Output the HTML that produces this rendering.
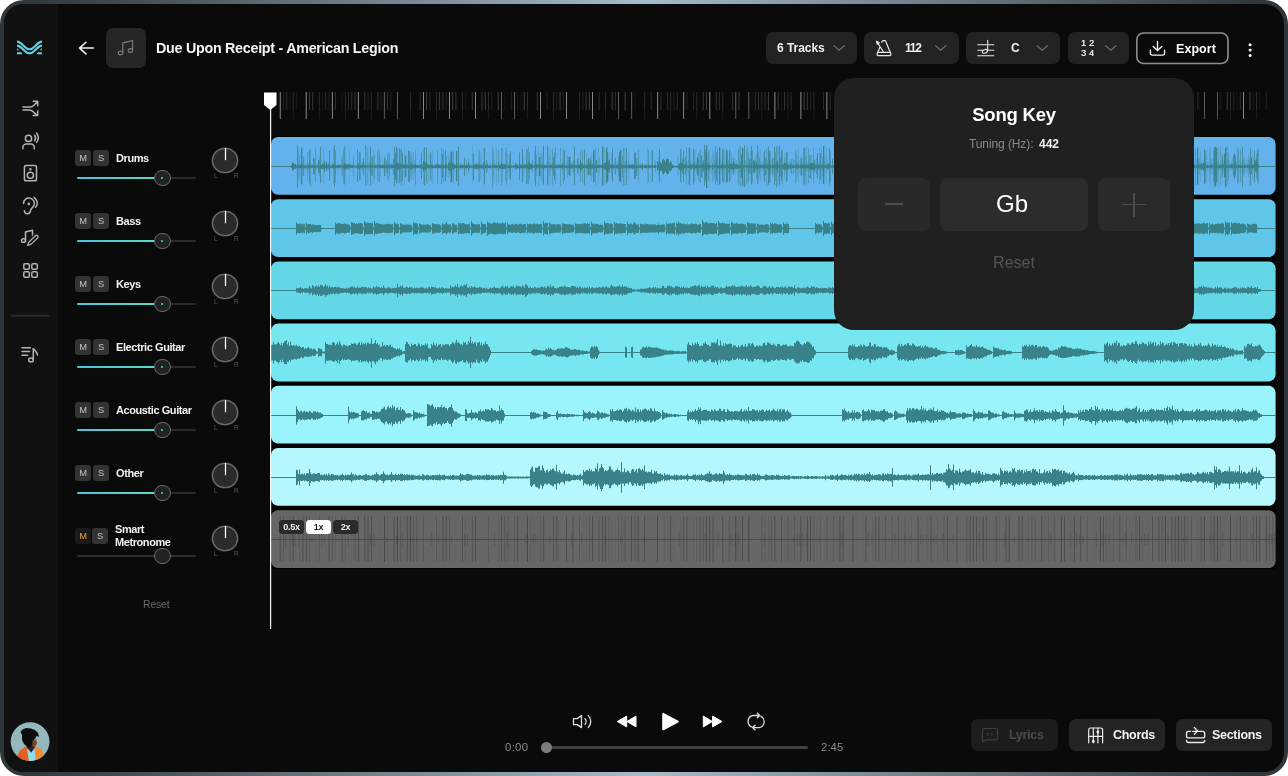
<!DOCTYPE html>
<html lang="en">
<head>
<meta charset="utf-8">
<title>Due Upon Receipt - American Legion</title>
<style>
*{box-sizing:border-box;margin:0;padding:0}
html,body{width:1288px;height:776px;overflow:hidden;background:#fff}
body{font-family:"Liberation Sans",sans-serif;color:#fff;position:relative}
#frame{position:absolute;left:0;top:0;width:1288px;height:776px;border-radius:24px;background:linear-gradient(90deg,#2f363b 0%,#30383d 2.5%,#a4bdcc 50%,#30383d 97.5%,#2f363b 100%);overflow:hidden}
#app{position:absolute;left:4px;top:4px;width:1280px;height:768px;border-radius:20px;background:#0a0a0a;overflow:hidden}
#side{position:absolute;left:0;top:0;width:53.5px;height:768px;background:#111111}
.abs{position:absolute}
.t,.lbl,.ms,.lr{will-change:transform}
svg{position:absolute;overflow:visible}
.ico{stroke:#b4b4b4;fill:none;stroke-width:1.5;stroke-linecap:round;stroke-linejoin:round}
.t{position:absolute;white-space:nowrap;line-height:1}
.pill{position:absolute;background:#232323;border-radius:7px;height:32px;top:28px}
.ms{position:absolute;width:16px;height:16px;border-radius:3px;background:#333;color:#c2c2c2;font-size:9.3px;font-weight:400;text-align:center;line-height:16.5px}
.lbl{position:absolute;font-size:11px;font-weight:700;color:#f2f2f2;white-space:nowrap;letter-spacing:-0.42px;line-height:12.7px}
.sl{position:absolute;left:73px;width:119px;height:2px;background:#2a2a2a;border-radius:1px}
.slf{position:absolute;left:73px;width:85px;height:2px;border-radius:1px;background:linear-gradient(90deg,#4ec3e0,#58dcc0)}
.th{position:absolute;left:150.3px;width:16.5px;height:16.5px;border-radius:50%;background:#222;border:1px solid #6a6a6a}
.th i{position:absolute;left:6.2px;top:6.2px;width:2px;height:2px;border-radius:50%;background:#4fd8d0}
.kn{position:absolute;left:208.2px;width:25.6px;height:25.6px;border-radius:50%;background:#2b2b2b;border:1px solid #7c7c7c;box-shadow:0 0 0 0.5px #4a4a4a}
.kn i{position:absolute;left:11.8px;top:-0.5px;width:1px;height:12px;background:#fff;box-shadow:0 0 0 0.2px #bbb}
.lr{position:absolute;font-size:6.5px;color:#5a5a5a;line-height:1}
</style>
</head>
<body>
<div id="frame">
<div id="app">
<div id="side"></div>

<!-- all vector art in one page-sized svg (coords = page coords) -->
<svg style="left:-4px;top:-4px" width="1288" height="776" viewBox="0 0 1288 776">
<rect x="279.8" y="92" width="0.8" height="27" fill="#e0e0e0" opacity="0.72"/><rect x="279.7" y="92" width="1" height="18" fill="#bbb" opacity="0.10"/><rect x="283.0" y="92" width="0.9" height="18" fill="#d0d0d0" opacity="0.14"/><rect x="286.3" y="92" width="0.9" height="18" fill="#d0d0d0" opacity="0.20"/><rect x="289.5" y="92" width="0.9" height="18" fill="#d0d0d0" opacity="0.08"/><rect x="292.8" y="92" width="0.8" height="27" fill="#e0e0e0" opacity="0.11"/><rect x="292.7" y="92" width="1" height="18" fill="#bbb" opacity="0.10"/><rect x="296.0" y="92" width="0.9" height="18" fill="#d0d0d0" opacity="0.08"/><rect x="305.8" y="92" width="0.8" height="27" fill="#e0e0e0" opacity="0.72"/><rect x="305.7" y="92" width="1" height="18" fill="#bbb" opacity="0.10"/><rect x="309.0" y="92" width="0.9" height="18" fill="#d0d0d0" opacity="0.30"/><rect x="312.3" y="92" width="0.9" height="18" fill="#d0d0d0" opacity="0.25"/><rect x="318.9" y="92" width="0.8" height="27" fill="#e0e0e0" opacity="0.11"/><rect x="318.8" y="92" width="1" height="18" fill="#bbb" opacity="0.10"/><rect x="322.1" y="92" width="0.9" height="18" fill="#d0d0d0" opacity="0.08"/><rect x="325.3" y="92" width="0.9" height="18" fill="#d0d0d0" opacity="0.20"/><rect x="328.6" y="92" width="0.9" height="18" fill="#d0d0d0" opacity="0.14"/><rect x="331.9" y="92" width="0.8" height="27" fill="#e0e0e0" opacity="0.72"/><rect x="331.8" y="92" width="1" height="18" fill="#bbb" opacity="0.10"/><rect x="335.1" y="92" width="0.9" height="18" fill="#d0d0d0" opacity="0.20"/><rect x="341.6" y="92" width="0.9" height="18" fill="#d0d0d0" opacity="0.08"/><rect x="344.9" y="92" width="0.8" height="27" fill="#e0e0e0" opacity="0.11"/><rect x="344.8" y="92" width="1" height="18" fill="#bbb" opacity="0.10"/><rect x="348.1" y="92" width="0.9" height="18" fill="#d0d0d0" opacity="0.20"/><rect x="351.3" y="92" width="0.9" height="18" fill="#d0d0d0" opacity="0.20"/><rect x="354.6" y="92" width="0.9" height="18" fill="#d0d0d0" opacity="0.25"/><rect x="357.9" y="92" width="0.8" height="27" fill="#e0e0e0" opacity="0.72"/><rect x="357.8" y="92" width="1" height="18" fill="#bbb" opacity="0.10"/><rect x="364.4" y="92" width="0.9" height="18" fill="#d0d0d0" opacity="0.25"/><rect x="367.6" y="92" width="0.9" height="18" fill="#d0d0d0" opacity="0.14"/><rect x="370.9" y="92" width="0.8" height="27" fill="#e0e0e0" opacity="0.11"/><rect x="370.8" y="92" width="1" height="18" fill="#bbb" opacity="0.10"/><rect x="377.4" y="92" width="0.9" height="18" fill="#d0d0d0" opacity="0.25"/><rect x="380.6" y="92" width="0.9" height="18" fill="#d0d0d0" opacity="0.14"/><rect x="383.9" y="92" width="0.8" height="27" fill="#e0e0e0" opacity="0.45"/><rect x="383.8" y="92" width="1" height="18" fill="#bbb" opacity="0.10"/><rect x="387.1" y="92" width="0.9" height="18" fill="#d0d0d0" opacity="0.25"/><rect x="390.4" y="92" width="0.9" height="18" fill="#d0d0d0" opacity="0.14"/><rect x="397.0" y="92" width="0.8" height="27" fill="#e0e0e0" opacity="0.45"/><rect x="396.9" y="92" width="1" height="18" fill="#bbb" opacity="0.10"/><rect x="410.0" y="92" width="0.8" height="27" fill="#e0e0e0" opacity="0.11"/><rect x="409.9" y="92" width="1" height="18" fill="#bbb" opacity="0.10"/><rect x="419.7" y="92" width="0.9" height="18" fill="#d0d0d0" opacity="0.20"/><rect x="423.0" y="92" width="0.8" height="27" fill="#e0e0e0" opacity="0.72"/><rect x="422.9" y="92" width="1" height="18" fill="#bbb" opacity="0.10"/><rect x="426.2" y="92" width="0.9" height="18" fill="#d0d0d0" opacity="0.30"/><rect x="429.4" y="92" width="0.9" height="18" fill="#d0d0d0" opacity="0.20"/><rect x="436.0" y="92" width="0.8" height="27" fill="#e0e0e0" opacity="0.11"/><rect x="435.9" y="92" width="1" height="18" fill="#bbb" opacity="0.10"/><rect x="439.2" y="92" width="0.9" height="18" fill="#d0d0d0" opacity="0.30"/><rect x="442.5" y="92" width="0.9" height="18" fill="#d0d0d0" opacity="0.25"/><rect x="445.7" y="92" width="0.9" height="18" fill="#d0d0d0" opacity="0.14"/><rect x="449.0" y="92" width="0.8" height="27" fill="#e0e0e0" opacity="0.72"/><rect x="448.9" y="92" width="1" height="18" fill="#bbb" opacity="0.10"/><rect x="452.2" y="92" width="0.9" height="18" fill="#d0d0d0" opacity="0.30"/><rect x="455.5" y="92" width="0.9" height="18" fill="#d0d0d0" opacity="0.25"/><rect x="462.0" y="92" width="0.8" height="27" fill="#e0e0e0" opacity="0.11"/><rect x="461.9" y="92" width="1" height="18" fill="#bbb" opacity="0.10"/><rect x="465.2" y="92" width="0.9" height="18" fill="#d0d0d0" opacity="0.08"/><rect x="471.8" y="92" width="0.9" height="18" fill="#d0d0d0" opacity="0.25"/><rect x="475.1" y="92" width="0.8" height="27" fill="#e0e0e0" opacity="0.72"/><rect x="475.0" y="92" width="1" height="18" fill="#bbb" opacity="0.10"/><rect x="481.5" y="92" width="0.9" height="18" fill="#d0d0d0" opacity="0.25"/><rect x="484.8" y="92" width="0.9" height="18" fill="#d0d0d0" opacity="0.30"/><rect x="488.1" y="92" width="0.8" height="27" fill="#e0e0e0" opacity="0.11"/><rect x="488.0" y="92" width="1" height="18" fill="#bbb" opacity="0.10"/><rect x="491.3" y="92" width="0.9" height="18" fill="#d0d0d0" opacity="0.14"/><rect x="497.8" y="92" width="0.9" height="18" fill="#d0d0d0" opacity="0.30"/><rect x="501.1" y="92" width="0.8" height="27" fill="#e0e0e0" opacity="0.45"/><rect x="501.0" y="92" width="1" height="18" fill="#bbb" opacity="0.10"/><rect x="504.3" y="92" width="0.9" height="18" fill="#d0d0d0" opacity="0.08"/><rect x="510.8" y="92" width="0.9" height="18" fill="#d0d0d0" opacity="0.14"/><rect x="514.1" y="92" width="0.8" height="27" fill="#e0e0e0" opacity="0.45"/><rect x="514.0" y="92" width="1" height="18" fill="#bbb" opacity="0.10"/><rect x="517.3" y="92" width="0.9" height="18" fill="#d0d0d0" opacity="0.08"/><rect x="520.6" y="92" width="0.9" height="18" fill="#d0d0d0" opacity="0.08"/><rect x="523.8" y="92" width="0.9" height="18" fill="#d0d0d0" opacity="0.30"/><rect x="527.1" y="92" width="0.8" height="27" fill="#e0e0e0" opacity="0.11"/><rect x="527.0" y="92" width="1" height="18" fill="#bbb" opacity="0.10"/><rect x="536.8" y="92" width="0.9" height="18" fill="#d0d0d0" opacity="0.25"/><rect x="540.1" y="92" width="0.8" height="27" fill="#e0e0e0" opacity="0.72"/><rect x="540.0" y="92" width="1" height="18" fill="#bbb" opacity="0.10"/><rect x="546.6" y="92" width="0.9" height="18" fill="#d0d0d0" opacity="0.14"/><rect x="553.2" y="92" width="0.8" height="27" fill="#e0e0e0" opacity="0.11"/><rect x="553.1" y="92" width="1" height="18" fill="#bbb" opacity="0.10"/><rect x="556.4" y="92" width="0.9" height="18" fill="#d0d0d0" opacity="0.14"/><rect x="559.6" y="92" width="0.9" height="18" fill="#d0d0d0" opacity="0.30"/><rect x="562.9" y="92" width="0.9" height="18" fill="#d0d0d0" opacity="0.14"/><rect x="566.2" y="92" width="0.8" height="27" fill="#e0e0e0" opacity="0.72"/><rect x="566.1" y="92" width="1" height="18" fill="#bbb" opacity="0.10"/><rect x="579.2" y="92" width="0.8" height="27" fill="#e0e0e0" opacity="0.11"/><rect x="579.1" y="92" width="1" height="18" fill="#bbb" opacity="0.10"/><rect x="582.4" y="92" width="0.9" height="18" fill="#d0d0d0" opacity="0.14"/><rect x="585.7" y="92" width="0.9" height="18" fill="#d0d0d0" opacity="0.25"/><rect x="588.9" y="92" width="0.9" height="18" fill="#d0d0d0" opacity="0.30"/><rect x="592.2" y="92" width="0.8" height="27" fill="#e0e0e0" opacity="0.72"/><rect x="592.1" y="92" width="1" height="18" fill="#bbb" opacity="0.10"/><rect x="598.7" y="92" width="0.9" height="18" fill="#d0d0d0" opacity="0.20"/><rect x="605.2" y="92" width="0.8" height="27" fill="#e0e0e0" opacity="0.11"/><rect x="605.1" y="92" width="1" height="18" fill="#bbb" opacity="0.10"/><rect x="611.7" y="92" width="0.9" height="18" fill="#d0d0d0" opacity="0.30"/><rect x="614.9" y="92" width="0.9" height="18" fill="#d0d0d0" opacity="0.20"/><rect x="618.2" y="92" width="0.8" height="27" fill="#e0e0e0" opacity="0.45"/><rect x="618.1" y="92" width="1" height="18" fill="#bbb" opacity="0.10"/><rect x="624.7" y="92" width="0.9" height="18" fill="#d0d0d0" opacity="0.30"/><rect x="631.3" y="92" width="0.8" height="27" fill="#e0e0e0" opacity="0.45"/><rect x="631.2" y="92" width="1" height="18" fill="#bbb" opacity="0.10"/><rect x="634.5" y="92" width="0.9" height="18" fill="#d0d0d0" opacity="0.08"/><rect x="644.3" y="92" width="0.8" height="27" fill="#e0e0e0" opacity="0.11"/><rect x="644.2" y="92" width="1" height="18" fill="#bbb" opacity="0.10"/><rect x="650.7" y="92" width="0.9" height="18" fill="#d0d0d0" opacity="0.20"/><rect x="657.3" y="92" width="0.8" height="27" fill="#e0e0e0" opacity="0.72"/><rect x="657.2" y="92" width="1" height="18" fill="#bbb" opacity="0.10"/><rect x="660.5" y="92" width="0.9" height="18" fill="#d0d0d0" opacity="0.20"/><rect x="667.0" y="92" width="0.9" height="18" fill="#d0d0d0" opacity="0.20"/><rect x="670.3" y="92" width="0.8" height="27" fill="#e0e0e0" opacity="0.11"/><rect x="670.2" y="92" width="1" height="18" fill="#bbb" opacity="0.10"/><rect x="673.5" y="92" width="0.9" height="18" fill="#d0d0d0" opacity="0.14"/><rect x="676.8" y="92" width="0.9" height="18" fill="#d0d0d0" opacity="0.20"/><rect x="683.3" y="92" width="0.8" height="27" fill="#e0e0e0" opacity="0.72"/><rect x="683.2" y="92" width="1" height="18" fill="#bbb" opacity="0.10"/><rect x="686.5" y="92" width="0.9" height="18" fill="#d0d0d0" opacity="0.14"/><rect x="693.0" y="92" width="0.9" height="18" fill="#d0d0d0" opacity="0.14"/><rect x="696.4" y="92" width="0.8" height="27" fill="#e0e0e0" opacity="0.11"/><rect x="696.3" y="92" width="1" height="18" fill="#bbb" opacity="0.10"/><rect x="702.8" y="92" width="0.9" height="18" fill="#d0d0d0" opacity="0.25"/><rect x="706.1" y="92" width="0.9" height="18" fill="#d0d0d0" opacity="0.30"/><rect x="709.4" y="92" width="0.8" height="27" fill="#e0e0e0" opacity="0.72"/><rect x="709.3" y="92" width="1" height="18" fill="#bbb" opacity="0.10"/><rect x="715.8" y="92" width="0.9" height="18" fill="#d0d0d0" opacity="0.25"/><rect x="719.1" y="92" width="0.9" height="18" fill="#d0d0d0" opacity="0.20"/><rect x="722.4" y="92" width="0.8" height="27" fill="#e0e0e0" opacity="0.11"/><rect x="722.3" y="92" width="1" height="18" fill="#bbb" opacity="0.10"/><rect x="732.1" y="92" width="0.9" height="18" fill="#d0d0d0" opacity="0.20"/><rect x="735.4" y="92" width="0.8" height="27" fill="#e0e0e0" opacity="0.45"/><rect x="735.3" y="92" width="1" height="18" fill="#bbb" opacity="0.10"/><rect x="738.6" y="92" width="0.9" height="18" fill="#d0d0d0" opacity="0.25"/><rect x="748.4" y="92" width="0.8" height="27" fill="#e0e0e0" opacity="0.45"/><rect x="748.3" y="92" width="1" height="18" fill="#bbb" opacity="0.10"/><rect x="751.6" y="92" width="0.9" height="18" fill="#d0d0d0" opacity="0.08"/><rect x="754.9" y="92" width="0.9" height="18" fill="#d0d0d0" opacity="0.20"/><rect x="758.1" y="92" width="0.9" height="18" fill="#d0d0d0" opacity="0.25"/><rect x="761.4" y="92" width="0.8" height="27" fill="#e0e0e0" opacity="0.11"/><rect x="761.3" y="92" width="1" height="18" fill="#bbb" opacity="0.10"/><rect x="764.6" y="92" width="0.9" height="18" fill="#d0d0d0" opacity="0.20"/><rect x="767.9" y="92" width="0.9" height="18" fill="#d0d0d0" opacity="0.30"/><rect x="774.5" y="92" width="0.8" height="27" fill="#e0e0e0" opacity="0.72"/><rect x="774.4" y="92" width="1" height="18" fill="#bbb" opacity="0.10"/><rect x="777.7" y="92" width="0.9" height="18" fill="#d0d0d0" opacity="0.25"/><rect x="780.9" y="92" width="0.9" height="18" fill="#d0d0d0" opacity="0.08"/><rect x="784.2" y="92" width="0.9" height="18" fill="#d0d0d0" opacity="0.25"/><rect x="787.5" y="92" width="0.8" height="27" fill="#e0e0e0" opacity="0.11"/><rect x="787.4" y="92" width="1" height="18" fill="#bbb" opacity="0.10"/><rect x="790.7" y="92" width="0.9" height="18" fill="#d0d0d0" opacity="0.20"/><rect x="800.5" y="92" width="0.8" height="27" fill="#e0e0e0" opacity="0.72"/><rect x="800.4" y="92" width="1" height="18" fill="#bbb" opacity="0.10"/><rect x="803.7" y="92" width="0.9" height="18" fill="#d0d0d0" opacity="0.30"/><rect x="806.9" y="92" width="0.9" height="18" fill="#d0d0d0" opacity="0.25"/><rect x="810.2" y="92" width="0.9" height="18" fill="#d0d0d0" opacity="0.14"/><rect x="813.5" y="92" width="0.8" height="27" fill="#e0e0e0" opacity="0.11"/><rect x="813.4" y="92" width="1" height="18" fill="#bbb" opacity="0.10"/><rect x="823.2" y="92" width="0.9" height="18" fill="#d0d0d0" opacity="0.20"/><rect x="826.5" y="92" width="0.8" height="27" fill="#e0e0e0" opacity="0.72"/><rect x="826.4" y="92" width="1" height="18" fill="#bbb" opacity="0.10"/><rect x="829.7" y="92" width="0.9" height="18" fill="#d0d0d0" opacity="0.20"/><rect x="836.2" y="92" width="0.9" height="18" fill="#d0d0d0" opacity="0.25"/><rect x="839.5" y="92" width="0.8" height="27" fill="#e0e0e0" opacity="0.11"/><rect x="839.4" y="92" width="1" height="18" fill="#bbb" opacity="0.10"/><rect x="842.7" y="92" width="0.9" height="18" fill="#d0d0d0" opacity="0.08"/><rect x="846.0" y="92" width="0.9" height="18" fill="#d0d0d0" opacity="0.30"/><rect x="849.3" y="92" width="0.9" height="18" fill="#d0d0d0" opacity="0.25"/><rect x="852.6" y="92" width="0.8" height="27" fill="#e0e0e0" opacity="0.45"/><rect x="852.5" y="92" width="1" height="18" fill="#bbb" opacity="0.10"/><rect x="855.8" y="92" width="0.9" height="18" fill="#d0d0d0" opacity="0.20"/><rect x="859.0" y="92" width="0.9" height="18" fill="#d0d0d0" opacity="0.20"/><rect x="862.3" y="92" width="0.9" height="18" fill="#d0d0d0" opacity="0.20"/><rect x="865.6" y="92" width="0.8" height="27" fill="#e0e0e0" opacity="0.45"/><rect x="865.5" y="92" width="1" height="18" fill="#bbb" opacity="0.10"/><rect x="868.8" y="92" width="0.9" height="18" fill="#d0d0d0" opacity="0.30"/><rect x="872.0" y="92" width="0.9" height="18" fill="#d0d0d0" opacity="0.25"/><rect x="878.6" y="92" width="0.8" height="27" fill="#e0e0e0" opacity="0.11"/><rect x="878.5" y="92" width="1" height="18" fill="#bbb" opacity="0.10"/><rect x="881.8" y="92" width="0.9" height="18" fill="#d0d0d0" opacity="0.30"/><rect x="885.0" y="92" width="0.9" height="18" fill="#d0d0d0" opacity="0.08"/><rect x="891.6" y="92" width="0.8" height="27" fill="#e0e0e0" opacity="0.72"/><rect x="891.5" y="92" width="1" height="18" fill="#bbb" opacity="0.10"/><rect x="894.8" y="92" width="0.9" height="18" fill="#d0d0d0" opacity="0.30"/><rect x="898.1" y="92" width="0.9" height="18" fill="#d0d0d0" opacity="0.20"/><rect x="901.3" y="92" width="0.9" height="18" fill="#d0d0d0" opacity="0.08"/><rect x="904.6" y="92" width="0.8" height="27" fill="#e0e0e0" opacity="0.11"/><rect x="904.5" y="92" width="1" height="18" fill="#bbb" opacity="0.10"/><rect x="907.8" y="92" width="0.9" height="18" fill="#d0d0d0" opacity="0.14"/><rect x="914.3" y="92" width="0.9" height="18" fill="#d0d0d0" opacity="0.14"/><rect x="917.6" y="92" width="0.8" height="27" fill="#e0e0e0" opacity="0.72"/><rect x="917.5" y="92" width="1" height="18" fill="#bbb" opacity="0.10"/><rect x="924.1" y="92" width="0.9" height="18" fill="#d0d0d0" opacity="0.20"/><rect x="927.4" y="92" width="0.9" height="18" fill="#d0d0d0" opacity="0.25"/><rect x="930.7" y="92" width="0.8" height="27" fill="#e0e0e0" opacity="0.11"/><rect x="930.6" y="92" width="1" height="18" fill="#bbb" opacity="0.10"/><rect x="937.1" y="92" width="0.9" height="18" fill="#d0d0d0" opacity="0.14"/><rect x="940.4" y="92" width="0.9" height="18" fill="#d0d0d0" opacity="0.30"/><rect x="943.7" y="92" width="0.8" height="27" fill="#e0e0e0" opacity="0.72"/><rect x="943.6" y="92" width="1" height="18" fill="#bbb" opacity="0.10"/><rect x="946.9" y="92" width="0.9" height="18" fill="#d0d0d0" opacity="0.20"/><rect x="950.1" y="92" width="0.9" height="18" fill="#d0d0d0" opacity="0.08"/><rect x="956.7" y="92" width="0.8" height="27" fill="#e0e0e0" opacity="0.11"/><rect x="956.6" y="92" width="1" height="18" fill="#bbb" opacity="0.10"/><rect x="959.9" y="92" width="0.9" height="18" fill="#d0d0d0" opacity="0.14"/><rect x="969.7" y="92" width="0.8" height="27" fill="#e0e0e0" opacity="0.45"/><rect x="969.6" y="92" width="1" height="18" fill="#bbb" opacity="0.10"/><rect x="976.2" y="92" width="0.9" height="18" fill="#d0d0d0" opacity="0.14"/><rect x="979.4" y="92" width="0.9" height="18" fill="#d0d0d0" opacity="0.08"/><rect x="982.7" y="92" width="0.8" height="27" fill="#e0e0e0" opacity="0.45"/><rect x="982.6" y="92" width="1" height="18" fill="#bbb" opacity="0.10"/><rect x="985.9" y="92" width="0.9" height="18" fill="#d0d0d0" opacity="0.08"/><rect x="989.2" y="92" width="0.9" height="18" fill="#d0d0d0" opacity="0.30"/><rect x="995.7" y="92" width="0.8" height="27" fill="#e0e0e0" opacity="0.11"/><rect x="995.6" y="92" width="1" height="18" fill="#bbb" opacity="0.10"/><rect x="999.0" y="92" width="0.9" height="18" fill="#d0d0d0" opacity="0.08"/><rect x="1002.2" y="92" width="0.9" height="18" fill="#d0d0d0" opacity="0.25"/><rect x="1005.5" y="92" width="0.9" height="18" fill="#d0d0d0" opacity="0.08"/><rect x="1008.8" y="92" width="0.8" height="27" fill="#e0e0e0" opacity="0.72"/><rect x="1008.7" y="92" width="1" height="18" fill="#bbb" opacity="0.10"/><rect x="1015.2" y="92" width="0.9" height="18" fill="#d0d0d0" opacity="0.20"/><rect x="1018.5" y="92" width="0.9" height="18" fill="#d0d0d0" opacity="0.30"/><rect x="1021.8" y="92" width="0.8" height="27" fill="#e0e0e0" opacity="0.11"/><rect x="1021.7" y="92" width="1" height="18" fill="#bbb" opacity="0.10"/><rect x="1031.5" y="92" width="0.9" height="18" fill="#d0d0d0" opacity="0.14"/><rect x="1034.8" y="92" width="0.8" height="27" fill="#e0e0e0" opacity="0.72"/><rect x="1034.7" y="92" width="1" height="18" fill="#bbb" opacity="0.10"/><rect x="1038.0" y="92" width="0.9" height="18" fill="#d0d0d0" opacity="0.30"/><rect x="1041.3" y="92" width="0.9" height="18" fill="#d0d0d0" opacity="0.20"/><rect x="1044.5" y="92" width="0.9" height="18" fill="#d0d0d0" opacity="0.30"/><rect x="1047.8" y="92" width="0.8" height="27" fill="#e0e0e0" opacity="0.11"/><rect x="1047.7" y="92" width="1" height="18" fill="#bbb" opacity="0.10"/><rect x="1051.0" y="92" width="0.9" height="18" fill="#d0d0d0" opacity="0.14"/><rect x="1054.3" y="92" width="0.9" height="18" fill="#d0d0d0" opacity="0.14"/><rect x="1057.5" y="92" width="0.9" height="18" fill="#d0d0d0" opacity="0.08"/><rect x="1060.8" y="92" width="0.8" height="27" fill="#e0e0e0" opacity="0.72"/><rect x="1060.7" y="92" width="1" height="18" fill="#bbb" opacity="0.10"/><rect x="1064.0" y="92" width="0.9" height="18" fill="#d0d0d0" opacity="0.25"/><rect x="1067.3" y="92" width="0.9" height="18" fill="#d0d0d0" opacity="0.30"/><rect x="1073.8" y="92" width="0.8" height="27" fill="#e0e0e0" opacity="0.11"/><rect x="1073.7" y="92" width="1" height="18" fill="#bbb" opacity="0.10"/><rect x="1077.1" y="92" width="0.9" height="18" fill="#d0d0d0" opacity="0.20"/><rect x="1080.3" y="92" width="0.9" height="18" fill="#d0d0d0" opacity="0.25"/><rect x="1086.9" y="92" width="0.8" height="27" fill="#e0e0e0" opacity="0.45"/><rect x="1086.8" y="92" width="1" height="18" fill="#bbb" opacity="0.10"/><rect x="1090.1" y="92" width="0.9" height="18" fill="#d0d0d0" opacity="0.14"/><rect x="1093.3" y="92" width="0.9" height="18" fill="#d0d0d0" opacity="0.25"/><rect x="1099.9" y="92" width="0.8" height="27" fill="#e0e0e0" opacity="0.45"/><rect x="1099.8" y="92" width="1" height="18" fill="#bbb" opacity="0.10"/><rect x="1106.3" y="92" width="0.9" height="18" fill="#d0d0d0" opacity="0.30"/><rect x="1109.6" y="92" width="0.9" height="18" fill="#d0d0d0" opacity="0.14"/><rect x="1112.9" y="92" width="0.8" height="27" fill="#e0e0e0" opacity="0.11"/><rect x="1112.8" y="92" width="1" height="18" fill="#bbb" opacity="0.10"/><rect x="1116.1" y="92" width="0.9" height="18" fill="#d0d0d0" opacity="0.20"/><rect x="1119.4" y="92" width="0.9" height="18" fill="#d0d0d0" opacity="0.08"/><rect x="1122.6" y="92" width="0.9" height="18" fill="#d0d0d0" opacity="0.30"/><rect x="1125.9" y="92" width="0.8" height="27" fill="#e0e0e0" opacity="0.72"/><rect x="1125.8" y="92" width="1" height="18" fill="#bbb" opacity="0.10"/><rect x="1129.1" y="92" width="0.9" height="18" fill="#d0d0d0" opacity="0.20"/><rect x="1132.4" y="92" width="0.9" height="18" fill="#d0d0d0" opacity="0.08"/><rect x="1138.9" y="92" width="0.8" height="27" fill="#e0e0e0" opacity="0.11"/><rect x="1138.8" y="92" width="1" height="18" fill="#bbb" opacity="0.10"/><rect x="1142.1" y="92" width="0.9" height="18" fill="#d0d0d0" opacity="0.25"/><rect x="1145.4" y="92" width="0.9" height="18" fill="#d0d0d0" opacity="0.08"/><rect x="1152.0" y="92" width="0.8" height="27" fill="#e0e0e0" opacity="0.72"/><rect x="1151.9" y="92" width="1" height="18" fill="#bbb" opacity="0.10"/><rect x="1155.2" y="92" width="0.9" height="18" fill="#d0d0d0" opacity="0.25"/><rect x="1158.4" y="92" width="0.9" height="18" fill="#d0d0d0" opacity="0.30"/><rect x="1161.7" y="92" width="0.9" height="18" fill="#d0d0d0" opacity="0.08"/><rect x="1165.0" y="92" width="0.8" height="27" fill="#e0e0e0" opacity="0.11"/><rect x="1164.9" y="92" width="1" height="18" fill="#bbb" opacity="0.10"/><rect x="1174.7" y="92" width="0.9" height="18" fill="#d0d0d0" opacity="0.30"/><rect x="1178.0" y="92" width="0.8" height="27" fill="#e0e0e0" opacity="0.72"/><rect x="1177.9" y="92" width="1" height="18" fill="#bbb" opacity="0.10"/><rect x="1184.4" y="92" width="0.9" height="18" fill="#d0d0d0" opacity="0.08"/><rect x="1191.0" y="92" width="0.8" height="27" fill="#e0e0e0" opacity="0.11"/><rect x="1190.9" y="92" width="1" height="18" fill="#bbb" opacity="0.10"/><rect x="1197.5" y="92" width="0.9" height="18" fill="#d0d0d0" opacity="0.20"/><rect x="1204.0" y="92" width="0.8" height="27" fill="#e0e0e0" opacity="0.45"/><rect x="1203.9" y="92" width="1" height="18" fill="#bbb" opacity="0.10"/><rect x="1217.0" y="92" width="0.8" height="27" fill="#e0e0e0" opacity="0.45"/><rect x="1216.9" y="92" width="1" height="18" fill="#bbb" opacity="0.10"/><rect x="1220.2" y="92" width="0.9" height="18" fill="#d0d0d0" opacity="0.14"/><rect x="1226.8" y="92" width="0.9" height="18" fill="#d0d0d0" opacity="0.30"/><rect x="1230.1" y="92" width="0.8" height="27" fill="#e0e0e0" opacity="0.11"/><rect x="1230.0" y="92" width="1" height="18" fill="#bbb" opacity="0.10"/><rect x="1233.3" y="92" width="0.9" height="18" fill="#d0d0d0" opacity="0.14"/><rect x="1236.5" y="92" width="0.9" height="18" fill="#d0d0d0" opacity="0.08"/><rect x="1239.8" y="92" width="0.9" height="18" fill="#d0d0d0" opacity="0.20"/><rect x="1243.1" y="92" width="0.8" height="27" fill="#e0e0e0" opacity="0.72"/><rect x="1243.0" y="92" width="1" height="18" fill="#bbb" opacity="0.10"/><rect x="1249.5" y="92" width="0.9" height="18" fill="#d0d0d0" opacity="0.30"/><rect x="1252.8" y="92" width="0.9" height="18" fill="#d0d0d0" opacity="0.08"/><rect x="1256.1" y="92" width="0.8" height="27" fill="#e0e0e0" opacity="0.11"/><rect x="1256.0" y="92" width="1" height="18" fill="#bbb" opacity="0.10"/><rect x="1259.3" y="92" width="0.9" height="18" fill="#d0d0d0" opacity="0.08"/><rect x="1265.8" y="92" width="0.9" height="18" fill="#d0d0d0" opacity="0.14"/>
<rect x="270" y="136" width="1006" height="433" fill="#030303"/>
<rect x="271" y="137.0" width="1004.6" height="57.8" rx="7" fill="#63b2ec"/>
<rect x="271" y="199.2" width="1004.6" height="57.8" rx="7" fill="#5fc6e9"/>
<rect x="271" y="261.4" width="1004.6" height="57.8" rx="7" fill="#63d7e6"/>
<rect x="271" y="323.6" width="1004.6" height="57.8" rx="7" fill="#76e6f1"/>
<rect x="271" y="385.8" width="1004.6" height="57.8" rx="7" fill="#9bf3fb"/>
<rect x="271" y="448.0" width="1004.6" height="57.8" rx="7" fill="#b5f7fd"/>
<rect x="271" y="510.2" width="1004.6" height="57.8" rx="7" fill="#676767"/>
<rect x="271" y="166" width="1004.6" height="1" fill="#3a8289"/>
<rect x="271" y="228" width="1004.6" height="1" fill="#3a8289"/>
<rect x="271" y="290" width="1004.6" height="1" fill="#3a8289"/>
<rect x="271" y="352" width="1004.6" height="1" fill="#3a8289"/>
<rect x="271" y="415" width="1004.6" height="1" fill="#3a8289"/>
<rect x="271" y="477" width="1004.6" height="1" fill="#3a8289"/>
<path d="M677 166.5V155.8h1V156.8h1V162.3h1V161.5h1V160h1V161.4h1V160.7h1V159.2h1V160.7h1V163.6h1V160.6h1V160.3h1V160.9h1V160.6h1V162.3h1V163.6h1V162.5h1V161h1V161.3h1V162.8h1V159.6h1V159.6h1V160.3h1V159.9h1V160.7h1V162.7h1V159.8h1V162.1h1V161.4h1V163.4h1V157h1V159.5h1V160.6h1V160.6h1V158.1h1V163.3h1V163.6h1V159.8h1V160.8h1V160h1V160.1h1V158.4h1V159.5h1V161.2h1V159.8h1V159.4h1V163.4h1V162.8h1V157.8h1V161.2h1V161h1V162.7h1V160.1h1V163h1V158.6h1V157.9h1V162.5h1V158.1h1V159h1V160.2h1V159.4h1V162.5h1V160.1h1V160.4h1V159.5h1V161.4h1V162.6h1V161.8h1V159.7h1V161.2h1V161.7h1V158.7h1V160.1h1V159.4h1V161h1V160.8h1V162.7h1V158.1h1V159.1h1V163.5h1V162.4h1V161.1h1V159.9h1V161.1h1V162.1h1V161.2h1V162.3h1V163.5h1V157.9h1V163h1V159.8h1V162.3h1V160.9h1V161.3h1V162.6h1V157.8h1V158.3h1V161.6h1V161.6h1V160.8h1V161.8h1V162.6h1V160.2h1V163.8h1V162.9h1V160h1V162.6h1V157.2h1V158h1V163.5h1V163.2h1V162.3h1V161.4h1V159.6h1V160.5h1V158.5h1V159.4h1V159.6h1V160.9h1V160.6h1V162.8h1V161.7h1V160.4h1V159h1V161.2h1V158.2h1V157.1h1V161h1V162.1h1V163.4h1V162.1h1V162.3h1V163.7h1V162.6h1V163.1h1V160h1V163.2h1V163.4h1V159.5h1V159.3h1V161.1h1V163.1h1V160.5h1V162.6h1V162.7h1V163.5h1V160.2h1V162h1V159.5h1V162.8h1V158.8h1V163.1h1V162.5h1V161.2h1V164.1h1V161.8h1V164.4h1V158.8h1V161.3h1V159.2h1V161.9h1V162.5h1V158.9h1V163.1h1V160.1h1V162.1h1V160.1h1V163.5h1V159.4h1V159.3h1V159h1V158.5h1V162.1h1V162.4h1V163.2h1V161.3h1V157.9h1V157.5h1V159.4h1V161.4h1V158.2h1V162h1V160.8h1V162h1V162.5h1V164.4h1V163.6h1V161.2h1V161.9h1V163h1V160.8h1V161.2h1V163h1V160.8h1V163.7h1V159.1h1V159.1h1V157.5h1V157.7h1V163.6h1V159.7h1V158.5h1V163.3h1V163.4h1V159.5h1V161.1h1V161.1h1V159.6h1V161.2h1V159.6h1V164.2h1V162.4h1V162.2h1V162.4h1V164.4h1V163.4h1V160.9h1V162.3h1V163.9h1V162.1h1V163.7h1V161.2h1V162.1h1V164.5h1V161.7h1V161.9h1V163h1V160.7h1V159.8h1V163.6h1V159.4h1V163.2h1V162.2h1V160.6h1V164h1V160h1V160.4h1V161h1V159.9h1V164.2h1V160h1V163.1h1V162.2h1V162.6h1V159.9h1V159.4h1V162.7h1V162.6h1V161.7h1V162.7h1V162.8h1V159.8h1V159.6h1V161.2h1V160.9h1V162.5h1V160.7h1V162.5h1V163.9h1V161h1V164.2h1V161.6h1V161.1h1V163.3h1V161.3h1V159.8h1V162h1V161h1V161h1V162.3h1V164.5h1V160.2h1V162.3h1V163h1V161h1V160.5h1V163.5h1V163.2h1V158h1V162.1h1V158.1h1V163.1h1V163.3h1V161.5h1V162.2h1V161.4h1V163.3h1V156.9h1V157.3h1V160h1V163h1V158.1h1V163.3h1V163h1V160.3h1V162.5h1V163.2h1V158.7h1V159.6h1V159.3h1V160.3h1V161h1V162.3h1V159.6h1V162.7h1V162.1h1V159.4h1V160.7h1V163.1h1V161.6h1V162.6h1V159.8h1V159.6h1V163.1h1V161.4h1V163.6h1V162.4h1V158.4h1V163h1V158.9h1V160.8h1V162.7h1V161.1h1V159.5h1V162.3h1V162.7h1V158.3h1V163.3h1V163.7h1V160.7h1V161.3h1V162.8h1V161h1V164.4h1V161.9h1V163.2h1V162h1V164.3h1V161.4h1V162.3h1V162.4h1V163.1h1V162.1h1V164h1V163.2h1V159.3h1V163.6h1V160.4h1V161.5h1V160.5h1V160.5h1V162.9h1V159.1h1V162.1h1V158.6h1V158.9h1V158.8h1V161.8h1V159.1h1V158.8h1V159.1h1V156.6h1V156.5h1V158.7h1V161.6h1V163.3h1V159.5h1V162.7h1V159.1h1V163.2h1V161.1h1V161.7h1V163.4h1V163.1h1V160.9h1V162.6h1V163.3h1V163.4h1V163.4h1V160.9h1V162.4h1V162.9h1V161.7h1V160h1V164.3h1V160.9h1V162.9h1V162.9h1V161.2h1V162.8h1V162.7h1V159.8h1V161.3h1V160.4h1V159.8h1V157.5h1V162.7h1V158.1h1V162.6h1V160.7h1V162.6h1V160.9h1V162.8h1V162.3h1V162.5h1V163.5h1V158.1h1V163.7h1V158h1V158.5h1V158.5h1V158.1h1V160.1h1V160.6h1V163.6h1V161.5h1V159.1h1V159.2h1V159.6h1V161.4h1V161.9h1V163.9h1V164h1V163.3h1V163.9h1V161.5h1V161.2h1V163.1h1V161.1h1V163.5h1V158.3h1V159.2h1V158.7h1V157.9h1V157.6h1V160.9h1V163.2h1V163.9h1V160h1V159.6h1V163.2h1V163.5h1V164.2h1V162.6h1V161.5h1V162.7h1V158.7h1V158h1V160.1h1V162.6h1V163.1h1V160.6h1V162.9h1V162.5h1V161.8h1V162.5h1V162.4h1V161.5h1V161h1V160.1h1V158.9h1V159.9h1V158.9h1V163.5h1V158.4h1V163.8h1V161.4h1V163.3h1V160.1h1V160.1h1V160.3h1V158.1h1V160.2h1V163.3h1V160.6h1V163.1h1V160.6h1V161.8h1V161h1V161.3h1V160.8h1V162.4h1V160.4h1V163h1V159.5h1V163.6h1V159.2h1V160.4h1V159.1h1V159.9h1V162.8h1V163.6h1V162.2h1V159.2h1V159.6h1V158.5h1V160.3h1V163.8h1V161.1h1V164.7h1V163.9h1V162.7h1V161.3h1V164.4h1V161.4h1V161.9h1V161.8h1V159.1h1V161.7h1V160.2h1V160.1h1V161.9h1V158.6h1V157.5h1V157.2h1V159h1V158.1h1V164.2h1V160.7h1V159.1h1V158.6h1V158.8h1V157.5h1V163.9h1V163.6h1V162.7h1V158.8h1V158h1V162h1V157.1h1V162.6h1V161.8h1V163h1V159.5h1V159h1V159.1h1V158.4h1V158.9h1V163.2h1V162.2h1V160.9h1V160.5h1V162.3h1V163.2h1V159.8h1V162.1h1V158.5h1V158.8h1V161.3h1V159.1h1V159.6h1V159.6h1V162.6h1V161.2h1V161.9h1V158.2h1V159.9h1V156.8h1V159.4h1V161.6h1V161.3h1V162.3h1V159.6h1V160h1V161.3h1V160.2h1V158.7h1V163.4h1V161.1h1V158.7h1V159.6h1V163.8h1V160.9h1V162h1V158.9h1V162.9h1V158.5h1V159.9h1V161.1h1V160.3h1V163h1V162.6h1V166.5V171h-1V169.8h-1V172.6h-1V171.8h-1V173.7h-1V174.1h-1V170.8h-1V174h-1V171.8h-1V171.6h-1V170.3h-1V173.1h-1V174h-1V172.1h-1V170.9h-1V174.4h-1V172.6h-1V172.5h-1V172.7h-1V173.5h-1V170.7h-1V171.4h-1V170.9h-1V173.4h-1V175h-1V173h-1V174.7h-1V171h-1V171.3h-1V170.4h-1V172.7h-1V172.4h-1V173.2h-1V171.9h-1V174.2h-1V174.1h-1V171.4h-1V173.3h-1V170.5h-1V170.4h-1V172.6h-1V172.5h-1V170.9h-1V170.6h-1V173.9h-1V174.7h-1V173.6h-1V174.4h-1V173.1h-1V170.6h-1V171.2h-1V170.4h-1V175.4h-1V171.4h-1V174.8h-1V174h-1V171.1h-1V169.5h-1V169.5h-1V175.4h-1V174.3h-1V173.1h-1V173.8h-1V172h-1V169.1h-1V174.6h-1V173.6h-1V175h-1V174.2h-1V173.9h-1V171.9h-1V172.2h-1V172.6h-1V171.9h-1V172.9h-1V171.4h-1V170.9h-1V171.2h-1V169.2h-1V171.4h-1V170.4h-1V169.1h-1V169.3h-1V171.3h-1V169.3h-1V172.1h-1V173.3h-1V172.9h-1V173.4h-1V170.5h-1V169.4h-1V170.5h-1V172.9h-1V173.3h-1V172.1h-1V173h-1V170.5h-1V172.6h-1V170.8h-1V172.3h-1V170.6h-1V172.2h-1V171.1h-1V172.4h-1V171.5h-1V172h-1V170.3h-1V172.2h-1V170.1h-1V172.8h-1V174.6h-1V172.1h-1V172.4h-1V172h-1V169.9h-1V171.7h-1V170.4h-1V174.2h-1V170.4h-1V173.8h-1V173h-1V173.2h-1V172.7h-1V172.4h-1V171.6h-1V171.4h-1V170.1h-1V171.8h-1V171.3h-1V170.7h-1V171.7h-1V170.3h-1V171h-1V172.3h-1V174.3h-1V173.4h-1V171.2h-1V171.5h-1V170.8h-1V169.2h-1V169.9h-1V170.2h-1V172.7h-1V173.2h-1V170.2h-1V170.5h-1V171.4h-1V175.6h-1V174.7h-1V174.8h-1V174.1h-1V173.9h-1V170.1h-1V171.6h-1V169.8h-1V171.9h-1V171.8h-1V169.3h-1V169.7h-1V169.3h-1V169.1h-1V170.9h-1V171.3h-1V172.8h-1V174.5h-1V173.8h-1V172.3h-1V169.5h-1V172.7h-1V172.3h-1V174.3h-1V174.3h-1V174.1h-1V174.6h-1V170.6h-1V173.6h-1V169.8h-1V170.4h-1V170.5h-1V170.3h-1V172.9h-1V170.9h-1V172.3h-1V171.4h-1V175h-1V171.4h-1V175.1h-1V172.8h-1V172.3h-1V172.4h-1V173.4h-1V170.6h-1V170.2h-1V172.1h-1V170.6h-1V170.4h-1V171.4h-1V168.8h-1V172.9h-1V171.3h-1V171.3h-1V170.7h-1V172.8h-1V170.4h-1V169.7h-1V170h-1V170.8h-1V171.5h-1V170.2h-1V170.7h-1V172.5h-1V171.8h-1V171.3h-1V173.9h-1V171.6h-1V173.4h-1V169.6h-1V171.6h-1V173.8h-1V175.3h-1V175.2h-1V173.8h-1V173.5h-1V173.1h-1V170.8h-1V173.7h-1V174h-1V173.1h-1V170.8h-1V173.8h-1V170.3h-1V172.2h-1V171.9h-1V171.6h-1V171.8h-1V170.1h-1V173.8h-1V170.2h-1V169.7h-1V170.6h-1V169.6h-1V170.8h-1V170.2h-1V171.8h-1V169.3h-1V171.5h-1V170.7h-1V171.6h-1V168.6h-1V171.6h-1V170.5h-1V171.9h-1V172h-1V169.8h-1V170h-1V174.9h-1V171.7h-1V171.1h-1V173.5h-1V172h-1V170.9h-1V171.8h-1V172.8h-1V170.3h-1V173.8h-1V171.2h-1V170.8h-1V171.6h-1V170.9h-1V173.3h-1V173.4h-1V170.4h-1V171.7h-1V170.5h-1V172.2h-1V173.4h-1V170.4h-1V170.6h-1V173h-1V171.4h-1V171.7h-1V173.1h-1V173.8h-1V172.4h-1V174.2h-1V170.5h-1V170.9h-1V173.1h-1V170.6h-1V170.7h-1V174h-1V170.3h-1V172.6h-1V175.8h-1V175h-1V171.1h-1V172.2h-1V170.9h-1V172.2h-1V170.9h-1V170.4h-1V174.9h-1V171.1h-1V175.1h-1V170.9h-1V170.1h-1V172.5h-1V171.7h-1V170.3h-1V171.4h-1V172.1h-1V169.3h-1V170.9h-1V172h-1V171.7h-1V170.9h-1V172.9h-1V171.3h-1V170.7h-1V172.1h-1V171.1h-1V169.7h-1V172.2h-1V169h-1V170.2h-1V172h-1V170.1h-1V171.9h-1V172.2h-1V173h-1V172.7h-1V170h-1V170.2h-1V170.7h-1V170.2h-1V171.1h-1V173.2h-1V172.7h-1V170h-1V170.7h-1V170.2h-1V173h-1V169.2h-1V172.6h-1V171.4h-1V172h-1V172.6h-1V170.1h-1V171.6h-1V171.4h-1V169.6h-1V173.8h-1V169.4h-1V172.8h-1V172h-1V170.7h-1V171.3h-1V171.4h-1V169.4h-1V170.3h-1V171.2h-1V169.1h-1V170.3h-1V169h-1V170.2h-1V171.3h-1V170.2h-1V168.9h-1V170.4h-1V170.4h-1V171.1h-1V169.1h-1V173.1h-1V171.7h-1V172.3h-1V172.6h-1V172h-1V173.2h-1V170.1h-1V170.7h-1V174.1h-1V172.4h-1V170.1h-1V174.7h-1V175.2h-1V173.2h-1V173.4h-1V169.7h-1V172.2h-1V170.3h-1V171.5h-1V172.3h-1V169.8h-1V171.3h-1V172h-1V169.4h-1V169.5h-1V170h-1V170.7h-1V171.7h-1V171.2h-1V174.3h-1V171.5h-1V173.5h-1V175.3h-1V175.1h-1V171.2h-1V169.8h-1V170.8h-1V170.8h-1V173.5h-1V173.3h-1V173.8h-1V173.5h-1V170h-1V172.3h-1V170.5h-1V172.2h-1V169.7h-1V173.5h-1V170.5h-1V171.1h-1V173.7h-1V171.6h-1V174.1h-1V169.5h-1V170.9h-1V169.5h-1V171.7h-1V170.9h-1V169.8h-1V173.5h-1V171h-1V172.9h-1V170.6h-1V172.9h-1V170.4h-1V170.8h-1V170.6h-1V172.9h-1V170.4h-1V171.5h-1V174.1h-1V174.2h-1V170.3h-1V170.9h-1V172.6h-1V170h-1V170.2h-1V169.3h-1V170.8h-1V171.9h-1V170.6h-1V171.6h-1V171.7h-1V175.5h-1V175.2h-1V172.1h-1V173.6h-1V172.2h-1V171.3h-1V170h-1V171.6h-1V171.8h-1V173.3h-1V174.1h-1V174.2h-1V172.3h-1V174h-1V171.3h-1V170.4h-1V170.5h-1V170.5h-1V174h-1V175.6h-1V171h-1V173.5h-1V170.5h-1V169.4h-1V172.9h-1V171.1h-1V171.5h-1V172.3h-1V171.6h-1V170.9h-1V173.9h-1V173.8h-1V171h-1V172.4h-1V171.4h-1V170.5h-1V173.2h-1V170.8h-1V174.8h-1V169.7h-1V171h-1V172.3h-1V171.8h-1V171.5h-1V173.6h-1V172h-1V171.1h-1V169.4h-1V173.6h-1V174.9h-1V170.6h-1V172.5h-1V171.5h-1V173.5h-1V173.3h-1V173.3h-1V171.3h-1V171.3h-1V172.7h-1V171.6h-1V170.9h-1V172h-1V173.6h-1V173h-1V172.8h-1V171.3h-1V173.8h-1V172.5h-1V174.3h-1V175h-1V171.3h-1V174h-1V174.1h-1V170.9h-1V172.7h-1V170.1h-1V171.7h-1V171.7h-1V174.4h-1V171.2h-1V170h-1V173h-1V172.9h-1V171.6h-1V173h-1V173.2h-1V173.2h-1V172.8h-1V172.7h-1V173.5h-1V170.7h-1V170.3h-1V174.9h-1V172.7h-1V171.7h-1V174.1h-1V174.7h-1V171.3h-1V171.9h-1V170.5h-1V173.1h-1V170.3h-1V172.5h-1V173.2h-1V171.8h-1V173.6h-1V173.7h-1V170.9h-1V171.2h-1V171.4h-1V170h-1V169.5h-1V170.1h-1V171.4h-1V171.8h-1V172.6h-1V172.4h-1V170.4h-1V172.3h-1V173.8h-1V172.9h-1V171.9h-1V172.3h-1V172.9h-1V171.5h-1V176.5h-1V177.3h-1Z" fill="#3a8289" opacity="0.22"/>
<path d="M291 166.5V165.1h1V162h1V162.7h1V163.1h1V162.9h1V163.9h1V163.8h1V162.9h1V164.5h1V163.2h1V161.2h1V161.7h1V160.8h1V163.7h1V164.6h1V164h1V161.1h1V162.7h1V162.6h1V163h1V164.1h1V164.3h1V163.3h1V163.9h1V162h1V165.1h1V163.6h1V162.2h1V165.4h1V162.9h1V165.2h1V164.7h1V161.3h1V161.3h1V162.2h1V160.4h1V163.2h1V162.3h1V161.9h1V161.9h1V164.2h1V163.6h1V162.4h1V164.6h1V159.7h1V162.3h1V160.1h1V163.2h1V164.8h1V164.5h1V161.7h1V163.6h1V163h1V162.1h1V160.7h1V161.8h1V163.7h1V162.8h1V163.4h1V161.7h1V164.2h1V162.6h1V164.1h1V164.5h1V163.6h1V165.1h1V164h1V163.2h1V165.4h1V163.6h1V165.1h1V163.1h1V163.5h1V163.9h1V163.1h1V163.1h1V164.8h1V163.4h1V163.3h1V163.5h1V162.1h1V164.5h1V164.8h1V165.2h1V163.7h1V162.7h1V163.3h1V164h1V163.3h1V163.9h1V164.5h1V165h1V161.2h1V161.6h1V163h1V160.7h1V162h1V164.3h1V160.5h1V163.4h1V162.5h1V162.4h1V165.2h1V160.4h1V165.1h1V162h1V162.1h1V163.4h1V161h1V162.9h1V161.7h1V164.2h1V165.1h1V163.3h1V165.3h1V162.8h1V164.6h1V165.6h1V164h1V163.4h1V164.1h1V165.1h1V163.6h1V163.1h1V161.8h1V163.8h1V163.4h1V164.7h1V164.4h1V163h1V164.6h1V165.1h1V162.2h1V162.9h1V163.6h1V164.2h1V164h1V165.1h1V163.2h1V163.2h1V163.4h1V162.8h1V164.4h1V164.4h1V164.5h1V162.5h1V163.6h1V162.2h1V165.3h1V161.5h1V163.2h1V163.1h1V165.3h1V164.8h1V164.1h1V163.9h1V165.2h1V164.6h1V163h1V160.1h1V160h1V162h1V164.9h1V163.5h1V164.8h1V163.4h1V162.8h1V161.3h1V162h1V163h1V162.4h1V164.7h1V161.9h1V161.4h1V162.5h1V161.5h1V163.5h1V164h1V163.9h1V162.9h1V162.8h1V164h1V162.9h1V163.4h1V164.5h1V162.3h1V162.7h1V164.6h1V162.1h1V165.2h1V162.9h1V164.6h1V164.3h1V161.1h1V161.1h1V164.7h1V164.1h1V164.3h1V163.4h1V164.4h1V162.3h1V162.8h1V160.8h1V163.3h1V163.3h1V162.1h1V161.9h1V161.3h1V161.1h1V161.1h1V161.5h1V164.9h1V161.7h1V164.2h1V164.1h1V159.3h1V159.9h1V162.1h1V159.5h1V165h1V164.4h1V161h1V160.8h1V163.4h1V164.1h1V161h1V164h1V165.2h1V165.1h1V162.2h1V162.9h1V164h1V163.2h1V165.1h1V163.1h1V165.1h1V165.1h1V160.2h1V160.9h1V164.2h1V160.4h1V160.8h1V162.2h1V164.2h1V164.7h1V163.3h1V165.4h1V163.9h1V162.4h1V163.9h1V161.8h1V164.4h1V162.4h1V162.6h1V163.5h1V161.6h1V165.3h1V161.5h1V162.6h1V164.8h1V160.9h1V162h1V162.8h1V165.5h1V164.6h1V164.2h1V163.7h1V163.1h1V163h1V165.5h1V164.1h1V164.8h1V164.1h1V161.8h1V162.4h1V162.1h1V164.1h1V165h1V165.2h1V165.4h1V161.5h1V161.3h1V160.6h1V162.2h1V160.9h1V163.3h1V164.6h1V164.8h1V162.3h1V163.5h1V161.8h1V163.3h1V163.6h1V164.5h1V164.6h1V164.2h1V163.3h1V164.7h1V161.4h1V161.5h1V161.4h1V164.8h1V161.1h1V162.2h1V164.3h1V161.4h1V165.3h1V165.1h1V164.1h1V163.2h1V165.3h1V162.3h1V162.8h1V165.2h1V165h1V161.8h1V163.2h1V163.1h1V164.4h1V161.1h1V165.2h1V164.6h1V163.5h1V161h1V165.1h1V161.7h1V161.7h1V161.5h1V164.6h1V160.6h1V164.6h1V161.8h1V165.3h1V161.6h1V165.2h1V164.6h1V161.1h1V165.3h1V162h1V162.5h1V163.6h1V163.5h1V164h1V163.7h1V163.7h1V163.9h1V163h1V163.8h1V161.8h1V161.2h1V163.1h1V163.8h1V165.1h1V164.3h1V164.2h1V164.8h1V164.2h1V164.3h1V164.2h1V163.4h1V164.1h1V165.7h1V165.6h1V165.6h1V165.5h1V165.7h1V165.2h1V161.5h1V162.3h1V166.5V170.3h-1V170.6h-1V168.2h-1V167.7h-1V167.5h-1V167.8h-1V167.7h-1V167.2h-1V168.6h-1V169.3h-1V168.4h-1V169h-1V168.6h-1V168.3h-1V168.8h-1V168.6h-1V167.8h-1V169.1h-1V169.9h-1V171.4h-1V170.8h-1V169.6h-1V170h-1V168.8h-1V169.7h-1V169h-1V168.7h-1V169.3h-1V169.3h-1V170h-1V170.3h-1V167.9h-1V171.5h-1V169.2h-1V168.8h-1V170.5h-1V167.8h-1V170.9h-1V168.5h-1V171.7h-1V169.6h-1V171.7h-1V171.4h-1V171.3h-1V168.2h-1V171.7h-1V169.6h-1V168.6h-1V168.9h-1V171.5h-1V169.3h-1V170.4h-1V169.5h-1V170.7h-1V168.7h-1V168.5h-1V170h-1V170.6h-1V168.4h-1V169.4h-1V168.9h-1V168.1h-1V168.4h-1V171.6h-1V168.5h-1V170.6h-1V171.4h-1V168.5h-1V171.6h-1V171.1h-1V171h-1V169h-1V169.4h-1V169.5h-1V168.4h-1V169.4h-1V169.5h-1V169.7h-1V170.8h-1V170.3h-1V170.1h-1V168.3h-1V168.6h-1V169.8h-1V171.1h-1V170.8h-1V172.3h-1V171.7h-1V171.5h-1V167.8h-1V168.5h-1V168.6h-1V168.9h-1V170.6h-1V169.9h-1V170.5h-1V168.6h-1V168.3h-1V169.6h-1V168.1h-1V169.9h-1V169.9h-1V169h-1V168.6h-1V168.4h-1V168h-1V169.6h-1V170.9h-1V171.2h-1V169h-1V170.3h-1V171.6h-1V167.9h-1V171.5h-1V169.7h-1V170.4h-1V170.1h-1V169.5h-1V171h-1V168.9h-1V170.6h-1V169.2h-1V168.2h-1V169.8h-1V168.7h-1V169.5h-1V170.9h-1V172h-1V171.7h-1V169.3h-1V172.2h-1V172.4h-1V168.8h-1V169.1h-1V169.4h-1V168.2h-1V169.6h-1V169.4h-1V169.6h-1V171.3h-1V168.3h-1V167.9h-1V168.8h-1V171.7h-1V169.9h-1V170.1h-1V171.6h-1V172.1h-1V168.5h-1V168.9h-1V173.2h-1V171.6h-1V173.3h-1V172.4h-1V169.2h-1V168.8h-1V171h-1V168.7h-1V171.1h-1V170.9h-1V171.5h-1V171.8h-1V170.3h-1V170.5h-1V170.2h-1V170.1h-1V171.9h-1V169.8h-1V170.1h-1V168.5h-1V169.1h-1V168.4h-1V168.9h-1V168h-1V171.2h-1V171.9h-1V168.9h-1V168.4h-1V169.5h-1V168.4h-1V170.3h-1V168.4h-1V169.9h-1V170h-1V169h-1V169.3h-1V169.8h-1V169h-1V169.5h-1V169.5h-1V169.1h-1V169.2h-1V169.8h-1V170.6h-1V170.4h-1V171.2h-1V170.4h-1V168.7h-1V170.6h-1V169.6h-1V170.8h-1V171.8h-1V170.3h-1V169.3h-1V169h-1V169.4h-1V168.2h-1V171.1h-1V172.5h-1V171.6h-1V170.6h-1V169.4h-1V168.4h-1V169.2h-1V169.4h-1V168.9h-1V168.3h-1V169.2h-1V170h-1V171.2h-1V167.9h-1V170.7h-1V169.8h-1V170.1h-1V169.1h-1V168.7h-1V168.6h-1V169.5h-1V169.7h-1V169.9h-1V169.4h-1V168h-1V168.9h-1V168.9h-1V169.7h-1V170.1h-1V170.3h-1V168.2h-1V168.3h-1V169.6h-1V168.7h-1V168.2h-1V169.5h-1V169.4h-1V171.2h-1V169.6h-1V169.2h-1V168.4h-1V168.7h-1V169.3h-1V169h-1V168.2h-1V168.8h-1V169.7h-1V168.3h-1V169.1h-1V168h-1V168.5h-1V170.4h-1V170.2h-1V171.2h-1V170h-1V170.4h-1V171h-1V168.6h-1V172.4h-1V169h-1V170.9h-1V169.9h-1V169.7h-1V172.5h-1V169.6h-1V171.4h-1V171.4h-1V170.3h-1V170.6h-1V171.1h-1V168.2h-1V168.8h-1V169.1h-1V169.5h-1V169.4h-1V170.1h-1V169.7h-1V169.5h-1V167.7h-1V168.2h-1V168.6h-1V170.1h-1V169h-1V169.8h-1V169.5h-1V169.1h-1V170.3h-1V169.6h-1V169h-1V169h-1V169.6h-1V168.5h-1V169.6h-1V168.1h-1V169.4h-1V168.8h-1V168.2h-1V168.9h-1V168.5h-1V168.8h-1V170.2h-1V169.4h-1V171.4h-1V170.1h-1V170.4h-1V169.4h-1V171.1h-1V172.1h-1V171h-1V170.1h-1V169.8h-1V171h-1V169.2h-1V169.1h-1V169.5h-1V172h-1V170.2h-1V173.3h-1V169.3h-1V170.3h-1V170h-1V169h-1V170.8h-1V171h-1V171h-1V170.3h-1V172.2h-1V171.4h-1V171.3h-1V171.2h-1V169.3h-1V168.3h-1V170.2h-1V168.3h-1V170.7h-1V169.1h-1V168.5h-1V170.6h-1V169.1h-1V169.5h-1V169.2h-1V169.1h-1V169.8h-1V169.7h-1V170.5h-1V171h-1V169.2h-1V169.3h-1V169.4h-1V172.4h-1V171.2h-1V171.8h-1V170.3h-1V169h-1V171h-1V169.3h-1V169.9h-1V169.5h-1V169.5h-1V170.5h-1V171.3h-1V168.1h-1Z" fill="#3a8289" opacity="0.15"/>
<path d="M297 145.8v41.9h0.8v-41.9zM301 147.4v37.2h1.3v-37.2zM309 150.6v32.7h0.8v-32.7zM313 157.7v16.5h0.8v-16.5zM318 160.2v12.6h1.3v-12.6zM320 146.7v36.6h0.8v-36.6zM324 160.6v12.0h0.8v-12.0zM329 150.8v29.8h0.8v-29.8zM334 144.7v42.3h0.8v-42.3zM357 149.2v32.9h0.8v-32.9zM359 151.8v28.7h0.8v-28.7zM363 158.2v17.0h0.8v-17.0zM370 146.9v38.7h0.8v-38.7zM384 157.2v18.7h0.8v-18.7zM393 158.9v15.5h0.8v-15.5zM394 147.3v39.2h0.8v-39.2zM395 152.8v27.3h0.8v-27.3zM396 146.6v37.0h0.8v-37.0zM399 148.2v35.4h0.8v-35.4zM402 152.5v28.5h0.8v-28.5zM405 155.5v21.2h1.3v-21.2zM408 150.6v31.3h0.8v-31.3zM421 152.7v26.4h0.8v-26.4zM424 146.9v38.0h0.8v-38.0zM426 147.5v35.9h0.8v-35.9zM430 152.3v27.0h0.8v-27.0zM442 154.2v23.6h0.8v-23.6zM445 150.8v30.0h0.8v-30.0zM451 151.8v30.2h1.3v-30.2zM456 150.9v30.2h1.3v-30.2zM458 146.5v39.2h0.8v-39.2zM464 157.8v18.4h0.8v-18.4zM473 153.8v26.3h0.8v-26.3zM484 148.0v36.6h0.8v-36.6zM510 151.2v28.8h0.8v-28.8zM519 152.5v27.7h0.8v-27.7zM522 149.1v33.2h0.8v-33.2zM535 146.1v40.1h0.8v-40.1zM539 156.9v19.0h1.3v-19.0zM543 145.5v39.2h0.8v-39.2zM547 145.2v39.0h0.8v-39.0zM553 157.3v18.3h0.8v-18.3zM554 152.4v27.6h0.8v-27.6zM564 150.6v29.8h0.8v-29.8zM569 156.8v18.9h1.3v-18.9zM574 147.2v37.8h0.8v-37.8zM577 158.9v14.5h0.8v-14.5zM584 149.1v35.6h0.8v-35.6zM588 158.4v16.5h1.3v-16.5zM590 157.5v18.0h0.8v-18.0zM593 150.3v31.8h1.3v-31.8zM596 159.9v12.5h1.3v-12.5zM602 146.3v39.6h1.3v-39.6zM606 147.3v35.9h1.3v-35.9zM607 151.9v29.1h1.3v-29.1zM608 159.9v12.6h0.8v-12.6zM609 159.6v13.2h0.8v-13.2zM612 148.6v32.9h0.8v-32.9zM615 157.8v16.9h0.8v-16.9zM619 151.9v29.0h1.3v-29.0zM620 150.1v32.1h1.3v-32.1zM626 148.3v36.6h0.8v-36.6zM634 153.0v25.9h0.8v-25.9zM635 152.3v27.0h0.8v-27.0zM652 150.5v30.8h0.8v-30.8zM659 148.8v33.3h0.8v-33.3zM680 149.4v32.6h0.8v-32.6zM683 150.7v30.7h0.8v-30.7zM689 147.1v38.1h0.8v-38.1zM693 148.8v35.9h0.8v-35.9zM697 157.4v18.3h1.3v-18.3zM701 155.7v21.7h0.8v-21.7zM703 160.5v11.6h0.8v-11.6zM704 145.1v40.2h0.8v-40.2zM705 150.2v30.6h0.8v-30.6zM706 145.2v42.9h1.3v-42.9zM716 151.9v29.1h0.8v-29.1zM719 147.2v37.4h1.3v-37.4zM722 149.2v32.6h0.8v-32.6zM726 149.4v33.0h1.3v-33.0zM727 151.4v29.9h0.8v-29.9zM729 149.7v32.0h0.8v-32.0zM741 155.3v22.6h1.3v-22.6zM742 147.9v37.8h1.3v-37.8zM744 145.2v41.7h0.8v-41.7zM751 146.3v38.2h0.8v-38.2zM753 160.0v13.1h0.8v-13.1zM764 150.7v31.0h0.8v-31.0zM768 146.7v37.7h0.8v-37.7zM769 151.3v31.2h1.3v-31.2zM774 147.1v37.8h0.8v-37.8zM777 160.3v12.7h0.8v-12.7zM779 145.0v40.7h0.8v-40.7zM781 150.7v30.5h0.8v-30.5zM786 152.3v29.4h0.8v-29.4zM801 158.3v17.0h0.8v-17.0zM814 160.0v12.1h0.8v-12.1zM817 153.1v25.5h0.8v-25.5zM820 153.0v27.1h0.8v-27.1zM823 145.9v37.9h1.3v-37.9zM829 147.9v36.8h0.8v-36.8zM832 158.8v14.7h0.8v-14.7zM835 150.9v32.0h0.8v-32.0zM841 149.9v33.1h0.8v-33.1zM848 146.8v37.7h0.8v-37.7zM855 147.9v35.0h0.8v-35.0zM867 158.7v15.3h0.8v-15.3zM868 160.8v11.7h0.8v-11.7zM869 153.1v27.5h0.8v-27.5zM872 144.8v42.3h0.8v-42.3zM881 148.1v36.3h0.8v-36.3zM888 147.4v39.4h1.3v-39.4zM889 150.0v32.8h1.3v-32.8zM912 154.3v24.1h0.8v-24.1zM928 151.2v32.0h0.8v-32.0zM939 155.6v22.0h0.8v-22.0zM944 147.2v40.7h0.8v-40.7zM945 150.1v33.5h0.8v-33.5zM950 150.3v32.3h1.3v-32.3zM957 150.2v31.8h0.8v-31.8zM963 150.9v29.2h0.8v-29.2zM964 159.3v14.5h0.8v-14.5zM965 148.8v34.8h0.8v-34.8zM976 150.2v32.7h0.8v-32.7zM990 151.1v29.3h0.8v-29.3zM994 147.6v36.2h0.8v-36.2zM995 147.3v38.0h0.8v-38.0zM999 146.5v38.9h0.8v-38.9zM1001 150.9v30.2h1.3v-30.2zM1003 146.8v38.8h0.8v-38.8zM1005 152.6v26.9h0.8v-26.9zM1007 157.9v16.2h0.8v-16.2zM1021 147.7v37.2h1.3v-37.2zM1026 154.6v22.8h0.8v-22.8zM1030 160.0v12.6h0.8v-12.6zM1031 146.8v40.1h0.8v-40.1zM1032 150.7v30.1h0.8v-30.1zM1033 151.0v31.0h0.8v-31.0zM1040 146.7v36.8h0.8v-36.8zM1045 152.6v27.0h0.8v-27.0zM1050 148.7v35.6h1.3v-35.6zM1054 146.5v38.9h0.8v-38.9zM1056 160.4v12.6h1.3v-12.6zM1060 159.3v13.9h0.8v-13.9zM1062 151.5v30.0h0.8v-30.0zM1067 152.8v27.4h0.8v-27.4zM1075 160.0v12.8h0.8v-12.8zM1087 155.3v21.3h0.8v-21.3zM1090 159.9v12.9h0.8v-12.9zM1100 156.9v18.8h0.8v-18.8zM1102 159.1v14.7h0.8v-14.7zM1107 155.9v20.3h0.8v-20.3zM1110 152.2v30.3h0.8v-30.3zM1115 155.2v22.2h0.8v-22.2zM1119 148.5v37.5h0.8v-37.5zM1120 147.0v39.2h0.8v-39.2zM1123 151.0v30.2h0.8v-30.2zM1139 146.8v39.4h0.8v-39.4zM1144 152.7v27.0h0.8v-27.0zM1145 157.9v15.9h0.8v-15.9zM1148 148.5v37.1h0.8v-37.1zM1150 155.9v21.0h0.8v-21.0zM1157 149.1v33.5h0.8v-33.5zM1165 150.6v31.7h0.8v-31.7zM1166 155.3v21.7h0.8v-21.7zM1170 150.9v31.8h0.8v-31.8zM1174 150.5v32.4h1.3v-32.4zM1177 147.8v37.2h1.3v-37.2zM1189 147.8v36.9h0.8v-36.9zM1190 154.5v24.3h0.8v-24.3zM1193 151.1v30.2h0.8v-30.2zM1197 147.5v37.2h1.3v-37.2zM1204 148.7v35.2h0.8v-35.2zM1214 147.3v39.5h0.8v-39.5zM1215 146.8v39.4h1.3v-39.4zM1216 148.1v34.2h1.3v-34.2zM1222 154.9v22.7h0.8v-22.7zM1224 153.4v24.2h1.3v-24.2zM1225 147.7v38.7h1.3v-38.7zM1234 153.0v26.8h0.8v-26.8zM1235 155.9v20.5h0.8v-20.5zM1242 147.3v39.9h0.8v-39.9zM1250 148.2v36.7h0.8v-36.7zM1251 157.2v17.6h0.8v-17.6zM1254 150.7v31.8h0.8v-31.8zM1257 150.0v30.9h0.8v-30.9z" fill="#3a8289" opacity="0.95"/>
<path d="M299 154.9v24.0h0.8v-24.0zM303 156.1v19.7h1.3v-19.7zM307 152.0v27.9h0.8v-27.9zM310 148.8v37.5h0.8v-37.5zM314 159.0v15.2h1.3v-15.2zM315 148.3v33.8h0.8v-33.8zM319 156.5v19.6h0.8v-19.6zM335 150.0v33.0h0.8v-33.0zM342 155.2v21.0h0.8v-21.0zM343 148.7v34.9h0.8v-34.9zM344 146.8v37.6h1.3v-37.6zM353 155.7v20.8h0.8v-20.8zM360 152.2v27.8h0.8v-27.8zM362 160.9v10.8h0.8v-10.8zM365 145.3v40.7h1.3v-40.7zM369 161.1v10.9h0.8v-10.9zM371 157.1v18.6h0.8v-18.6zM372 156.8v18.9h1.3v-18.9zM374 154.7v24.2h0.8v-24.2zM377 150.4v30.1h0.8v-30.1zM379 150.6v31.8h0.8v-31.8zM386 160.0v12.7h0.8v-12.7zM387 153.8v25.6h0.8v-25.6zM389 153.9v23.4h0.8v-23.4zM397 148.2v34.6h0.8v-34.6zM400 150.2v31.6h0.8v-31.6zM401 148.3v37.3h0.8v-37.3zM409 150.9v30.6h1.3v-30.6zM415 150.3v34.4h0.8v-34.4zM437 148.9v34.9h0.8v-34.9zM441 147.7v36.3h0.8v-36.3zM443 149.4v32.6h0.8v-32.6zM446 155.6v21.2h0.8v-21.2zM449 158.0v16.3h0.8v-16.3zM450 151.4v31.4h0.8v-31.4zM453 150.4v30.5h0.8v-30.5zM479 150.6v31.5h0.8v-31.5zM486 160.0v12.7h1.3v-12.7zM492 147.2v40.5h0.8v-40.5zM498 150.4v32.7h0.8v-32.7zM501 147.9v37.1h0.8v-37.1zM505 151.5v29.7h0.8v-29.7zM506 147.7v37.4h0.8v-37.4zM509 153.8v24.1h0.8v-24.1zM526 149.6v34.4h1.3v-34.4zM528 146.8v37.1h0.8v-37.1zM529 152.3v27.1h0.8v-27.1zM536 155.0v21.6h0.8v-21.6zM552 148.5v36.3h0.8v-36.3zM555 147.1v36.8h0.8v-36.8zM560 147.4v38.5h0.8v-38.5zM563 149.3v34.3h0.8v-34.3zM567 155.7v21.6h0.8v-21.6zM568 156.7v18.3h0.8v-18.3zM573 160.3v12.8h0.8v-12.8zM580 151.0v31.2h0.8v-31.2zM582 148.8v34.3h0.8v-34.3zM595 148.1v36.8h0.8v-36.8zM618 156.3v20.0h0.8v-20.0zM622 155.5v22.1h0.8v-22.1zM623 147.9v37.3h0.8v-37.3zM636 158.0v18.0h1.3v-18.0zM638 149.6v31.8h0.8v-31.8zM648 150.4v32.2h0.8v-32.2zM655 160.5v11.6h0.8v-11.6zM682 158.8v15.3h1.3v-15.3zM685 156.6v18.3h0.8v-18.3zM686 147.0v37.8h0.8v-37.8zM698 153.1v27.7h0.8v-27.7zM700 149.3v33.5h0.8v-33.5zM708 151.5v29.4h0.8v-29.4zM715 146.0v38.8h0.8v-38.8zM717 149.1v35.6h0.8v-35.6zM723 148.2v34.6h0.8v-34.6zM728 160.3v12.5h0.8v-12.5zM733 157.6v17.5h0.8v-17.5zM738 149.3v35.7h0.8v-35.7zM748 152.7v28.9h0.8v-28.9zM749 158.7v15.4h1.3v-15.4zM752 150.1v33.2h0.8v-33.2zM755 160.2v12.0h0.8v-12.0zM756 154.4v24.1h0.8v-24.1zM757 145.4v39.2h1.3v-39.2zM759 157.1v19.3h0.8v-19.3zM765 157.3v17.8h1.3v-17.8zM772 157.7v17.5h1.3v-17.5zM775 151.8v29.5h0.8v-29.5zM776 145.9v41.2h1.3v-41.2zM780 157.1v19.6h1.3v-19.6zM782 149.1v34.8h0.8v-34.8zM787 151.9v28.0h0.8v-28.0zM791 159.2v14.4h0.8v-14.4zM795 149.2v33.5h0.8v-33.5zM803 148.1v37.5h0.8v-37.5zM804 147.8v36.4h1.3v-36.4zM805 157.1v18.1h0.8v-18.1zM808 148.2v34.7h0.8v-34.7zM809 155.3v22.7h0.8v-22.7zM810 155.2v23.2h0.8v-23.2zM813 147.0v36.6h0.8v-36.6zM830 151.6v30.0h0.8v-30.0zM834 152.3v26.9h0.8v-26.9zM836 152.2v28.7h0.8v-28.7zM839 156.4v19.4h0.8v-19.4zM840 157.3v18.0h0.8v-18.0zM849 151.0v29.2h0.8v-29.2zM852 150.1v33.8h0.8v-33.8zM856 148.7v34.5h0.8v-34.5zM857 151.6v28.4h0.8v-28.4zM862 149.2v34.4h0.8v-34.4zM865 148.3v34.5h0.8v-34.5zM892 157.9v17.8h0.8v-17.8zM893 156.5v20.4h0.8v-20.4zM895 155.8v21.5h0.8v-21.5zM897 158.7v15.4h0.8v-15.4zM900 145.7v39.1h0.8v-39.1zM904 157.0v18.8h0.8v-18.8zM906 149.0v32.0h0.8v-32.0zM907 147.5v36.7h0.8v-36.7zM908 156.9v18.8h0.8v-18.8zM909 145.5v39.1h0.8v-39.1zM913 146.8v41.4h1.3v-41.4zM915 150.2v34.1h0.8v-34.1zM931 150.9v30.9h0.8v-30.9zM942 159.8v12.9h0.8v-12.9zM943 150.1v31.8h0.8v-31.8zM946 154.2v24.4h1.3v-24.4zM947 150.0v31.2h0.8v-31.2zM953 150.2v32.5h1.3v-32.5zM968 150.3v33.3h0.8v-33.3zM973 155.8v22.1h0.8v-22.1zM977 155.4v20.7h0.8v-20.7zM985 150.4v31.8h1.3v-31.8zM987 152.5v29.0h0.8v-29.0zM991 147.8v34.4h0.8v-34.4zM993 149.6v33.9h0.8v-33.9zM997 147.8v35.7h0.8v-35.7zM1000 146.0v41.8h0.8v-41.8zM1004 148.8v32.9h0.8v-32.9zM1010 159.4v13.5h0.8v-13.5zM1012 153.9v24.2h0.8v-24.2zM1016 150.5v30.7h0.8v-30.7zM1019 155.4v22.5h0.8v-22.5zM1020 150.7v30.7h0.8v-30.7zM1028 146.5v37.4h0.8v-37.4zM1034 151.0v29.0h1.3v-29.0zM1038 158.0v15.8h1.3v-15.8zM1042 145.9v39.6h0.8v-39.6zM1052 158.3v16.7h1.3v-16.7zM1058 155.1v23.0h0.8v-23.0zM1066 148.7v35.8h0.8v-35.8zM1069 149.2v34.4h0.8v-34.4zM1072 151.6v30.1h0.8v-30.1zM1076 152.5v27.4h0.8v-27.4zM1080 147.2v36.1h0.8v-36.1zM1085 153.2v25.6h0.8v-25.6zM1097 149.1v32.6h0.8v-32.6zM1098 154.4v24.2h0.8v-24.2zM1129 149.3v32.2h1.3v-32.2zM1130 147.3v36.5h0.8v-36.5zM1132 146.9v38.5h0.8v-38.5zM1135 153.5v25.9h1.3v-25.9zM1138 154.4v23.9h0.8v-23.9zM1142 150.1v30.4h1.3v-30.4zM1147 149.6v33.7h0.8v-33.7zM1159 149.5v34.2h0.8v-34.2zM1161 159.7v13.7h1.3v-13.7zM1163 149.9v31.7h0.8v-31.7zM1171 149.5v33.4h1.3v-33.4zM1172 147.0v35.9h0.8v-35.9zM1186 152.0v28.2h0.8v-28.2zM1195 148.3v37.1h0.8v-37.1zM1205 150.7v32.1h1.3v-32.1zM1213 150.1v32.2h1.3v-32.2zM1228 152.2v28.9h0.8v-28.9zM1233 155.2v21.6h1.3v-21.6zM1237 147.4v36.7h0.8v-36.7zM1238 149.3v33.0h0.8v-33.0zM1240 149.5v33.1h0.8v-33.1zM1248 155.7v21.5h0.8v-21.5zM1249 159.2v14.6h0.8v-14.6zM1255 159.8v12.7h1.3v-12.7zM1256 154.0v24.2h0.8v-24.2zM1258 148.4v35.7h0.8v-35.7z" fill="#3a8289" opacity="0.62"/>
<path d="M298 148.7v33.3h0.8v-33.3zM323 147.7v36.0h0.8v-36.0zM333 147.7v36.4h0.8v-36.4zM341 158.5v16.2h0.8v-16.2zM349 150.7v31.8h0.8v-31.8zM367 148.3v37.2h1.3v-37.2zM373 150.1v33.5h0.8v-33.5zM378 147.9v34.8h0.8v-34.8zM380 156.5v19.8h0.8v-19.8zM385 157.7v18.0h0.8v-18.0zM388 151.2v30.8h0.8v-30.8zM404 148.3v37.7h0.8v-37.7zM410 156.4v20.0h0.8v-20.0zM411 152.7v26.4h1.3v-26.4zM412 160.9v11.5h0.8v-11.5zM413 152.4v27.4h0.8v-27.4zM414 159.8v13.1h0.8v-13.1zM419 159.7v12.9h0.8v-12.9zM423 149.8v34.1h0.8v-34.1zM428 152.6v29.3h0.8v-29.3zM431 152.9v28.9h0.8v-28.9zM432 149.8v33.1h0.8v-33.1zM448 154.7v23.2h0.8v-23.2zM466 157.9v16.9h0.8v-16.9zM468 159.0v14.6h1.3v-14.6zM472 147.0v36.8h0.8v-36.8zM478 148.8v33.5h0.8v-33.5zM480 153.3v25.8h0.8v-25.8zM483 147.9v35.8h0.8v-35.8zM493 150.5v32.6h1.3v-32.6zM496 147.7v37.6h0.8v-37.6zM502 148.0v34.8h0.8v-34.8zM507 153.1v27.6h0.8v-27.6zM523 156.1v20.8h0.8v-20.8zM527 148.7v35.6h0.8v-35.6zM532 160.2v12.9h0.8v-12.9zM534 150.8v30.6h0.8v-30.6zM538 146.1v40.3h0.8v-40.3zM540 153.9v23.5h0.8v-23.5zM541 153.0v26.9h0.8v-26.9zM542 148.9v34.3h0.8v-34.3zM548 147.7v38.2h0.8v-38.2zM549 155.5v21.3h0.8v-21.3zM550 149.1v35.7h0.8v-35.7zM562 158.3v16.7h0.8v-16.7zM570 160.5v11.4h0.8v-11.4zM578 157.3v17.9h0.8v-17.9zM586 154.1v23.7h0.8v-23.7zM587 158.5v15.8h1.3v-15.8zM591 152.6v28.8h0.8v-28.8zM594 150.3v31.0h0.8v-31.0zM598 147.7v35.7h0.8v-35.7zM599 157.5v18.3h0.8v-18.3zM604 148.1v36.7h0.8v-36.7zM611 153.5v25.6h1.3v-25.6zM624 147.9v37.3h0.8v-37.3zM625 160.5v12.3h0.8v-12.3zM628 151.7v29.3h0.8v-29.3zM647 147.2v37.9h0.8v-37.9zM651 148.7v34.0h0.8v-34.0zM658 156.5v19.3h0.8v-19.3zM681 148.6v35.1h0.8v-35.1zM688 147.8v36.2h0.8v-36.2zM690 149.0v32.5h0.8v-32.5zM694 149.8v32.5h1.3v-32.5zM696 159.4v13.8h0.8v-13.8zM699 151.4v31.1h0.8v-31.1zM702 154.6v23.4h0.8v-23.4zM709 149.7v33.5h0.8v-33.5zM712 149.1v33.1h0.8v-33.1zM713 152.3v28.0h1.3v-28.0zM714 154.4v23.2h0.8v-23.2zM724 150.8v31.2h0.8v-31.2zM730 151.1v30.6h0.8v-30.6zM731 152.6v26.0h0.8v-26.0zM739 147.0v37.6h1.3v-37.6zM740 146.3v41.0h1.3v-41.0zM746 147.4v37.6h1.3v-37.6zM747 147.9v34.8h1.3v-34.8zM750 151.0v29.3h0.8v-29.3zM758 152.0v28.7h0.8v-28.7zM760 149.8v32.2h0.8v-32.2zM763 152.3v27.7h0.8v-27.7zM766 148.8v37.3h1.3v-37.3zM770 159.3v14.2h0.8v-14.2zM778 147.8v35.8h0.8v-35.8zM784 152.8v27.0h0.8v-27.0zM793 159.4v13.4h0.8v-13.4zM796 151.5v29.1h0.8v-29.1zM797 155.1v22.9h0.8v-22.9zM798 149.4v33.4h0.8v-33.4zM800 156.1v20.5h0.8v-20.5zM806 146.1v39.8h0.8v-39.8zM811 153.9v26.0h0.8v-26.0zM816 158.2v16.4h1.3v-16.4zM819 147.3v37.0h0.8v-37.0zM821 148.3v34.8h0.8v-34.8zM822 155.8v21.0h1.3v-21.0zM824 155.1v21.7h0.8v-21.7zM826 149.1v33.3h0.8v-33.3zM837 147.9v38.5h1.3v-38.5zM842 152.5v27.8h0.8v-27.8zM845 146.1v40.4h0.8v-40.4zM847 151.5v29.9h0.8v-29.9zM850 146.5v40.3h0.8v-40.3zM860 148.6v34.0h0.8v-34.0zM861 148.8v34.7h0.8v-34.7zM871 155.8v21.5h0.8v-21.5zM877 146.3v38.1h0.8v-38.1zM885 149.9v32.2h0.8v-32.2zM894 150.5v32.9h0.8v-32.9zM901 151.2v29.1h0.8v-29.1zM902 145.2v41.4h0.8v-41.4zM911 155.0v23.8h0.8v-23.8zM917 147.1v38.1h1.3v-38.1zM918 152.0v28.5h0.8v-28.5zM919 149.4v32.9h0.8v-32.9zM923 148.0v36.1h1.3v-36.1zM932 147.4v37.9h0.8v-37.9zM933 150.8v29.7h0.8v-29.7zM936 153.3v25.6h0.8v-25.6zM941 151.3v30.5h0.8v-30.5zM952 157.0v19.5h0.8v-19.5zM954 149.0v34.1h0.8v-34.1zM955 148.1v37.1h0.8v-37.1zM974 147.0v39.4h1.3v-39.4zM975 149.9v34.2h1.3v-34.2zM978 157.6v17.7h0.8v-17.7zM983 146.4v38.7h0.8v-38.7zM986 147.5v38.6h1.3v-38.6zM1008 149.3v32.8h0.8v-32.8zM1009 157.9v16.4h0.8v-16.4zM1011 150.9v29.5h0.8v-29.5zM1013 147.1v38.9h1.3v-38.9zM1022 158.2v17.1h0.8v-17.1zM1024 148.0v37.1h0.8v-37.1zM1029 147.4v39.2h0.8v-39.2zM1036 149.3v33.7h0.8v-33.7zM1037 148.4v35.8h0.8v-35.8zM1039 159.9v13.3h0.8v-13.3zM1049 153.5v24.7h0.8v-24.7zM1053 154.2v24.8h1.3v-24.8zM1055 149.6v33.3h0.8v-33.3zM1059 148.2v35.4h0.8v-35.4zM1061 147.8v34.7h0.8v-34.7zM1064 147.6v38.7h0.8v-38.7zM1071 148.6v37.8h1.3v-37.8zM1074 153.0v25.7h0.8v-25.7zM1081 146.6v40.2h0.8v-40.2zM1088 145.9v38.7h0.8v-38.7zM1089 151.9v26.9h0.8v-26.9zM1095 152.8v28.1h0.8v-28.1zM1096 157.3v18.3h1.3v-18.3zM1099 149.2v34.4h0.8v-34.4zM1104 159.4v14.2h0.8v-14.2zM1106 146.5v37.0h1.3v-37.0zM1109 159.3v13.8h0.8v-13.8zM1112 149.8v31.0h1.3v-31.0zM1122 151.6v28.7h0.8v-28.7zM1125 147.8v36.9h1.3v-36.9zM1134 149.4v32.9h0.8v-32.9zM1143 146.7v40.4h0.8v-40.4zM1146 149.9v31.3h0.8v-31.3zM1149 152.1v28.0h0.8v-28.0zM1153 153.2v27.5h0.8v-27.5zM1154 150.4v33.5h1.3v-33.5zM1156 155.3v21.6h0.8v-21.6zM1158 152.8v25.9h1.3v-25.9zM1167 148.3v37.8h1.3v-37.8zM1168 150.8v29.2h0.8v-29.2zM1176 153.1v26.5h0.8v-26.5zM1182 153.6v27.4h0.8v-27.4zM1188 152.6v26.6h1.3v-26.6zM1192 147.1v36.5h0.8v-36.5zM1199 159.2v14.5h0.8v-14.5zM1200 150.9v30.3h0.8v-30.3zM1209 151.8v29.4h0.8v-29.4zM1210 146.4v39.5h0.8v-39.5zM1218 147.0v40.9h0.8v-40.9zM1220 146.4v39.1h1.3v-39.1zM1226 146.2v41.5h0.8v-41.5zM1227 145.9v38.6h0.8v-38.6zM1243 159.1v15.1h1.3v-15.1zM1244 156.3v20.2h0.8v-20.2zM1252 153.1v26.6h0.8v-26.6z" fill="#3a8289" opacity="0.36"/>
<path d="M291 166.5V165.1h1V162.4h1V162.9h1V164.1h1V164.2h1V165.4h1V165.7h1V164.6h1V165.1h1V165h1V165h1V164.4h1V165.6h1V164.9h1V165.4h1V164.7h1V165.5h1V164.4h1V165.4h1V165.5h1V165.1h1V165.1h1V165.2h1V164.9h1V165.4h1V165.3h1V165.5h1V165h1V164.9h1V164.6h1V164.6h1V163.7h1V163.8h1V164.5h1V164.7h1V162.4h1V164.8h1V164.4h1V164.4h1V165.5h1V165.3h1V164.6h1V164.6h1V164.7h1V164.8h1V165.2h1V165h1V164.8h1V164.4h1V165.2h1V165.4h1V165.3h1V164.8h1V163.5h1V163.6h1V164.7h1V164.3h1V164.2h1V165.1h1V164.8h1V164.8h1V164.9h1V165.4h1V165.5h1V165.7h1V165.6h1V164.9h1V163.6h1V165.2h1V164.9h1V165.1h1V164.6h1V165.3h1V165h1V165h1V165.3h1V165.3h1V165.2h1V165.3h1V164.3h1V165.1h1V164.9h1V165.5h1V165.7h1V164.8h1V165.3h1V165.3h1V165.1h1V164.6h1V165.1h1V165.1h1V164.4h1V165h1V164.9h1V165h1V165h1V164.6h1V164.6h1V164.6h1V165.5h1V164.2h1V164.9h1V165.3h1V165.1h1V164.8h1V162.6h1V162.4h1V163.6h1V164.8h1V164.1h1V165.5h1V164.6h1V164.6h1V164.9h1V165.3h1V165.3h1V164.3h1V165h1V165.4h1V164.4h1V162.7h1V164.6h1V164.8h1V164.4h1V164.6h1V164.9h1V165.1h1V165.1h1V165.3h1V164.9h1V164h1V164.6h1V161.1h1V164.3h1V162.5h1V163.5h1V164.6h1V164.3h1V165h1V164.6h1V164.7h1V164.9h1V165.5h1V165.6h1V164.4h1V164.8h1V164.6h1V164.6h1V164.7h1V165.1h1V164.7h1V165h1V164.7h1V165.3h1V164.9h1V164h1V165.4h1V162.8h1V164h1V162.2h1V162.7h1V163.5h1V164.1h1V164.8h1V164.8h1V164.9h1V165.1h1V164.9h1V165.4h1V164.7h1V164.5h1V165h1V165.1h1V164.8h1V165.1h1V165.1h1V165h1V162.2h1V165.1h1V165.6h1V165.3h1V165.6h1V165.1h1V164.7h1V163.7h1V163.9h1V164.7h1V163.8h1V165.1h1V165.2h1V164.6h1V165.2h1V162.8h1V165.5h1V164.9h1V165.5h1V164.1h1V165.4h1V165.4h1V164.5h1V165.7h1V165h1V165.1h1V164.8h1V165h1V165h1V165.3h1V162.2h1V165h1V164.5h1V163.2h1V164.3h1V163.9h1V164.3h1V164.6h1V165.8h1V165.6h1V164.9h1V164.4h1V165.2h1V165.2h1V165.8h1V165.2h1V165.5h1V163.6h1V164.5h1V164.7h1V165.2h1V163h1V164.7h1V164.7h1V165.4h1V165.3h1V164.4h1V164.6h1V163.8h1V164.7h1V162.7h1V163.7h1V163.7h1V163.8h1V165.1h1V165.5h1V164.9h1V162.9h1V164.2h1V164.3h1V164.9h1V164.8h1V164.6h1V164.9h1V164.4h1V164.6h1V164.9h1V165.3h1V164.9h1V165.4h1V165.6h1V164.9h1V164.2h1V165.1h1V164.6h1V165h1V165.5h1V165.2h1V164.8h1V164.7h1V165.3h1V164.8h1V164.9h1V165h1V163.5h1V165.6h1V165.3h1V165.6h1V164.9h1V165.6h1V165h1V165.1h1V164.8h1V164.3h1V164.4h1V165.5h1V165.2h1V165.1h1V165.1h1V164.8h1V164.4h1V164.8h1V159.3h1V163.4h1V164.1h1V165.3h1V164.7h1V165.4h1V164.4h1V164.5h1V164.7h1V164.1h1V163.9h1V164.6h1V164.2h1V164.1h1V165h1V165.3h1V164.5h1V165h1V164.8h1V164.7h1V165.6h1V165.1h1V164.6h1V164.4h1V163.3h1V162.6h1V162.2h1V163.1h1V163.5h1V162.7h1V165.1h1V164.4h1V165h1V164.4h1V165.4h1V165.4h1V164.9h1V164.4h1V164.3h1V164.5h1V164.3h1V164.3h1V164.8h1V165.2h1V165.4h1V164.6h1V165h1V165.3h1V164.8h1V164.6h1V165h1V164.8h1V164.4h1V164.6h1V165.1h1V165.5h1V165.1h1V165.2h1V164.6h1V165.3h1V164.8h1V164.9h1V163.5h1V165.7h1V165h1V164.8h1V164.5h1V165.7h1V164.5h1V164.9h1V165.5h1V165.3h1V165h1V165.5h1V164.6h1V165.1h1V166.5V168h-1V168.1h-1V167.7h-1V167.9h-1V167.7h-1V167.6h-1V168.1h-1V168.4h-1V167.6h-1V168.4h-1V167.9h-1V167.9h-1V167.6h-1V169.8h-1V168.1h-1V168.1h-1V167.7h-1V168.4h-1V167.9h-1V167.8h-1V167.7h-1V168h-1V168.3h-1V168.7h-1V168.2h-1V168.1h-1V168.4h-1V168.2h-1V167.7h-1V168h-1V168.2h-1V167.5h-1V167.8h-1V168.2h-1V168.7h-1V168.6h-1V168.5h-1V168.4h-1V168.4h-1V168.2h-1V167.7h-1V167.8h-1V168.5h-1V168.1h-1V168.5h-1V167.9h-1V170.1h-1V169.2h-1V169.6h-1V170.6h-1V170.1h-1V169.5h-1V168.5h-1V168.5h-1V168.1h-1V167.4h-1V168.1h-1V168.1h-1V167.9h-1V168.5h-1V168h-1V168.1h-1V168.9h-1V168.6h-1V168.5h-1V169h-1V168.8h-1V168.1h-1V168.3h-1V168.5h-1V167.6h-1V168.1h-1V167.9h-1V168.9h-1V169.7h-1V172.8h-1V168.4h-1V168.7h-1V168.2h-1V168h-1V167.8h-1V167.8h-1V167.5h-1V168.5h-1V168.6h-1V168h-1V167.8h-1V168h-1V167.5h-1V168.2h-1V167.7h-1V167.9h-1V167.7h-1V169.2h-1V167.9h-1V168.1h-1V168h-1V167.8h-1V168.3h-1V168.2h-1V167.8h-1V167.8h-1V168h-1V168.4h-1V167.8h-1V168.8h-1V168.1h-1V167.4h-1V167.7h-1V168h-1V167.8h-1V168.1h-1V168.3h-1V168.4h-1V168h-1V168.3h-1V168h-1V168.1h-1V168.5h-1V168.5h-1V169.6h-1V167.9h-1V167.6h-1V168h-1V169.2h-1V169.1h-1V169.5h-1V170h-1V168.3h-1V169.6h-1V168.3h-1V168.4h-1V167.9h-1V167.6h-1V168.4h-1V168.1h-1V170h-1V167.9h-1V168.4h-1V168.4h-1V169.3h-1V167.6h-1V167.7h-1V167.2h-1V167.9h-1V167.8h-1V168.5h-1V168.1h-1V167.5h-1V167.3h-1V168.5h-1V168.7h-1V168.9h-1V169h-1V169.4h-1V168.5h-1V168h-1V170.3h-1V167.8h-1V167.9h-1V167.9h-1V168.1h-1V167.8h-1V167.9h-1V167.3h-1V168.5h-1V167.9h-1V167.9h-1V168.6h-1V167.6h-1V168.2h-1V167.6h-1V169.5h-1V167.9h-1V168.5h-1V168h-1V168.1h-1V169.4h-1V168.5h-1V169.3h-1V169.1h-1V168.6h-1V167.8h-1V167.4h-1V167.8h-1V167.5h-1V167.8h-1V170.3h-1V167.9h-1V168.1h-1V168.2h-1V168.1h-1V168.1h-1V168.2h-1V168.4h-1V168.3h-1V167.8h-1V168.3h-1V168.1h-1V168.3h-1V168h-1V168.5h-1V168.8h-1V169.7h-1V169.9h-1V170.5h-1V169.7h-1V169.9h-1V167.8h-1V168.8h-1V168.1h-1V167.9h-1V168.2h-1V167.9h-1V168.3h-1V168.1h-1V168.1h-1V168.5h-1V168.1h-1V168.1h-1V168.3h-1V167.6h-1V167.7h-1V168.2h-1V168.2h-1V168.4h-1V168.2h-1V168.7h-1V168h-1V169.6h-1V170.2h-1V169.4h-1V171.7h-1V168.9h-1V169.2h-1V168h-1V167.8h-1V167.9h-1V168h-1V168h-1V168.4h-1V168.4h-1V168.1h-1V168.4h-1V169.9h-1V169.2h-1V167.9h-1V167.8h-1V168.6h-1V167.7h-1V167.8h-1V168h-1V168.4h-1V168.4h-1V167.5h-1V168.9h-1V168.4h-1V169.2h-1V170.8h-1V170.3h-1V168.2h-1V168.1h-1V167.9h-1V168h-1V168.4h-1V167.7h-1V168.3h-1V168.3h-1V168.4h-1V168h-1V168h-1V168.2h-1V167.9h-1V168.6h-1V168.1h-1V168.1h-1V168.2h-1V167.8h-1V167.7h-1V167.8h-1V168h-1V167.4h-1V167.6h-1V168h-1V167.8h-1V168.4h-1V167.8h-1V167.6h-1V167.6h-1V167.6h-1V167.8h-1V167.8h-1V167.6h-1V168.4h-1V167.8h-1V168h-1V167.8h-1V169.1h-1V168h-1V167.5h-1V167.5h-1V167.4h-1V167.6h-1V168h-1V168.1h-1V168.1h-1V167.8h-1V168.6h-1V168.8h-1V168.5h-1V169.4h-1V169.8h-1V168.5h-1V167.7h-1V167.6h-1V167.8h-1V168.3h-1V168h-1V168.1h-1V167.8h-1V168.4h-1V168.4h-1V168.3h-1V168.2h-1V167.8h-1V167.7h-1V169h-1V168.4h-1V168.3h-1V170.4h-1V168.3h-1V168.5h-1V169.1h-1V169.1h-1V168.5h-1V168.3h-1V167.9h-1V168h-1V167.5h-1V167.6h-1V167.7h-1V168.1h-1V167.8h-1V167.8h-1V167.8h-1V167.7h-1V167.7h-1V168.5h-1V167.8h-1V168.4h-1V167.6h-1V168.2h-1V167.4h-1V168.5h-1V168h-1V168h-1V168.1h-1V168.3h-1V167.4h-1V167.8h-1V168.8h-1V168.7h-1V169.8h-1V170.5h-1V168.1h-1ZM657 166.5V161.2h1V163.2h1V158.8h1V161.9h1V163.4h1V160.2h1V158.7h1V159.9h1V162h1V159.2h1V158.4h1V159.2h1V162.9h1V161.2h1V162.3h1V164.8h1V165.3h1V166h1V165.6h1V165.9h1V165.4h1V164.4h1V163.5h1V163.3h1V162.8h1V164.1h1V164.3h1V164.5h1V165.5h1V162.6h1V165.5h1V165.1h1V165h1V164.1h1V164h1V164.8h1V165.3h1V163.3h1V164.9h1V164.8h1V164h1V165.1h1V164.6h1V165.3h1V165.5h1V164.1h1V164.1h1V165.3h1V162.7h1V164.2h1V164.7h1V163h1V164.8h1V165.5h1V165.6h1V164.3h1V165.5h1V165.1h1V165.7h1V164.9h1V165.4h1V164.9h1V164.7h1V165.1h1V164.4h1V164.3h1V165h1V165.6h1V164.8h1V164.8h1V165.6h1V165.1h1V165.2h1V163.6h1V164.1h1V164h1V161.6h1V163.2h1V164.3h1V164.1h1V164.3h1V165.3h1V164.9h1V164.3h1V165.2h1V164.7h1V164.8h1V165.2h1V165.6h1V165.5h1V165.7h1V165h1V165.7h1V164.8h1V164.7h1V165.2h1V165.3h1V161.4h1V165.2h1V162.9h1V164.7h1V164.4h1V164.7h1V164.8h1V164.7h1V165.3h1V164.2h1V164.6h1V165.3h1V165.3h1V164.6h1V164.6h1V164.6h1V164.6h1V165.4h1V164.8h1V164.6h1V164.7h1V164.7h1V163h1V164.2h1V165.1h1V165.1h1V165.7h1V165.7h1V164.5h1V164.2h1V163h1V162.7h1V164.4h1V164.2h1V164.9h1V165.3h1V163.5h1V164.7h1V165.2h1V165h1V165.6h1V164.9h1V164.3h1V164.3h1V164.8h1V165.4h1V164.3h1V165.2h1V164.6h1V164.4h1V164.6h1V165.1h1V164.2h1V164.5h1V164.9h1V163.8h1V163.2h1V162.9h1V163h1V163.1h1V163.6h1V164.4h1V165.3h1V163.6h1V164.3h1V165.1h1V165.6h1V164.5h1V164.7h1V164.6h1V165.5h1V164.8h1V164.7h1V163.4h1V163.5h1V164.6h1V165.4h1V165.4h1V165.3h1V165.6h1V164.6h1V164.8h1V163.3h1V163.8h1V160.2h1V161.6h1V165.4h1V164.2h1V165.7h1V164.7h1V165h1V164.5h1V164.9h1V164.9h1V164.4h1V165.3h1V165.6h1V165.6h1V165.2h1V164.4h1V164.4h1V164.7h1V165h1V164.2h1V165.3h1V164.5h1V164.4h1V164.5h1V164.4h1V164.2h1V165.2h1V165.1h1V164.6h1V164.6h1V165.2h1V165h1V164.5h1V165.5h1V165.4h1V164.3h1V164.6h1V164.5h1V163.8h1V163.9h1V165.6h1V165.6h1V164.9h1V165.4h1V165h1V165.7h1V165h1V164.8h1V165.2h1V163.8h1V162.9h1V163h1V163.3h1V164.7h1V164.8h1V164.3h1V164h1V164.7h1V164.7h1V164.1h1V163.8h1V164.3h1V164.4h1V165h1V165.1h1V164.9h1V165.6h1V165.6h1V165.2h1V164.3h1V164.2h1V164.9h1V163.9h1V165h1V164.3h1V164.2h1V162.7h1V161.8h1V162.6h1V163.7h1V164.5h1V165.4h1V164.5h1V165.2h1V165h1V165.1h1V165.2h1V165.5h1V165h1V165.7h1V162.8h1V165h1V165.4h1V162.6h1V165.4h1V165.6h1V164.4h1V164.5h1V165.1h1V164.4h1V165h1V164.7h1V164.2h1V163.4h1V159.8h1V163.7h1V163.9h1V163.5h1V165.4h1V164.5h1V165.4h1V164.9h1V164.8h1V164.2h1V164.6h1V163.8h1V164.1h1V164.2h1V164.9h1V164h1V165h1V164.8h1V164.9h1V165h1V163.8h1V163.9h1V164.6h1V165.1h1V163.4h1V165.1h1V164.3h1V165h1V164.3h1V164.2h1V164.2h1V164.6h1V164.6h1V165.3h1V165.2h1V165.4h1V164.6h1V165.1h1V163.4h1V164.3h1V164.5h1V165.3h1V165.2h1V164.9h1V165.2h1V165.2h1V165.5h1V164.6h1V164.5h1V164.1h1V164.3h1V161.8h1V163.4h1V164.8h1V163.1h1V164.7h1V164.3h1V164.4h1V164.3h1V165.4h1V164.3h1V165.2h1V165.2h1V165.5h1V165.4h1V165h1V165.2h1V165.2h1V164.6h1V165.6h1V164.8h1V165.1h1V165h1V165.2h1V162.3h1V165.2h1V164h1V165.4h1V161.7h1V164.2h1V164.3h1V164.7h1V164.3h1V164h1V164.5h1V164.8h1V165.4h1V165h1V164.5h1V164.6h1V165.1h1V161.5h1V164.4h1V165.3h1V165.1h1V164.9h1V165.1h1V164.9h1V165.4h1V163.7h1V164.9h1V165h1V163.6h1V162.9h1V163.1h1V164h1V163.7h1V164.2h1V164.6h1V164.3h1V165.4h1V164.6h1V164.6h1V165.8h1V165.6h1V164.5h1V165.5h1V164.7h1V164.7h1V165.3h1V164.8h1V165.4h1V165.3h1V165.2h1V165.1h1V164.2h1V164.9h1V165.4h1V162.6h1V164.5h1V165.1h1V165.2h1V164.4h1V163.1h1V165.2h1V164.4h1V164.5h1V164.7h1V164.9h1V164.1h1V164.5h1V164.8h1V165.4h1V165.2h1V165.5h1V164.8h1V165.4h1V165h1V164.8h1V165.6h1V165.7h1V165.6h1V164.7h1V163.1h1V163.5h1V162.7h1V162.2h1V162.4h1V163.9h1V163.9h1V165h1V164.8h1V165.5h1V164.8h1V165.4h1V164.7h1V164.6h1V164.2h1V165.1h1V165.4h1V165.2h1V164.4h1V164.4h1V162.6h1V164.7h1V165.2h1V165.1h1V165.6h1V164.4h1V165.1h1V162.7h1V163.4h1V162.5h1V164.5h1V164.3h1V163.7h1V164.7h1V165.6h1V164.9h1V164.4h1V164.6h1V165.4h1V164.9h1V164.7h1V164.7h1V165h1V164.6h1V164.9h1V162.2h1V164.9h1V164.6h1V164.7h1V164.2h1V164.1h1V164.4h1V164.8h1V164.4h1V162.3h1V162.6h1V163.8h1V165h1V165.1h1V165h1V165.1h1V165.4h1V165.3h1V164.6h1V164.5h1V165.5h1V165.4h1V164.9h1V164.8h1V165.3h1V165.4h1V164.6h1V165.2h1V164.5h1V165.6h1V164.3h1V164.2h1V165.5h1V165.5h1V163.7h1V161.7h1V162.8h1V163.5h1V162.1h1V163.9h1V164.8h1V164.7h1V161.9h1V164.6h1V165.2h1V164.5h1V164.7h1V164.9h1V165.3h1V165.4h1V165.4h1V164.9h1V164.9h1V165.2h1V164.9h1V165.5h1V165.2h1V165.4h1V164.5h1V164.4h1V164.6h1V163h1V164.3h1V162.8h1V163.6h1V163.8h1V165.3h1V165h1V165.4h1V165.5h1V165.5h1V163.8h1V165.4h1V165.4h1V164.3h1V164.8h1V165.4h1V165.3h1V164.5h1V165.1h1V164.9h1V165h1V165h1V164.1h1V165.6h1V163.8h1V164.9h1V164.9h1V165.4h1V164.8h1V164.8h1V164.1h1V164.1h1V165.6h1V164.7h1V165.4h1V164.6h1V165.7h1V164.9h1V164.9h1V164.9h1V164.9h1V164.9h1V165.5h1V165.1h1V165.1h1V165.4h1V164.3h1V164.9h1V164.3h1V165.5h1V164.9h1V164.2h1V164.8h1V163.6h1V162.5h1V159.4h1V163.6h1V165.3h1V166.5V167.7h-1V169h-1V172.3h-1V170.3h-1V169.4h-1V168.4h-1V168.8h-1V167.9h-1V167.7h-1V168.9h-1V168.1h-1V168.6h-1V167.6h-1V167.8h-1V167.9h-1V167.7h-1V168h-1V167.9h-1V168h-1V167.9h-1V168h-1V167.4h-1V168.3h-1V167.7h-1V168.2h-1V167.7h-1V168.5h-1V168.6h-1V168h-1V168.2h-1V167.6h-1V168h-1V168.1h-1V169.4h-1V167.5h-1V168.5h-1V168.1h-1V168h-1V168.2h-1V167.9h-1V168.5h-1V167.8h-1V167.9h-1V168h-1V168.7h-1V167.6h-1V167.7h-1V168.8h-1V167.7h-1V167.6h-1V167.8h-1V168.1h-1V167.7h-1V169.1h-1V169.2h-1V170.2h-1V169h-1V170.1h-1V168.3h-1V168.6h-1V168.5h-1V167.6h-1V167.9h-1V167.6h-1V167.9h-1V167.9h-1V167.9h-1V168.2h-1V167.6h-1V167.5h-1V167.8h-1V168.3h-1V168.4h-1V168.5h-1V167.9h-1V168.2h-1V169.9h-1V168.1h-1V168.3h-1V169h-1V171.2h-1V169.4h-1V170h-1V171h-1V169.1h-1V167.6h-1V167.6h-1V168.7h-1V168.5h-1V167.6h-1V168.5h-1V168h-1V168.4h-1V167.7h-1V167.9h-1V168.1h-1V168.1h-1V167.8h-1V167.7h-1V168.5h-1V168.2h-1V167.8h-1V167.6h-1V167.8h-1V167.9h-1V168h-1V168h-1V169.1h-1V170.8h-1V170.7h-1V168.8h-1V168h-1V168.6h-1V168.7h-1V168.7h-1V168.1h-1V168.2h-1V168.2h-1V170.9h-1V168.2h-1V168.5h-1V167.8h-1V168.1h-1V168h-1V168.1h-1V167.8h-1V168.4h-1V168.3h-1V167.9h-1V167.5h-1V168.5h-1V168.5h-1V168.7h-1V168.7h-1V170.3h-1V169.4h-1V170.3h-1V168h-1V168.4h-1V167.6h-1V167.8h-1V167.7h-1V168.4h-1V170.3h-1V168.6h-1V168.5h-1V167.9h-1V167.9h-1V168h-1V168.6h-1V168.2h-1V168.1h-1V167.7h-1V168.1h-1V167.5h-1V168.1h-1V168.2h-1V169.1h-1V168.7h-1V170.2h-1V170.7h-1V170h-1V169.4h-1V169.2h-1V168.2h-1V167.4h-1V167.3h-1V167.5h-1V168h-1V167.8h-1V167.6h-1V168h-1V167.7h-1V167.9h-1V167.9h-1V168.3h-1V168.7h-1V168.7h-1V168.2h-1V168.3h-1V168.5h-1V168.5h-1V168h-1V170h-1V168.7h-1V168h-1V167.9h-1V168.4h-1V169.4h-1V167.6h-1V168.1h-1V169h-1V168h-1V167.9h-1V167.8h-1V167.5h-1V168.2h-1V167.9h-1V168.2h-1V168.3h-1V167.7h-1V168.2h-1V167.5h-1V167.3h-1V168.3h-1V168.4h-1V167.7h-1V168.5h-1V168.2h-1V168.9h-1V169.2h-1V168.9h-1V169.7h-1V169.7h-1V169.4h-1V168.2h-1V168.3h-1V168.7h-1V167.8h-1V168.1h-1V168.1h-1V168h-1V168h-1V167.8h-1V168.6h-1V171.2h-1V167.8h-1V168.4h-1V168.5h-1V168h-1V167.7h-1V168.2h-1V168.6h-1V168.9h-1V168.7h-1V168.4h-1V168.6h-1V168.6h-1V170.6h-1V167.8h-1V169.1h-1V168h-1V169.7h-1V168h-1V168.2h-1V168.1h-1V168.1h-1V167.6h-1V168.2h-1V167.6h-1V167.7h-1V168h-1V167.7h-1V167.7h-1V168h-1V168h-1V168.7h-1V167.8h-1V168.7h-1V168.5h-1V168.7h-1V168.3h-1V169.8h-1V168.6h-1V169.3h-1V171.4h-1V168.8h-1V169.1h-1V168.4h-1V168.3h-1V167.8h-1V167.9h-1V167.9h-1V168h-1V167.8h-1V168h-1V168.2h-1V168.5h-1V169.4h-1V168h-1V168.3h-1V167.7h-1V168h-1V167.9h-1V168.2h-1V168.2h-1V168.6h-1V168.7h-1V168.7h-1V168h-1V168.5h-1V168h-1V168.9h-1V168h-1V168.6h-1V169.1h-1V168.8h-1V168h-1V168h-1V168.4h-1V168.4h-1V168.8h-1V168.2h-1V168.6h-1V168.7h-1V169.2h-1V168.5h-1V168.7h-1V168.1h-1V168.1h-1V168h-1V168.6h-1V167.8h-1V169.6h-1V169h-1V169.1h-1V172.9h-1V169.9h-1V169.1h-1V168.3h-1V167.9h-1V168.6h-1V168h-1V168.4h-1V168.7h-1V167.5h-1V167.6h-1V170.1h-1V167.5h-1V168.1h-1V170h-1V167.3h-1V167.9h-1V167.8h-1V168h-1V167.9h-1V168h-1V167.7h-1V168.5h-1V167.7h-1V168.6h-1V169.2h-1V170h-1V170.7h-1V170.6h-1V168.6h-1V168.6h-1V168h-1V168.8h-1V168.1h-1V168.6h-1V168.4h-1V168h-1V167.6h-1V167.6h-1V167.9h-1V168h-1V168.1h-1V168.6h-1V168.6h-1V169.1h-1V168.9h-1V168.3h-1V168.6h-1V169h-1V168.5h-1V168.4h-1V168.6h-1V169.9h-1V170.2h-1V169.8h-1V168.5h-1V167.8h-1V168.2h-1V168.1h-1V167.6h-1V168.1h-1V167.5h-1V168.6h-1V167.6h-1V167.4h-1V168.9h-1V168.8h-1V168.4h-1V168.2h-1V168.4h-1V167.5h-1V167.7h-1V168.5h-1V168.2h-1V167.8h-1V168.4h-1V168.2h-1V168h-1V168h-1V168.7h-1V168.4h-1V168.4h-1V168.5h-1V168.6h-1V167.9h-1V169.7h-1V168h-1V168.9h-1V168.6h-1V168.6h-1V167.8h-1V167.6h-1V167.4h-1V167.7h-1V168.5h-1V167.9h-1V168.3h-1V168.3h-1V168h-1V168.2h-1V167.4h-1V168.5h-1V167.9h-1V170.1h-1V172h-1V169.1h-1V169.5h-1V168.4h-1V168.1h-1V167.5h-1V167.8h-1V167.7h-1V167.9h-1V168.4h-1V169.1h-1V169.2h-1V168.2h-1V168h-1V167.4h-1V168.2h-1V168.2h-1V168.3h-1V167.5h-1V168h-1V168.5h-1V169.3h-1V167.8h-1V168.6h-1V169.2h-1V170h-1V169.8h-1V169.9h-1V169.9h-1V169.1h-1V168.1h-1V168.6h-1V168.6h-1V168.2h-1V168.3h-1V168.5h-1V168.6h-1V168.1h-1V168.6h-1V167.7h-1V168h-1V168.7h-1V168.8h-1V168h-1V167.7h-1V167.9h-1V167.9h-1V168.5h-1V169.1h-1V167.8h-1V168.4h-1V169.2h-1V168.9h-1V169.9h-1V169.4h-1V168.9h-1V168.5h-1V167.5h-1V167.6h-1V168.1h-1V168h-1V168.6h-1V169.4h-1V168.2h-1V168.2h-1V168.3h-1V168h-1V167.6h-1V168.4h-1V168.4h-1V168h-1V168.8h-1V167.7h-1V167.9h-1V168.3h-1V168.5h-1V168h-1V168.2h-1V168.3h-1V168.2h-1V168.7h-1V168.4h-1V169.7h-1V168.2h-1V171.7h-1V167.7h-1V167.8h-1V168.3h-1V168.2h-1V167.5h-1V167.9h-1V167.5h-1V167.5h-1V167.3h-1V167.8h-1V168.2h-1V168.2h-1V167.8h-1V168.6h-1V168.2h-1V167.7h-1V168.6h-1V169.1h-1V168.8h-1V169.4h-1V171h-1V169.5h-1V169.1h-1V169.1h-1V167.9h-1V167.7h-1V167.5h-1V168.1h-1V168.2h-1V167.5h-1V168.1h-1V168.7h-1V168.4h-1V167.9h-1V168.2h-1V168.2h-1V167.8h-1V168h-1V167.6h-1V167.8h-1V167.7h-1V168.9h-1V167.5h-1V167.6h-1V168.2h-1V169.9h-1V168.2h-1V168.5h-1V170h-1V167.7h-1V168.6h-1V168.6h-1V167.7h-1V167.9h-1V168.3h-1V167.9h-1V168.8h-1V168.2h-1V168h-1V169.7h-1V167.7h-1V168.3h-1V168.8h-1V168.8h-1V167.9h-1V168.1h-1V167.7h-1V169.9h-1V167.7h-1V168.5h-1V168.9h-1V169h-1V169.8h-1V170.4h-1V169.7h-1V168.6h-1V167.6h-1V167.2h-1V167.4h-1V167.2h-1V167.7h-1V168.2h-1V170.3h-1V171.6h-1V170.5h-1V173.8h-1V174.8h-1V173.2h-1V171.2h-1V173.1h-1V174.8h-1V172.9h-1V170.5h-1V171h-1V173.6h-1V169.6h-1V170.8h-1Z" fill="#3a8289"/>
<path d="M296 228.5V222.3h1V223.8h1V223.9h1V223.6h1V223.6h1V224.3h1V223.5h1V224.2h1V223.7h1V227.5h1V222.8h1V224.5h1V223.9h1V224h1V223.7h1V224.8h1V224.2h1V224.7h1V225h1V224.7h1V225.2h1V224.9h1V224.8h1V225.1h1V224.9h1V227.6h1V228.5V229.4h-1V232.1h-1V231.9h-1V232.2h-1V232h-1V232h-1V232.4h-1V232.1h-1V232.3h-1V232.9h-1V232.2h-1V232.5h-1V232.8h-1V233h-1V232.6h-1V234.3h-1V229.5h-1V233.2h-1V232.8h-1V233.4h-1V232.6h-1V233.1h-1V233.3h-1V233h-1V233h-1V234.5h-1ZM335 228.5V222.4h1V223.9h1V223.3h1V223h1V222.9h1V223.8h1V223.7h1V223.9h1V224.1h1V223.2h1V224.1h1V223.7h1V224.6h1V224.3h1V224.7h1V227.6h1V222.2h1V222.6h1V222.7h1V222.9h1V224h1V223.3h1V223.9h1V223.1h1V223.3h1V223.1h1V223.3h1V223.5h1V227.5h1V221.3h1V222.3h1V223.3h1V222.6h1V222.8h1V222.9h1V223.1h1V223.2h1V222.4h1V227.4h1V221.1h1V223.5h1V223h1V223.1h1V223.8h1V223.4h1V223.9h1V224.2h1V224.2h1V224.6h1V224.2h1V224.4h1V224.1h1V223.7h1V223.9h1V223.8h1V224.6h1V224h1V224h1V227.5h1V221.9h1V223.6h1V223.7h1V223.8h1V224.6h1V227.5h1V223.3h1V223.4h1V224.4h1V224.7h1V224.7h1V224.3h1V224.8h1V224.3h1V224.7h1V224.6h1V225.1h1V225h1V227.7h1V222.2h1V223.3h1V222.8h1V222.9h1V223.8h1V227.5h1V223.3h1V224.1h1V224.6h1V224.8h1V224.5h1V224.7h1V224.6h1V224.6h1V224.3h1V224.6h1V224.7h1V224.9h1V227.6h1V223h1V223.8h1V223.7h1V224.1h1V224.4h1V224.1h1V224.3h1V224.2h1V225h1V227.6h1V223h1V224.3h1V224.2h1V223.3h1V221.8h1V224.1h1V224.5h1V224.5h1V224.1h1V227.6h1V222.9h1V223.7h1V224.5h1V224.8h1V224.7h1V227.6h1V222.8h1V223.4h1V223.3h1V223.5h1V222.9h1V223h1V223.6h1V223.9h1V224.2h1V224.2h1V224.3h1V223.6h1V227.5h1V221.4h1V223.3h1V224.1h1V224.2h1V224.2h1V224.5h1V224h1V224.2h1V224.3h1V227.5h1V221.6h1V223.6h1V224.1h1V223.9h1V224.3h1V227.5h1V221.5h1V222.7h1V222.7h1V223.5h1V223.4h1V223.4h1V222.7h1V222.3h1V222.5h1V223.3h1V222.5h1V223.2h1V223.5h1V223.2h1V223.5h1V222.6h1V223.2h1V223.6h1V222.5h1V227.4h1V222.7h1V224.5h1V224.6h1V224.9h1V224.3h1V224h1V224.7h1V224.6h1V223.8h1V223.9h1V224.5h1V224.6h1V223.8h1V223.6h1V224.2h1V224.5h1V224.2h1V224.1h1V224h1V227.7h1V223.8h1V224.3h1V224.1h1V223.6h1V224.5h1V223.9h1V223.6h1V223.5h1V224.2h1V223.7h1V223.7h1V224.3h1V224.2h1V224.1h1V223.8h1V227.7h1V221.2h1V223.6h1V223.2h1V222.7h1V223h1V227.5h1V222.5h1V223.5h1V224.2h1V224.3h1V224.2h1V224.3h1V224.2h1V224.8h1V224.3h1V223.9h1V224.4h1V224.7h1V227.6h1V223h1V223.7h1V223.8h1V223.8h1V224.2h1V224.2h1V224.2h1V224h1V224.5h1V224.7h1V224.8h1V224.7h1V227.6h1V223.6h1V223.9h1V223.6h1V224.2h1V224.1h1V224h1V223.6h1V224.2h1V223.5h1V223h1V223.8h1V224h1V222.9h1V223.9h1V223.5h1V227.5h1V221.4h1V224h1V223.3h1V224.4h1V223.9h1V223.6h1V224.2h1V224.5h1V224.7h1V224.6h1V224.8h1V224.8h1V227.5h1V221.5h1V223.2h1V223.3h1V222.7h1V223.3h1V223.8h1V223.6h1V223.4h1V224h1V227.7h1V221.9h1V223.5h1V223.3h1V223.1h1V224.1h1V223.2h1V223.3h1V223.8h1V223.7h1V223.8h1V223.9h1V223.9h1V227.5h1V222h1V223.9h1V224.2h1V223.6h1V223.8h1V224.4h1V223.5h1V222h1V223.4h1V224.3h1V224.4h1V224.2h1V227.5h1V223.8h1V223.9h1V224h1V224.7h1V223.8h1V223.7h1V224.3h1V224.1h1V224.6h1V224.3h1V224.2h1V224.7h1V224.5h1V224.1h1V224.7h1V224.3h1V225h1V225h1V223.5h1V224.9h1V224.8h1V224.4h1V224.7h1V224.5h1V224.6h1V227.6h1V222.7h1V224h1V223.7h1V223.6h1V223.3h1V223.7h1V223.2h1V223.2h1V222.5h1V227.5h1V222.6h1V223.8h1V221.3h1V222.9h1V222.9h1V223.6h1V224h1V223.4h1V223.7h1V224.3h1V224.4h1V223.8h1V224.3h1V224.4h1V223.7h1V223.5h1V223.6h1V224.3h1V224h1V223.6h1V223.7h1V224.7h1V224.5h1V224.2h1V224h1V227.6h1V220.1h1V222h1V223.3h1V222.3h1V222.2h1V222.3h1V223.6h1V223.4h1V222.8h1V222.9h1V223h1V223.1h1V223.5h1V224h1V222.8h1V227.3h1V220.8h1V222.8h1V222.9h1V223.2h1V222.5h1V223.2h1V223.1h1V223.8h1V223.6h1V223.7h1V224h1V223.2h1V227.6h1V221.8h1V222.6h1V223.6h1V223.7h1V223.6h1V223.4h1V222.9h1V223.9h1V223.9h1V223.6h1V223.4h1V223.7h1V223.7h1V224.4h1V224.3h1V227.5h1V222h1V223h1V223.1h1V223.6h1V223.3h1V223.3h1V223.7h1V223.4h1V223.5h1V227.6h1V223.6h1V223.9h1V224.7h1V224.7h1V224.5h1V224.6h1V224.8h1V224.8h1V224.4h1V224h1V224.2h1V224.7h1V227.4h1V222.8h1V223.9h1V223.2h1V224.1h1V223.5h1V223.5h1V223.8h1V224.1h1V224.4h1V224.5h1V223.9h1V224.4h1V227.4h1V222.3h1V224h1V224.2h1V223.6h1V223.7h1V224h1V227.7h1V228.5V229.3h-1V233h-1V233.2h-1V233.2h-1V232.9h-1V233.1h-1V234.9h-1V229.5h-1V232.6h-1V233.1h-1V232.6h-1V232.6h-1V232.8h-1V233.2h-1V233.4h-1V233.1h-1V232.8h-1V233.8h-1V233.2h-1V234.3h-1V229.6h-1V232.2h-1V232.7h-1V232.8h-1V232.6h-1V232.3h-1V232.3h-1V232.4h-1V232.6h-1V232.4h-1V232.4h-1V233h-1V233.7h-1V229.4h-1V233.3h-1V233.6h-1V233.5h-1V233.9h-1V233.9h-1V233.6h-1V233.7h-1V234.1h-1V234.9h-1V229.5h-1V232.7h-1V232.8h-1V233.1h-1V233.3h-1V233.5h-1V233.3h-1V233h-1V233.3h-1V234h-1V233.6h-1V233.6h-1V233.5h-1V233.6h-1V234.3h-1V235.4h-1V229.4h-1V233.8h-1V232.9h-1V233.2h-1V233.5h-1V233.4h-1V233.7h-1V233.7h-1V234.3h-1V234h-1V234.2h-1V234.4h-1V236.1h-1V229.6h-1V234.2h-1V233.1h-1V233.7h-1V233.9h-1V233.9h-1V234.1h-1V234.1h-1V233.6h-1V233.7h-1V234.7h-1V234.6h-1V234.6h-1V234.1h-1V235h-1V236.6h-1V229.5h-1V232.8h-1V232.8h-1V232.5h-1V232.4h-1V233.1h-1V233.4h-1V232.9h-1V232.8h-1V233.2h-1V233.4h-1V233.3h-1V232.7h-1V232.8h-1V233.2h-1V232.6h-1V232.7h-1V233.4h-1V233.5h-1V233.3h-1V233.4h-1V234h-1V234h-1V235.7h-1V233.3h-1V234.8h-1V229.5h-1V234.4h-1V233.8h-1V233.6h-1V233.4h-1V233.8h-1V233.6h-1V233.4h-1V233.2h-1V234.5h-1V229.4h-1V232.3h-1V232.5h-1V232.3h-1V232.5h-1V232.3h-1V232.1h-1V234.1h-1V232.2h-1V232.2h-1V232.7h-1V232.2h-1V232.7h-1V232.5h-1V232.3h-1V232.7h-1V232.7h-1V232.5h-1V233h-1V232.7h-1V233.1h-1V233h-1V232.4h-1V232.9h-1V233.1h-1V233.2h-1V229.4h-1V232.9h-1V232.9h-1V232.8h-1V233.5h-1V234.6h-1V233.5h-1V232.6h-1V233.2h-1V233.2h-1V232.8h-1V233.2h-1V234.9h-1V229.5h-1V233h-1V233.1h-1V233.1h-1V233.2h-1V233.3h-1V233.4h-1V233.7h-1V233h-1V233.7h-1V233.8h-1V233.4h-1V235h-1V229.4h-1V233h-1V233.6h-1V233.6h-1V233.3h-1V233.9h-1V234h-1V233.7h-1V233.8h-1V235.3h-1V229.5h-1V232.2h-1V232.3h-1V232.4h-1V232.3h-1V232.4h-1V232.8h-1V233.4h-1V233h-1V232.9h-1V233.7h-1V233.2h-1V235.4h-1V229.5h-1V233.4h-1V233.2h-1V234h-1V233.1h-1V233.2h-1V233.8h-1V233.4h-1V232.9h-1V233.3h-1V233.1h-1V233h-1V233h-1V233.4h-1V232.9h-1V233.4h-1V229.4h-1V232.5h-1V232.2h-1V232.4h-1V232.4h-1V233h-1V232.7h-1V232.7h-1V232.7h-1V233.1h-1V233.2h-1V233.1h-1V234.3h-1V229.4h-1V232.4h-1V232.6h-1V233h-1V232.8h-1V232.5h-1V232.8h-1V232.8h-1V232.8h-1V232.9h-1V232.9h-1V233.4h-1V234.4h-1V229.5h-1V234.2h-1V234.2h-1V234h-1V233.5h-1V235.6h-1V229.3h-1V233.1h-1V232.9h-1V232.9h-1V232.7h-1V233.1h-1V233.3h-1V232.8h-1V233.4h-1V233.4h-1V233.2h-1V232.5h-1V233.2h-1V232.8h-1V232.6h-1V233.4h-1V229.4h-1V233h-1V232.8h-1V232.7h-1V232.8h-1V232.9h-1V233.4h-1V233h-1V232.5h-1V232.6h-1V233h-1V233h-1V232.5h-1V232.3h-1V232.9h-1V232.7h-1V232.2h-1V232.5h-1V232.6h-1V234.2h-1V229.6h-1V234.4h-1V233.6h-1V233.9h-1V234.4h-1V233.6h-1V234h-1V233.7h-1V234h-1V234.4h-1V233.9h-1V234.5h-1V234.5h-1V234.3h-1V233.9h-1V233.8h-1V233.5h-1V234.4h-1V234.4h-1V235.7h-1V229.5h-1V232.8h-1V233.2h-1V233.1h-1V233.5h-1V235.1h-1V229.5h-1V232.8h-1V232.7h-1V232.9h-1V232.6h-1V232.7h-1V232.8h-1V232.9h-1V233.7h-1V235.6h-1V229.5h-1V233.4h-1V232.9h-1V232.9h-1V233h-1V233.1h-1V233.4h-1V233.8h-1V234h-1V233.7h-1V233.8h-1V233.5h-1V234.5h-1V229.4h-1V232.3h-1V232.2h-1V232.4h-1V233.3h-1V234.1h-1V229.4h-1V232.9h-1V232.7h-1V232.6h-1V232.9h-1V234.2h-1V233.6h-1V233h-1V232.9h-1V234.2h-1V229.4h-1V232h-1V232.8h-1V232.7h-1V232.8h-1V232.8h-1V232.8h-1V233.3h-1V233.2h-1V234.1h-1V229.4h-1V232.1h-1V232.3h-1V232.4h-1V232.8h-1V232.6h-1V232.5h-1V232.4h-1V232.5h-1V232.3h-1V232.5h-1V232.9h-1V233.8h-1V229.5h-1V233.3h-1V234.2h-1V233.9h-1V233.7h-1V234.9h-1V229.4h-1V231.9h-1V231.9h-1V232.4h-1V232.2h-1V232.6h-1V232.2h-1V232.7h-1V232.3h-1V232.5h-1V232.7h-1V233.4h-1V233.9h-1V229.5h-1V232.5h-1V233.2h-1V233.3h-1V233.2h-1V235h-1V229.5h-1V232.8h-1V233h-1V232.6h-1V233.1h-1V233h-1V233.2h-1V232.9h-1V232.7h-1V232.8h-1V232.6h-1V232.8h-1V232.9h-1V233.2h-1V233.6h-1V233.3h-1V233.8h-1V234h-1V233.6h-1V235.6h-1V229.6h-1V234.3h-1V233.8h-1V234h-1V234h-1V234.3h-1V234.2h-1V233.9h-1V234.7h-1V235.7h-1V229.5h-1V233.4h-1V233.7h-1V234h-1V233.8h-1V233.8h-1V233.1h-1V233.7h-1V233.1h-1V233.8h-1V234.1h-1V234.3h-1V235h-1V229.4h-1V232.4h-1V232.7h-1V232.6h-1V233.1h-1V232.9h-1V233.7h-1V232.9h-1V233h-1V233.3h-1V233.3h-1V233.9h-1V233.8h-1V233.6h-1V233.3h-1V234.7h-1ZM815 228.5V222.7h1V224.1h1V224.4h1V223.8h1V224.3h1V224.3h1V224.7h1V227.4h1V220.8h1V223.2h1V222.7h1V223.2h1V223.7h1V223.2h1V223.1h1V227.4h1V221.7h1V224.1h1V223.4h1V223.5h1V223.4h1V224.4h1V223.4h1V223.9h1V223.5h1V224h1V223.9h1V223.7h1V224.3h1V223.4h1V223h1V223.5h1V223.4h1V224h1V224.2h1V227.5h1V222.8h1V224.5h1V224.4h1V224.2h1V224h1V224.2h1V224.4h1V224.8h1V224.6h1V227.7h1V222.6h1V224.3h1V224.7h1V223.8h1V224h1V227.5h1V223.7h1V223.7h1V223.6h1V223.4h1V224.2h1V223.4h1V223.6h1V224.4h1V224.5h1V223.9h1V224.3h1V223.6h1V223.5h1V223.3h1V224.4h1V224.2h1V224.1h1V223.6h1V224h1V227.6h1V222h1V223.4h1V222.9h1V223.1h1V223h1V223.2h1V223.8h1V223.8h1V223.1h1V223.6h1V223.8h1V223.2h1V223.1h1V223.5h1V223.4h1V224.1h1V224.3h1V224.7h1V224.7h1V227.6h1V223.1h1V224h1V224.6h1V224.7h1V223.7h1V224.4h1V224.1h1V224.7h1V224.6h1V224.6h1V224.4h1V224.7h1V227.7h1V222.9h1V223.8h1V224.3h1V223.9h1V224.4h1V224.4h1V224.2h1V224.2h1V224.1h1V227.6h1V223.1h1V224.4h1V224.5h1V224.5h1V224.2h1V224.1h1V224.2h1V223.8h1V224.5h1V224.4h1V224.9h1V225.1h1V224.7h1V224.8h1V224.2h1V227.5h1V222.6h1V224.4h1V224.6h1V224h1V224.5h1V224.6h1V224.6h1V224.8h1V224.8h1V224.2h1V224.4h1V224.9h1V227.6h1V223.2h1V223.3h1V223.8h1V224h1V223.6h1V227.6h1V222.9h1V223.9h1V223.6h1V223.4h1V223.9h1V221.7h1V223.9h1V223.5h1V223.4h1V222.6h1V222.5h1V222.8h1V227.6h1V221.9h1V223.3h1V223h1V224h1V223.3h1V223.7h1V224.4h1V224.3h1V223.8h1V223.9h1V224.2h1V224.6h1V227.6h1V222.2h1V223.8h1V224.2h1V223.9h1V224.2h1V221.8h1V224.1h1V224.6h1V223.9h1V224.4h1V224.5h1V224.5h1V223.6h1V224.5h1V223.4h1V227.3h1V221.7h1V224h1V224.1h1V223.8h1V224.2h1V227.6h1V223.3h1V224.7h1V224.2h1V224.1h1V223.8h1V224h1V223.8h1V227.5h1V222.3h1V224.2h1V224.2h1V223.6h1V223.9h1V223.8h1V224.1h1V223.9h1V224.4h1V223.3h1V223.7h1V223.6h1V223.5h1V224.2h1V223.8h1V227.6h1V222.8h1V223.6h1V223.9h1V223.9h1V224.3h1V223.8h1V224.3h1V224.7h1V224.5h1V224h1V224.9h1V224.4h1V227.5h1V222.8h1V224.1h1V223.8h1V223.6h1V223.7h1V223.7h1V223.7h1V223.9h1V223.9h1V227.5h1V222.4h1V222.7h1V223.7h1V222.8h1V223.2h1V223.3h1V223.3h1V222.8h1V222.6h1V223h1V223.1h1V223.1h1V223.7h1V224h1V222.9h1V223.8h1V223.5h1V223.6h1V223.8h1V223.6h1V223.5h1V223.3h1V223.5h1V223.1h1V223.2h1V227.6h1V220.2h1V223.3h1V223.1h1V223.7h1V223.2h1V222.9h1V223.4h1V223.6h1V224.3h1V224.1h1V224.5h1V223.7h1V227.5h1V222.4h1V224h1V223.9h1V224.4h1V223.8h1V224.2h1V224.1h1V227.6h1V222h1V223.3h1V223.8h1V224.1h1V223.1h1V223.7h1V223.7h1V223.3h1V223.5h1V223.1h1V224.1h1V224h1V227.5h1V222.2h1V223.6h1V224h1V224.2h1V223.7h1V223.3h1V223.6h1V224.3h1V224.4h1V224.7h1V224.7h1V224h1V224.1h1V224.9h1V224h1V224.1h1V224.8h1V224.8h1V225h1V227.6h1V222.6h1V223.8h1V224.1h1V224.4h1V224.4h1V225h1V224.8h1V224.7h1V224.6h1V227.6h1V222.4h1V223.9h1V224.2h1V223.9h1V223.9h1V227.6h1V222.9h1V224.4h1V224.1h1V224.7h1V224.4h1V227.4h1V219.1h1V222.6h1V223.7h1V223.6h1V222.9h1V227.5h1V221.7h1V223.3h1V223.2h1V223.1h1V224h1V222.7h1V223.3h1V227.5h1V222.1h1V223.6h1V223.1h1V223.8h1V223.1h1V223.1h1V222.8h1V222.7h1V223.9h1V223.4h1V223.9h1V223.8h1V227.6h1V221.9h1V223.2h1V223.3h1V223.6h1V222.9h1V223.7h1V223.8h1V223.6h1V223.5h1V223.2h1V223.4h1V224h1V223.2h1V223.4h1V222.9h1V223.1h1V224h1V223.3h1V223h1V227.6h1V222.8h1V224.4h1V224.3h1V223.6h1V224.5h1V224.4h1V224h1V224h1V223.2h1V223.4h1V224.3h1V223.6h1V223.6h1V223.3h1V223.6h1V227.5h1V221.2h1V223.1h1V222.4h1V222.4h1V223.1h1V227.5h1V222.1h1V223.6h1V223h1V222.8h1V222.8h1V222.8h1V224h1V222.9h1V223.1h1V224.2h1V223.8h1V223.6h1V223.6h1V224.4h1V224.4h1V227.6h1V223.4h1V224.2h1V224.2h1V224.9h1V224.4h1V224h1V223.7h1V223.9h1V223.7h1V224.3h1V227.5h1V228.5V229.5h-1V232.8h-1V233.2h-1V232.4h-1V233.1h-1V232.8h-1V232.6h-1V232.3h-1V232.8h-1V232.8h-1V233.6h-1V229.4h-1V232.5h-1V232.6h-1V233.3h-1V233.3h-1V233.1h-1V233h-1V233.8h-1V233.9h-1V233h-1V234.1h-1V234.1h-1V233.9h-1V233.8h-1V233.4h-1V235h-1V229.5h-1V233.8h-1V234.5h-1V234.7h-1V233.9h-1V235.6h-1V229.5h-1V233.4h-1V233.6h-1V233.5h-1V233.4h-1V232.8h-1V233.6h-1V233.6h-1V233h-1V232.9h-1V232.9h-1V232.8h-1V233.2h-1V232.7h-1V232.7h-1V234.4h-1V229.4h-1V233.9h-1V233.6h-1V233.1h-1V233.9h-1V234h-1V233.4h-1V233.8h-1V233.3h-1V233.7h-1V233.6h-1V233.6h-1V233.4h-1V233.2h-1V233.5h-1V234h-1V233.5h-1V233.7h-1V233.7h-1V235.2h-1V229.4h-1V233.1h-1V233h-1V233.7h-1V233.3h-1V234.2h-1V234.2h-1V234h-1V233.9h-1V233.4h-1V234h-1V233.5h-1V235h-1V229.5h-1V233.6h-1V234.2h-1V233.2h-1V233.9h-1V233.9h-1V233.6h-1V235.2h-1V229.5h-1V233.9h-1V233.5h-1V233.6h-1V234.2h-1V239h-1V229.5h-1V232.7h-1V232.4h-1V232.9h-1V232.5h-1V234.2h-1V229.4h-1V233.1h-1V233.2h-1V232.9h-1V233.2h-1V234.6h-1V229.4h-1V232.3h-1V232.4h-1V232.1h-1V232h-1V232.6h-1V232.6h-1V233h-1V233.1h-1V234.3h-1V229.4h-1V232.1h-1V232.3h-1V232.2h-1V232.8h-1V232.8h-1V232.2h-1V232.7h-1V232.8h-1V232.3h-1V232.3h-1V232.7h-1V232.8h-1V233.3h-1V233.7h-1V233.3h-1V232.8h-1V232.9h-1V233.2h-1V234.7h-1V229.5h-1V233.1h-1V233h-1V233.7h-1V233.5h-1V233.6h-1V233.2h-1V233.5h-1V233.8h-1V232.9h-1V233.2h-1V233.8h-1V234.9h-1V229.4h-1V233.1h-1V233.2h-1V233.3h-1V232.7h-1V233h-1V232.9h-1V234.6h-1V229.5h-1V233.1h-1V232.5h-1V233.1h-1V232.7h-1V233.4h-1V233.4h-1V233.3h-1V233.5h-1V233.3h-1V233.8h-1V233.6h-1V236.8h-1V229.5h-1V234h-1V233.8h-1V233.5h-1V233.6h-1V233.6h-1V233.4h-1V233.2h-1V233.4h-1V233.4h-1V233.2h-1V234.1h-1V233.4h-1V233.5h-1V233.9h-1V233.8h-1V234h-1V234.3h-1V234.2h-1V233.7h-1V233.6h-1V233.7h-1V234.1h-1V233.4h-1V234.3h-1V234.9h-1V229.5h-1V233.1h-1V233h-1V233.4h-1V233.2h-1V233.2h-1V233.4h-1V233.2h-1V233.1h-1V234.4h-1V229.5h-1V232.4h-1V232.1h-1V232.9h-1V232.5h-1V232.4h-1V232.6h-1V233.2h-1V232.7h-1V232.9h-1V232.9h-1V233.6h-1V234.2h-1V229.4h-1V233.1h-1V232.8h-1V233.4h-1V233.3h-1V233.3h-1V232.7h-1V232.6h-1V233.1h-1V232.8h-1V233.2h-1V233h-1V233.3h-1V232.8h-1V232.9h-1V234.5h-1V229.5h-1V233.3h-1V232.9h-1V233h-1V233h-1V232.7h-1V232.4h-1V233.7h-1V229.4h-1V232.8h-1V233.2h-1V233h-1V233h-1V235h-1V229.7h-1V233.4h-1V232.5h-1V233.3h-1V232.5h-1V232.8h-1V232.7h-1V233.1h-1V232.7h-1V232.9h-1V235.7h-1V232.8h-1V233.1h-1V232.7h-1V233.2h-1V234.8h-1V229.4h-1V232.4h-1V232.7h-1V232.9h-1V232.9h-1V232.7h-1V232.6h-1V233.3h-1V233.6h-1V233.1h-1V234h-1V233.5h-1V234.9h-1V229.4h-1V234.3h-1V234.3h-1V234.4h-1V233.7h-1V233.4h-1V233.2h-1V235.3h-1V233.2h-1V233.5h-1V233.4h-1V233.2h-1V234.4h-1V229.4h-1V233.3h-1V233h-1V233.1h-1V233.5h-1V233.8h-1V229.4h-1V232.3h-1V232.7h-1V232.8h-1V232.3h-1V232.4h-1V232.3h-1V232.3h-1V232.5h-1V232.8h-1V232.4h-1V232.5h-1V234.4h-1V229.5h-1V232.7h-1V232.2h-1V232.2h-1V232.1h-1V232h-1V232.5h-1V232.5h-1V233h-1V232.8h-1V232.7h-1V232.8h-1V232.6h-1V232.6h-1V232.6h-1V233.9h-1V229.4h-1V232.9h-1V232.8h-1V232.8h-1V232.5h-1V232.7h-1V233h-1V232.6h-1V233.2h-1V234.2h-1V229.3h-1V232.5h-1V232.6h-1V232.5h-1V232.3h-1V232.5h-1V232.7h-1V232.5h-1V233.2h-1V232.4h-1V232.4h-1V233.1h-1V234h-1V229.4h-1V232.5h-1V232.5h-1V232.7h-1V233.1h-1V233.4h-1V233.5h-1V233.9h-1V233.6h-1V233.3h-1V233.4h-1V233.7h-1V233.1h-1V233.2h-1V233.6h-1V234h-1V233.9h-1V233.8h-1V233.6h-1V235.1h-1V229.4h-1V232.8h-1V233.3h-1V232.9h-1V232.9h-1V232.8h-1V233.5h-1V233.6h-1V233.2h-1V232.9h-1V233.2h-1V232.8h-1V232.7h-1V233.4h-1V233.4h-1V232.9h-1V233.4h-1V233.3h-1V233.3h-1V233.5h-1V229.5h-1V232.9h-1V233.2h-1V232.4h-1V232.8h-1V234.4h-1V229.4h-1V232.3h-1V232.3h-1V232.6h-1V232.7h-1V232.8h-1V232.9h-1V232.7h-1V232.5h-1V234h-1V229.5h-1V232.9h-1V233.2h-1V233.5h-1V233.4h-1V233.9h-1V233.6h-1V232.9h-1V233.4h-1V233.1h-1V233h-1V233.5h-1V233.1h-1V233.4h-1V232.7h-1V233.3h-1V233.5h-1V233.5h-1V232.9h-1V235.3h-1V229.6h-1V233.8h-1V233.8h-1V233.3h-1V233.7h-1V234.2h-1V233.8h-1V236.1h-1V229.6h-1V232.3h-1V232.6h-1V232.8h-1V233.2h-1V232.6h-1V233h-1V234.3h-1Z" fill="#3a8289"/>
<path d="M296 290.5V288.3h1V288.3h1V288.2h1V288h1V287.1h1V288.5h1V288.1h1V288.9h1V288.4h1V287.9h1V288.2h1V288.5h1V288.5h1V286h1V287.6h1V288.6h1V285h1V286h1V287.4h1V285.9h1V285.8h1V287h1V285.3h1V287.1h1V284.8h1V285.2h1V285.2h1V287h1V285.9h1V284.2h1V286.2h1V285.4h1V287.5h1V285.7h1V287.6h1V287h1V287h1V287.5h1V286.9h1V286.7h1V287.6h1V286.8h1V287.5h1V287.3h1V288.2h1V287.9h1V288.3h1V288.2h1V288.5h1V288.7h1V287.7h1V288.8h1V287.8h1V287.7h1V286.6h1V286.7h1V286.4h1V287.6h1V286.4h1V288h1V287.5h1V286.4h1V288h1V287.5h1V288h1V286.8h1V286.8h1V287.5h1V287.1h1V287h1V287.2h1V288.5h1V287.3h1V288.2h1V287.5h1V288.6h1V288.5h1V286.6h1V287.6h1V287.4h1V285.8h1V287.2h1V286.9h1V287.2h1V287.9h1V287.1h1V288.1h1V285.8h1V287.6h1V288.3h1V288.6h1V287.4h1V287.3h1V287.8h1V287.4h1V288.8h1V287.7h1V288.3h1V287.7h1V287.9h1V287.7h1V283.6h1V287.2h1V286.9h1V285.8h1V287.1h1V285.6h1V287.8h1V287.7h1V287.5h1V286.4h1V287.3h1V288h1V286.9h1V287.4h1V287.1h1V288.3h1V288.4h1V287.5h1V288.2h1V287.6h1V288.3h1V287.6h1V288.3h1V287.5h1V287.3h1V287.4h1V287.7h1V288.4h1V288.5h1V287.5h1V288.8h1V287.2h1V287.1h1V288.4h1V286.6h1V286.9h1V287.1h1V287.7h1V287.2h1V288.1h1V288.4h1V288.2h1V287.6h1V288.4h1V287.5h1V287h1V288h1V288.8h1V287.9h1V288.2h1V288.6h1V288.4h1V288.5h1V285.3h1V287.6h1V286.8h1V287.3h1V286.6h1V285.2h1V287.1h1V283.8h1V287.3h1V287.5h1V285.8h1V285.5h1V287.1h1V285.3h1V284.8h1V285.5h1V284.1h1V287.4h1V288h1V286.2h1V288h1V286h1V287.3h1V287.3h1V286.3h1V287h1V287.9h1V287.5h1V287.8h1V287.1h1V287.4h1V287.1h1V288.6h1V288.1h1V287.7h1V288.8h1V287.8h1V288.7h1V288.9h1V288.3h1V287.6h1V288.2h1V287.7h1V287.4h1V286.4h1V288h1V287.9h1V287.8h1V288.3h1V288.4h1V287.4h1V286.6h1V285.4h1V287.5h1V287.5h1V286.1h1V286.9h1V285.8h1V288.3h1V287.7h1V286.4h1V285.9h1V286.7h1V285.6h1V287.8h1V287.6h1V285.3h1V286.4h1V285.8h1V286.3h1V286.5h1V287.3h1V285.2h1V286.3h1V287.7h1V284.5h1V283.9h1V286h1V287.8h1V287.7h1V286.7h1V288.1h1V287.7h1V288.3h1V287.1h1V287.3h1V288.2h1V287.3h1V287.7h1V288h1V286.9h1V286.8h1V286.7h1V287.4h1V286.2h1V287.7h1V287.9h1V285.8h1V285.9h1V287.5h1V284.7h1V287.3h1V286.4h1V286h1V288h1V288.1h1V288.4h1V287.7h1V287.8h1V286.7h1V286.9h1V286.1h1V286.7h1V286.9h1V285.4h1V286.2h1V287.3h1V286.8h1V287h1V287.3h1V287.4h1V285.9h1V286.1h1V285.9h1V286h1V286.8h1V288.1h1V287h1V287.9h1V286.5h1V287.1h1V288.3h1V287.2h1V288.4h1V287.2h1V288.2h1V287.7h1V287h1V288.6h1V286.8h1V288.6h1V287.5h1V287h1V288h1V287.8h1V288.2h1V287.2h1V287.7h1V287.5h1V286.8h1V287.4h1V287.7h1V286.8h1V286.5h1V288.1h1V286.4h1V286.5h1V287.4h1V287.6h1V287.9h1V286.5h1V284.8h1V286h1V286.8h1V286.2h1V287.2h1V287.1h1V286h1V286.2h1V285.3h1V287.1h1V286.7h1V285.1h1V287.1h1V286h1V286.4h1V286.4h1V287.7h1V287.5h1V288h1V288.5h1V288h1V289.2h1V289.2h1V289.5h1V289.5h1V289.7h1V289.3h1V289h1V289.4h1V288.8h1V288.4h1V289.1h1V288.8h1V288.6h1V288.5h1V288.6h1V288.2h1V287.7h1V287.3h1V287.5h1V288.4h1V288h1V287.1h1V288.2h1V286.9h1V288.5h1V287.4h1V288.2h1V288.2h1V288.2h1V288h1V286h1V286.1h1V287.7h1V288h1V287.8h1V286.1h1V286h1V285.3h1V287h1V285.7h1V287.1h1V287.7h1V287.6h1V286h1V286.6h1V285.8h1V286.8h1V286.8h1V288h1V286.7h1V287.7h1V286.6h1V288h1V287.4h1V287.5h1V287.4h1V288.1h1V288h1V286.6h1V286.9h1V286h1V286.3h1V285.8h1V285.1h1V286.5h1V286h1V285.5h1V284.7h1V287.6h1V285.4h1V287.1h1V286.4h1V286.4h1V286.2h1V287.7h1V285.8h1V287.2h1V287.3h1V287h1V285.7h1V285.8h1V285.6h1V287.7h1V286.5h1V287.5h1V287h1V288.1h1V288.5h1V287.5h1V287.2h1V288.3h1V288.2h1V287.9h1V287.3h1V285.5h1V286.7h1V286.2h1V286.3h1V286.7h1V286h1V285.2h1V286.4h1V285.2h1V286.7h1V286.9h1V286.9h1V286.6h1V286.2h1V286.8h1V285.4h1V286.2h1V286.6h1V286.4h1V286.6h1V285.1h1V287.2h1V286.1h1V286.7h1V285.1h1V286.5h1V287.3h1V287h1V286.6h1V286.9h1V286.1h1V285.5h1V285.8h1V286.7h1V288h1V287.9h1V287.5h1V286.2h1V286h1V285.8h1V287.3h1V287.8h1V287.3h1V285.9h1V287.7h1V287.7h1V286.1h1V287.6h1V288.4h1V287.7h1V287.1h1V287.2h1V287.1h1V287.5h1V286.9h1V287.6h1V286.4h1V287.8h1V287.6h1V286.3h1V287.6h1V288.3h1V286h1V286.9h1V287h1V286.5h1V287.3h1V288.1h1V285.3h1V288.6h1V288.8h1V287.5h1V287.4h1V287.8h1V288.5h1V287.8h1V288.3h1V287.9h1V287.3h1V288.3h1V287.2h1V286.4h1V287.2h1V288h1V287.9h1V286.2h1V287h1V286.6h1V286.7h1V288.3h1V287.3h1V287.5h1V288h1V288.6h1V287.9h1V288.5h1V287.5h1V288h1V287.7h1V288h1V288.1h1V288.7h1V287.5h1V287.3h1V287.8h1V288.3h1V287h1V288.1h1V287h1V287.8h1V287.2h1V286.8h1V287.7h1V287.3h1V287h1V287.3h1V287.5h1V285.6h1V286.5h1V287.4h1V286.5h1V286.3h1V286.2h1V287.1h1V287.9h1V287.7h1V287h1V286.9h1V286.7h1V286.6h1V286.8h1V285.7h1V285.4h1V286.6h1V288.2h1V287.1h1V287.3h1V285.8h1V286.4h1V286.9h1V286.3h1V287.5h1V287.9h1V285.7h1V288.3h1V285.3h1V287.6h1V288.4h1V288.3h1V287.1h1V288.1h1V288.1h1V288.3h1V287.7h1V286.5h1V286.6h1V286.9h1V287h1V286.6h1V286.4h1V287.9h1V286.6h1V287.2h1V288.1h1V286.9h1V287.3h1V286.6h1V287.2h1V286.6h1V287.4h1V288h1V287.1h1V288.4h1V285h1V288.3h1V288.2h1V288.6h1V288.4h1V287.6h1V288.3h1V287.7h1V287.8h1V288.2h1V288.4h1V287.5h1V288.1h1V287.4h1V288.1h1V288.8h1V288.9h1V287.6h1V287.3h1V286.9h1V288.3h1V284.8h1V286.7h1V288.2h1V287.3h1V288.1h1V286.6h1V287.3h1V286.9h1V286.6h1V287.4h1V286.4h1V287.9h1V286.9h1V285.9h1V287.7h1V285.3h1V285.8h1V285.8h1V285.8h1V286.7h1V286.4h1V286.3h1V286.5h1V287.1h1V287.2h1V287.5h1V287.3h1V286.8h1V288.2h1V288.2h1V288.3h1V287h1V288.4h1V287.7h1V286.2h1V287.3h1V287h1V287h1V287.4h1V287.9h1V286.7h1V286.6h1V285.8h1V285.4h1V285.6h1V287.5h1V283.8h1V285.7h1V286.9h1V287.9h1V288.2h1V287.8h1V286.5h1V286.9h1V287.5h1V288.2h1V287.2h1V288.4h1V287.1h1V288.6h1V287.8h1V288h1V287.4h1V288.2h1V288.1h1V287.2h1V287.8h1V287.4h1V287.9h1V286.7h1V287.6h1V286.8h1V288.1h1V287.8h1V287.8h1V287.6h1V287h1V288.2h1V288.3h1V287h1V288.3h1V287h1V288.2h1V288.8h1V287.6h1V287.9h1V285.8h1V288.4h1V288.5h1V288h1V288.4h1V288.3h1V288.3h1V287.7h1V288.5h1V287.5h1V288.1h1V286.9h1V287.6h1V287.3h1V287.2h1V287.1h1V286.7h1V286.2h1V287.7h1V287h1V288.1h1V288.1h1V288h1V288h1V286.7h1V286.3h1V286.6h1V286.6h1V284.8h1V286.7h1V286.4h1V286.7h1V287.7h1V287.5h1V286.3h1V286.5h1V287.2h1V287.4h1V287.8h1V287h1V287.9h1V287.7h1V287.4h1V286.6h1V286.9h1V286.3h1V287.2h1V286.2h1V286.4h1V286.6h1V284.9h1V286.9h1V286.5h1V288h1V286.4h1V286.5h1V288.2h1V288h1V287.3h1V288.2h1V287.2h1V287.7h1V287.7h1V288.6h1V286.8h1V287.5h1V287.1h1V287.7h1V287h1V286.6h1V288.1h1V286.9h1V287.3h1V287.9h1V287.5h1V287.7h1V285.9h1V288.1h1V288.1h1V286.1h1V286.8h1V286.3h1V288.2h1V286.3h1V287h1V287.5h1V286.9h1V288.1h1V285.9h1V286.3h1V287.6h1V287.1h1V287.1h1V285.9h1V287.7h1V287.8h1V287.8h1V287h1V287.5h1V285.5h1V286.8h1V287h1V287.3h1V284.8h1V287.1h1V287h1V288h1V286.7h1V287.2h1V286.7h1V287.5h1V286.9h1V286h1V287.9h1V288.2h1V288.2h1V288.3h1V287h1V288.5h1V287.3h1V287.4h1V288.3h1V288.4h1V288h1V288.2h1V288h1V286.4h1V286h1V287.9h1V286.1h1V288.2h1V287.9h1V287.6h1V288.1h1V286.5h1V288.1h1V287.7h1V287.9h1V287.7h1V287.5h1V287.7h1V287.4h1V288.4h1V286.4h1V288.3h1V288.2h1V286.9h1V288h1V288.5h1V288.5h1V286.5h1V286.8h1V287.2h1V285.7h1V286.2h1V286.6h1V287.5h1V287.4h1V287.7h1V285.9h1V287.1h1V285.3h1V285.9h1V286.9h1V285.1h1V286.9h1V285.9h1V285.9h1V285.6h1V285.4h1V285.7h1V286h1V287.1h1V287.9h1V286.3h1V285.6h1V287.2h1V287.5h1V287h1V286.8h1V286.7h1V287.7h1V285.9h1V286.2h1V287.9h1V287.1h1V286.7h1V288h1V287.5h1V288.6h1V288.5h1V288.3h1V287.6h1V286.5h1V287h1V285.8h1V287.4h1V285.9h1V287.2h1V287.3h1V286.7h1V287.8h1V287.6h1V287.6h1V288.1h1V287.7h1V288.4h1V288.7h1V288.2h1V287.1h1V288.5h1V286.4h1V288.3h1V287.2h1V287.5h1V287.4h1V288.8h1V288.9h1V287.9h1V287.5h1V288.8h1V288.4h1V287.8h1V288.7h1V288.5h1V288.6h1V288.1h1V287.7h1V287.3h1V287.3h1V287.3h1V288.5h1V287.7h1V288.9h1V287.6h1V288.5h1V287.3h1V288.2h1V287.6h1V288.3h1V288.6h1V287.3h1V287.1h1V288.1h1V287.6h1V286.1h1V288.1h1V288h1V287.7h1V287h1V288.4h1V286.7h1V288.9h1V289.3h1V289.1h1V290.5V291.6h-1V291.7h-1V292h-1V294h-1V293.1h-1V294.1h-1V293.3h-1V293.2h-1V293.3h-1V294.2h-1V293.3h-1V292.9h-1V294h-1V293.7h-1V292.7h-1V292.9h-1V293.1h-1V292.8h-1V293.6h-1V292.5h-1V293.5h-1V292.4h-1V293.2h-1V292.6h-1V293.4h-1V293.6h-1V293.7h-1V293.4h-1V293h-1V292.4h-1V292.4h-1V292.5h-1V293.2h-1V292.5h-1V292.4h-1V293.2h-1V293.1h-1V292.3h-1V292.6h-1V293.6h-1V293.4h-1V293.7h-1V292.8h-1V294h-1V292.7h-1V293.7h-1V292.8h-1V292.4h-1V292.8h-1V293.4h-1V292.9h-1V293.1h-1V293.4h-1V292.9h-1V294h-1V293.5h-1V293.7h-1V295h-1V293.7h-1V294.7h-1V293.9h-1V294.6h-1V293.2h-1V293.1h-1V292.9h-1V292.7h-1V293.5h-1V293.1h-1V294.2h-1V293.7h-1V293.2h-1V294.6h-1V295h-1V293.5h-1V294h-1V294.2h-1V294h-1V293.5h-1V294.1h-1V294.9h-1V294.7h-1V293.3h-1V294.3h-1V294.7h-1V295.3h-1V295.7h-1V294.7h-1V294.8h-1V294.8h-1V294h-1V295.4h-1V294.4h-1V295.2h-1V295.4h-1V294h-1V295h-1V293.3h-1V293.9h-1V293.9h-1V294.2h-1V294.5h-1V295.2h-1V293.8h-1V293.9h-1V294.2h-1V292.6h-1V292.9h-1V293.2h-1V294h-1V292.9h-1V293.1h-1V294.4h-1V292.9h-1V293.7h-1V293.2h-1V293.4h-1V293.2h-1V293.3h-1V293.5h-1V292.8h-1V294.5h-1V293.3h-1V293.2h-1V293.4h-1V292.9h-1V295.1h-1V293.1h-1V294.8h-1V294.7h-1V293.4h-1V292.9h-1V293.4h-1V293h-1V292.8h-1V293.3h-1V293.5h-1V292.9h-1V293.9h-1V292.7h-1V292.9h-1V292.9h-1V293.5h-1V294.6h-1V294.2h-1V293.6h-1V294.1h-1V293.8h-1V294.5h-1V293.1h-1V293.9h-1V294.2h-1V295h-1V293.7h-1V294h-1V294h-1V295.5h-1V293.6h-1V294.1h-1V293.4h-1V293.2h-1V293.9h-1V294.7h-1V293.8h-1V293.9h-1V293.6h-1V294.7h-1V294.9h-1V293.3h-1V293.9h-1V293.3h-1V293.7h-1V294.6h-1V292.9h-1V294.4h-1V294h-1V294.7h-1V293.2h-1V293.2h-1V295h-1V293.4h-1V293.6h-1V293.5h-1V293.5h-1V294h-1V293h-1V294.4h-1V294.1h-1V293.5h-1V293.9h-1V293.4h-1V293.8h-1V292.4h-1V293.4h-1V293.2h-1V293.8h-1V292.8h-1V293.7h-1V293.3h-1V293h-1V294.2h-1V294.4h-1V293.5h-1V294.4h-1V294h-1V295.2h-1V294.6h-1V294.3h-1V294.9h-1V293.8h-1V294.7h-1V294h-1V294.3h-1V293.8h-1V293.4h-1V293.4h-1V293.9h-1V293.4h-1V293.8h-1V294h-1V294.2h-1V294.4h-1V293.7h-1V293.5h-1V294.4h-1V294.7h-1V294.5h-1V295.3h-1V294.4h-1V294.3h-1V294.5h-1V294h-1V293.3h-1V293.3h-1V293.1h-1V292.9h-1V293.7h-1V293.7h-1V294.7h-1V294.2h-1V293.8h-1V293.7h-1V293.6h-1V293.6h-1V293.9h-1V292.9h-1V293.3h-1V292.6h-1V293.3h-1V292.8h-1V292.7h-1V292.9h-1V293.2h-1V292.5h-1V292.7h-1V294.8h-1V292.9h-1V293.3h-1V292.6h-1V293h-1V293.8h-1V292.8h-1V293.9h-1V292.9h-1V293.2h-1V293.8h-1V293.5h-1V293.2h-1V293.4h-1V293.2h-1V294h-1V293.5h-1V294h-1V293.6h-1V293.6h-1V293.3h-1V293.6h-1V293.3h-1V293.1h-1V293.8h-1V292.9h-1V293.2h-1V292.4h-1V293.7h-1V292.7h-1V293.8h-1V292.8h-1V293.6h-1V294.2h-1V294.5h-1V293.2h-1V292.8h-1V293.5h-1V294h-1V294.9h-1V296.2h-1V293.7h-1V295.2h-1V295h-1V294.9h-1V294.6h-1V294.6h-1V293.6h-1V293.8h-1V294h-1V293.8h-1V293.7h-1V294.3h-1V293.4h-1V292.7h-1V293.9h-1V292.9h-1V292.7h-1V292.7h-1V293.8h-1V293.8h-1V293.6h-1V293.7h-1V293.7h-1V294.3h-1V294.3h-1V294.1h-1V294h-1V295.1h-1V295h-1V295h-1V295.1h-1V293.8h-1V294.9h-1V294.1h-1V293.4h-1V294.4h-1V293.7h-1V294.3h-1V293.9h-1V294h-1V294.1h-1V293.3h-1V293.5h-1V292.9h-1V294.1h-1V296.1h-1V293.1h-1V293.6h-1V293.2h-1V293.3h-1V292.2h-1V292.4h-1V292.8h-1V293.6h-1V293h-1V293.2h-1V292.9h-1V292.8h-1V293.1h-1V293.1h-1V293h-1V293.2h-1V292.9h-1V292.7h-1V292.7h-1V292.8h-1V295.2h-1V293h-1V293.7h-1V293.1h-1V293.6h-1V294.5h-1V293.8h-1V294.2h-1V293.9h-1V294.4h-1V293.2h-1V294h-1V294.5h-1V293.1h-1V294.6h-1V294.4h-1V293.9h-1V294.2h-1V294.3h-1V294.5h-1V293.4h-1V292.7h-1V293.1h-1V292.9h-1V293.8h-1V292.7h-1V292.9h-1V293.4h-1V294.9h-1V293.2h-1V294.8h-1V293.6h-1V293.7h-1V294.6h-1V293.9h-1V294.2h-1V296.1h-1V293.6h-1V294.1h-1V293.4h-1V294.1h-1V295.4h-1V294.5h-1V294h-1V294.3h-1V294.4h-1V294h-1V293.7h-1V293.3h-1V293.1h-1V293.8h-1V294.5h-1V294.4h-1V294.3h-1V293.6h-1V294.2h-1V295h-1V293.4h-1V293.9h-1V294h-1V293.7h-1V293.4h-1V294h-1V293.6h-1V293.5h-1V294h-1V292.9h-1V294h-1V293h-1V293.2h-1V293.7h-1V293.1h-1V292.5h-1V292.8h-1V292.8h-1V293h-1V293.2h-1V293.2h-1V292.6h-1V292.9h-1V292.6h-1V293h-1V293.5h-1V293.4h-1V292.8h-1V294.2h-1V294.2h-1V293.8h-1V294.5h-1V293.6h-1V293.3h-1V293.8h-1V294.3h-1V293.5h-1V293h-1V293.3h-1V292.9h-1V292.9h-1V293.1h-1V292.5h-1V293.3h-1V293.5h-1V293.2h-1V292.3h-1V292.6h-1V295.7h-1V292.8h-1V293.8h-1V294.5h-1V293.8h-1V294.5h-1V295h-1V293.1h-1V293.5h-1V294.3h-1V293.4h-1V293.3h-1V294.7h-1V293.6h-1V294h-1V293.5h-1V293.9h-1V293.8h-1V293.9h-1V293.3h-1V292.7h-1V293.3h-1V294.8h-1V293.3h-1V293.6h-1V294.7h-1V293.9h-1V293.5h-1V293.9h-1V294.8h-1V294.8h-1V294.4h-1V293.6h-1V293.4h-1V293.2h-1V294.5h-1V294.7h-1V295h-1V294.9h-1V294.2h-1V294.5h-1V294h-1V293.9h-1V294.2h-1V295.7h-1V294.7h-1V295.3h-1V294.4h-1V296h-1V294.3h-1V294.7h-1V294.2h-1V294.7h-1V295.5h-1V294.1h-1V295h-1V294.2h-1V293.9h-1V294.5h-1V294.4h-1V295.4h-1V294.3h-1V295.7h-1V295h-1V294.4h-1V294.5h-1V294.4h-1V294.3h-1V294.6h-1V293.4h-1V292.8h-1V292.9h-1V293h-1V293.7h-1V293.4h-1V292.5h-1V293.1h-1V293.8h-1V293.8h-1V294.3h-1V293.5h-1V294.9h-1V295.2h-1V294.8h-1V294.3h-1V293.8h-1V293.7h-1V294.7h-1V293.4h-1V294.6h-1V294.4h-1V294.6h-1V294h-1V295.5h-1V293.6h-1V296.3h-1V295.6h-1V295.1h-1V294.6h-1V295.3h-1V294.7h-1V294.7h-1V294.8h-1V293.9h-1V294.5h-1V293.4h-1V293h-1V293.8h-1V293.6h-1V293.5h-1V293.1h-1V294.4h-1V293.4h-1V293.9h-1V293.4h-1V294.4h-1V294.4h-1V295.2h-1V294.4h-1V295h-1V293.5h-1V293.4h-1V293.8h-1V295.2h-1V293.9h-1V295.5h-1V294.9h-1V294.5h-1V293.4h-1V293.2h-1V293.7h-1V294.8h-1V294.7h-1V293.3h-1V293.2h-1V292.9h-1V292.9h-1V293.5h-1V292.6h-1V294.1h-1V292.9h-1V293.6h-1V293h-1V292.6h-1V293.3h-1V293.6h-1V293.1h-1V293h-1V292.4h-1V292.5h-1V292.7h-1V292.1h-1V292.2h-1V292.5h-1V292.3h-1V291.7h-1V291.8h-1V291.6h-1V291.3h-1V291.5h-1V291.6h-1V291.7h-1V291.8h-1V293h-1V292.6h-1V292.9h-1V293.3h-1V293.4h-1V294.4h-1V294.4h-1V295h-1V294h-1V295.8h-1V294.7h-1V293.8h-1V295.2h-1V294.5h-1V294.9h-1V293.8h-1V294h-1V294.7h-1V294.3h-1V294.7h-1V295.3h-1V294.7h-1V293.4h-1V293.7h-1V293.4h-1V294.2h-1V294.4h-1V292.9h-1V294.4h-1V294.2h-1V293.3h-1V293.5h-1V294.1h-1V293.3h-1V293.5h-1V293.6h-1V292.8h-1V293.3h-1V292.9h-1V294h-1V293.7h-1V292.7h-1V294.2h-1V292.6h-1V294h-1V293.4h-1V293.2h-1V293.6h-1V292.5h-1V293.7h-1V292.7h-1V293.7h-1V294.2h-1V293.5h-1V294.1h-1V293h-1V294.5h-1V294.6h-1V294.6h-1V294.6h-1V294.9h-1V293.5h-1V293.7h-1V294.3h-1V294.7h-1V293.9h-1V294.8h-1V295.3h-1V294.1h-1V294.7h-1V294.6h-1V294.5h-1V294.2h-1V293.2h-1V293.3h-1V292.9h-1V293.3h-1V293.2h-1V294.7h-1V294.7h-1V294.1h-1V296.1h-1V293.9h-1V294.8h-1V295.1h-1V293.3h-1V293.8h-1V294.6h-1V293.5h-1V294.2h-1V294.1h-1V293.9h-1V293.1h-1V293.2h-1V293.3h-1V292.8h-1V293.4h-1V293.7h-1V293.2h-1V293.5h-1V293.5h-1V294.2h-1V293.5h-1V293.4h-1V294.9h-1V295.7h-1V297.1h-1V293.9h-1V295h-1V295.3h-1V294.2h-1V294.5h-1V294.3h-1V295h-1V294.3h-1V295.6h-1V293.9h-1V293.2h-1V295.2h-1V294.2h-1V295.1h-1V294.3h-1V293.5h-1V292.7h-1V294.8h-1V294.2h-1V294.9h-1V293.6h-1V293.6h-1V295.3h-1V294.6h-1V293.5h-1V292.7h-1V293.2h-1V293.4h-1V293.3h-1V292.9h-1V294.5h-1V293.5h-1V293.3h-1V292.8h-1V293.4h-1V292.7h-1V292.4h-1V292.5h-1V293h-1V292.6h-1V293h-1V293h-1V292.6h-1V293.6h-1V293.5h-1V293.8h-1V293.1h-1V293.7h-1V293.5h-1V294h-1V294.6h-1V293.8h-1V293.5h-1V295.3h-1V293.4h-1V294.3h-1V293.5h-1V294h-1V297.1h-1V295.2h-1V295.5h-1V295.4h-1V294h-1V295.5h-1V295.2h-1V294h-1V294.2h-1V297.2h-1V294.5h-1V295.7h-1V293.9h-1V294.2h-1V294.3h-1V293.9h-1V295.4h-1V292.6h-1V292.6h-1V292.5h-1V293.1h-1V293.1h-1V292.3h-1V293.2h-1V294.1h-1V293.2h-1V292.7h-1V293.4h-1V292.8h-1V292.7h-1V292.9h-1V293.9h-1V293.4h-1V293.8h-1V293.9h-1V294.4h-1V292.8h-1V293.6h-1V293.5h-1V292.4h-1V293.5h-1V292.7h-1V293h-1V293.3h-1V293.6h-1V293.4h-1V293.3h-1V292.9h-1V293.4h-1V292.8h-1V293.4h-1V293h-1V293.4h-1V293h-1V292.8h-1V293.6h-1V293.4h-1V293.9h-1V293.3h-1V293.8h-1V294.2h-1V293.8h-1V293.5h-1V293.5h-1V295.7h-1V293.9h-1V295.2h-1V294h-1V293.6h-1V297.2h-1V293.2h-1V293.2h-1V293.5h-1V293h-1V293.1h-1V292.6h-1V293.3h-1V293h-1V293.7h-1V293.6h-1V292.8h-1V292.7h-1V293.4h-1V294.9h-1V293h-1V293.8h-1V293.1h-1V293.5h-1V294.1h-1V294.1h-1V294.7h-1V293.7h-1V293.3h-1V294.2h-1V292.9h-1V292.4h-1V293.4h-1V292.7h-1V293.5h-1V292.4h-1V293.6h-1V293.9h-1V293.8h-1V293.3h-1V294.2h-1V294.3h-1V293.1h-1V293.5h-1V293.2h-1V294.7h-1V293.4h-1V293.4h-1V294.2h-1V293.3h-1V294.1h-1V294.4h-1V294.2h-1V293.2h-1V293.1h-1V292.4h-1V293.3h-1V292.4h-1V292.5h-1V292.9h-1V293h-1V293.3h-1V293h-1V293.7h-1V293.7h-1V294h-1V293.3h-1V293.8h-1V294.2h-1V293.3h-1V293.9h-1V293.9h-1V293.4h-1V294.9h-1V293.7h-1V295.2h-1V294.9h-1V296.8h-1V294.7h-1V294.5h-1V295.3h-1V295.9h-1V296.1h-1V294.4h-1V295.9h-1V294h-1V295.4h-1V295h-1V293.7h-1V294.7h-1V295.5h-1V292.6h-1V293.4h-1V294.8h-1V292.7h-1V292.4h-1V292.8h-1V293.1h-1V292.6h-1V292.1h-1V292.9h-1V292.3h-1V293.6h-1V292.9h-1V292.7h-1V292.5h-1V292.6h-1Z" fill="#3a8289"/>
<path d="M271 352.5V344.7h1V344.8h1V342.1h1V344.6h1V344.3h1V344.2h1V343.2h1V341.8h1V343.7h1V345.2h1V342.7h1V345.4h1V342.9h1V341.2h1V340.9h1V340.1h1V344.5h1V342.3h1V346h1V341.5h1V345.1h1V345.7h1V344.9h1V345.8h1V345.5h1V344.7h1V346.2h1V346.5h1V345.8h1V347h1V348.1h1V347h1V346.9h1V348.9h1V348h1V348.4h1V347.8h1V347h1V348.4h1V348.5h1V348.5h1V349.7h1V348.8h1V348.8h1V349.6h1V351.2h1V351.5h1V348.1h1V348.2h1V348.9h1V349h1V351.6h1V351.4h1V351.6h1V342.1h1V344h1V343.9h1V344.7h1V344.5h1V344.8h1V345h1V342.2h1V341.9h1V342.9h1V345.5h1V343.9h1V342h1V344.7h1V341.3h1V343.6h1V345.3h1V346.5h1V344.5h1V344.7h1V345.6h1V345.5h1V346.2h1V345.7h1V344.9h1V345.3h1V343.6h1V344.1h1V343.8h1V342.9h1V343.4h1V345h1V344.5h1V342.9h1V342.1h1V344.9h1V342.3h1V344.4h1V343.1h1V344.1h1V342.5h1V344.8h1V342.7h1V342.4h1V344.1h1V343.6h1V338.2h1V344h1V343.8h1V343h1V340.3h1V344h1V342.8h1V345.1h1V344.4h1V347.3h1V346.6h1V342.1h1V345.7h1V344.7h1V346.6h1V344.9h1V345.1h1V346.4h1V345h1V344.6h1V347h1V346.6h1V347.8h1V348.3h1V348.5h1V349.4h1V348.5h1V349.2h1V348.3h1V349.9h1V349.8h1V351.4h1V351.3h1V351h1V344.2h1V341.9h1V342.2h1V344h1V345.6h1V346.5h1V343.6h1V345.3h1V344.9h1V343.9h1V344.1h1V346.2h1V345.8h1V343.2h1V344.4h1V346.6h1V344.2h1V345.5h1V345h1V345.6h1V343.2h1V345h1V343.4h1V348.2h1V348.2h1V348.5h1V344h1V345.5h1V342.2h1V344.7h1V345.7h1V343.2h1V346.5h1V344.8h1V344.6h1V344.1h1V347.2h1V344.4h1V344.7h1V345.5h1V344.1h1V344.2h1V344.2h1V344.2h1V346.2h1V344.2h1V344.1h1V341.7h1V342.9h1V344.4h1V342.1h1V339.6h1V343.1h1V342.2h1V343.2h1V344.4h1V343.9h1V345.2h1V341.8h1V342.9h1V341.9h1V344.6h1V344.4h1V341.1h1V342.5h1V336.8h1V343.3h1V341.6h1V343.9h1V342.5h1V341.8h1V345.7h1V343h1V342.3h1V341.7h1V345.1h1V342.7h1V345.8h1V343.7h1V344.6h1V341.6h1V344.2h1V344.1h1V346.3h1V347.5h1V349.9h1V352.5V355.1h-1V357.4h-1V359.4h-1V361.9h-1V361.5h-1V363.3h-1V360.7h-1V361.6h-1V359.2h-1V362.2h-1V360.8h-1V363.3h-1V363h-1V361.9h-1V359.5h-1V362.9h-1V362.6h-1V362h-1V363.4h-1V362.3h-1V368.1h-1V362.4h-1V363.8h-1V361.7h-1V360.6h-1V362.8h-1V362.5h-1V362.3h-1V360.1h-1V361.1h-1V361.2h-1V362h-1V362.5h-1V361.4h-1V364.1h-1V363.2h-1V360.3h-1V361.9h-1V363.2h-1V361.2h-1V360.3h-1V359.2h-1V360.2h-1V361h-1V360h-1V359.5h-1V359.8h-1V359.8h-1V360.3h-1V357.9h-1V360.2h-1V360h-1V359.7h-1V359.1h-1V361.2h-1V359.4h-1V360.4h-1V362.9h-1V360.2h-1V359.3h-1V356.7h-1V357h-1V357.3h-1V361.7h-1V360.3h-1V361.6h-1V359.3h-1V360.2h-1V359.6h-1V360.8h-1V358.7h-1V360.8h-1V361.4h-1V360.1h-1V359.3h-1V360.7h-1V361.2h-1V359.7h-1V360.2h-1V361.4h-1V358.7h-1V360.2h-1V360.6h-1V362.5h-1V362.4h-1V361.6h-1V354h-1V353.8h-1V353.8h-1V355.2h-1V355.2h-1V356.4h-1V355.6h-1V356.6h-1V356h-1V356.9h-1V357.2h-1V357.7h-1V358.6h-1V358.4h-1V359.8h-1V359.7h-1V359.3h-1V360h-1V359.9h-1V358.8h-1V359.7h-1V359.2h-1V361.4h-1V358.2h-1V357.9h-1V360.5h-1V359.7h-1V362.2h-1V360.9h-1V364.6h-1V362.6h-1V361.4h-1V360.7h-1V367.7h-1V361.9h-1V361.1h-1V363.2h-1V362h-1V360.5h-1V362h-1V361.1h-1V361.5h-1V361.4h-1V362.3h-1V360.1h-1V362.2h-1V361.3h-1V360.2h-1V359.9h-1V360.8h-1V360.5h-1V360.9h-1V360.6h-1V361.7h-1V359.7h-1V359.9h-1V359.1h-1V359.6h-1V359.9h-1V359.9h-1V359.4h-1V360.3h-1V358.7h-1V359.9h-1V360.9h-1V363.9h-1V359.8h-1V363h-1V361.3h-1V360.2h-1V361.4h-1V362.1h-1V361.1h-1V360.7h-1V359.9h-1V360.4h-1V360.8h-1V361h-1V360.6h-1V363.4h-1V353.4h-1V353.4h-1V353.4h-1V356.3h-1V356h-1V355.9h-1V356.7h-1V353.5h-1V353.8h-1V355.5h-1V356.1h-1V356h-1V355.5h-1V356.5h-1V356.4h-1V356.4h-1V356.9h-1V357h-1V356.4h-1V356.8h-1V356.4h-1V358.1h-1V358.2h-1V356.8h-1V357.7h-1V359h-1V358.2h-1V358.7h-1V359.7h-1V359.3h-1V358.7h-1V359.6h-1V359.8h-1V359.6h-1V361.4h-1V359.9h-1V362.1h-1V361.4h-1V364.3h-1V364.1h-1V364h-1V362.1h-1V359.6h-1V362.2h-1V359.9h-1V362h-1V363.5h-1V361.9h-1V361.8h-1V360.5h-1V360.5h-1V363.4h-1V360.5h-1V360.5h-1ZM531 352.5V350.9h1V350.1h1V349.6h1V348.8h1V349.7h1V349.2h1V350.1h1V350.1h1V350.2h1V350.6h1V350.5h1V350.9h1V350.5h1V350.6h1V349.5h1V348.8h1V349.7h1V347.6h1V349.2h1V348h1V348.9h1V349.9h1V349.5h1V350.7h1V349.9h1V349.7h1V348.8h1V348.4h1V348.6h1V348.8h1V348.1h1V348.3h1V348.7h1V348.5h1V347.1h1V347.6h1V347.5h1V348.2h1V348.4h1V349.8h1V349.6h1V349.7h1V349.8h1V349h1V348.9h1V349.7h1V350h1V349.7h1V349.7h1V350.8h1V350.6h1V350.2h1V350.8h1V351h1V351.2h1V350.7h1V351.3h1V351.6h1V351.4h1V348.2h1V346.6h1V346.6h1V347.8h1V346.1h1V347.2h1V345.9h1V347.2h1V349.9h1V351.4h1V352.5V353.6h-1V355.1h-1V358.1h-1V359.1h-1V357.1h-1V358.9h-1V357.6h-1V358.8h-1V358.4h-1V357.4h-1V353.6h-1V353.4h-1V353.8h-1V354h-1V353.9h-1V354h-1V354.4h-1V354.7h-1V354.5h-1V354.3h-1V355.2h-1V355.3h-1V354.9h-1V355.3h-1V355.8h-1V355.8h-1V355.1h-1V355.4h-1V355.5h-1V355.4h-1V356.3h-1V356.7h-1V357.5h-1V357.5h-1V357h-1V356.6h-1V356.3h-1V356.7h-1V356.8h-1V356.1h-1V356.4h-1V356.4h-1V355.9h-1V355.5h-1V355.1h-1V354.4h-1V355.3h-1V355.2h-1V355.9h-1V356.9h-1V356h-1V357.1h-1V355.4h-1V356.4h-1V355.4h-1V354.7h-1V354.4h-1V354.1h-1V354.4h-1V354.2h-1V354.7h-1V355h-1V354.9h-1V355.7h-1V355.5h-1V356h-1V355.3h-1V354.9h-1V354.1h-1ZM625 352.5V346.8h1V347.6h1V352.5V357.4h-1V357.4h-1ZM631 352.5V347.3h1V346.8h1V352.5V358.1h-1V357.3h-1ZM640 352.5V349.6h1V349.4h1V347.2h1V346.5h1V347.7h1V347.6h1V346.3h1V348h1V346.7h1V346.4h1V347.4h1V347.2h1V347.4h1V347.7h1V347.8h1V347.4h1V347.6h1V347.8h1V348.5h1V348.2h1V348.9h1V349.3h1V349.5h1V349.4h1V350.3h1V349.6h1V350.6h1V350.5h1V350.7h1V350.5h1V350.3h1V350.4h1V350.6h1V351.1h1V350.9h1V351.4h1V350.9h1V351.1h1V351.3h1V350.8h1V351.4h1V351.4h1V351.1h1V351.2h1V351.2h1V351h1V352.5V353.8h-1V353.9h-1V353.8h-1V353.8h-1V353.7h-1V353.7h-1V354.1h-1V353.7h-1V353.9h-1V354.1h-1V353.7h-1V354h-1V354h-1V354.5h-1V354.6h-1V354.5h-1V354.5h-1V354.4h-1V354.7h-1V354.6h-1V355h-1V354.7h-1V355.5h-1V355.5h-1V355.9h-1V356.2h-1V356.4h-1V356.6h-1V357h-1V356.6h-1V357.3h-1V357.4h-1V357.5h-1V357.6h-1V357.7h-1V357.8h-1V358h-1V358h-1V357.1h-1V358.4h-1V357.7h-1V357.4h-1V358h-1V357.6h-1V355.5h-1V355.4h-1ZM687 352.5V344.6h1V342.2h1V344.7h1V344.9h1V346.1h1V343.1h1V345.4h1V344.4h1V342.6h1V344.6h1V342.1h1V343.9h1V345.9h1V346h1V345.2h1V345.9h1V343.2h1V343.6h1V341.4h1V344.1h1V345.1h1V344.7h1V346.2h1V346.2h1V342.5h1V342.5h1V342.9h1V342.1h1V343.6h1V342.5h1V339.1h1V345.4h1V345.8h1V340.5h1V345.3h1V346.2h1V343.2h1V346.2h1V343.3h1V344.3h1V344.5h1V343.9h1V343.4h1V343.7h1V344h1V347.3h1V345.1h1V345.5h1V345.4h1V347h1V347.2h1V345.6h1V347.3h1V346.5h1V345.1h1V344.8h1V346.6h1V346.3h1V344.1h1V347h1V346.1h1V343.5h1V343.1h1V345.8h1V343.7h1V342.8h1V344.5h1V346.7h1V346.7h1V345.6h1V345.8h1V346.4h1V345.3h1V345.8h1V346.6h1V345.2h1V343.1h1V342.6h1V345h1V345.5h1V342.4h1V342.4h1V343.4h1V343.4h1V345h1V345h1V343.5h1V344.7h1V345.6h1V346.5h1V344.3h1V343.8h1V344.1h1V345.9h1V345.9h1V345.1h1V344.5h1V344.9h1V344.4h1V344.6h1V346h1V346.6h1V345.7h1V345.3h1V346.2h1V346.1h1V346.3h1V343.1h1V343.2h1V341.2h1V340.8h1V341.2h1V342.3h1V344.1h1V344.5h1V345.4h1V344.2h1V343h1V344h1V342.3h1V341.5h1V341.7h1V342.5h1V343.4h1V344.7h1V346.9h1V346.3h1V349.4h1V350.5h1V352.5V354.5h-1V355.6h-1V358.5h-1V358h-1V360.8h-1V360.2h-1V362.2h-1V362.9h-1V362.5h-1V362h-1V361.5h-1V362.1h-1V361.4h-1V360h-1V361.9h-1V360.8h-1V362.8h-1V363.3h-1V363.3h-1V363.5h-1V362.2h-1V361.6h-1V359h-1V359.1h-1V359.3h-1V360h-1V360.1h-1V358.5h-1V358.9h-1V360.4h-1V360.6h-1V359.8h-1V360.1h-1V360.1h-1V359.3h-1V359.6h-1V360.5h-1V360.6h-1V360.3h-1V358.9h-1V359.9h-1V360.5h-1V360.9h-1V359.7h-1V360.1h-1V361.5h-1V361.8h-1V361.7h-1V362.4h-1V360.4h-1V360.6h-1V362.5h-1V361.4h-1V359.7h-1V359h-1V359.8h-1V359.8h-1V359.1h-1V359.1h-1V360h-1V358.7h-1V359h-1V360.9h-1V362.1h-1V361.6h-1V359.7h-1V361.6h-1V361.1h-1V359.3h-1V358.2h-1V360.7h-1V359.1h-1V358.6h-1V359.9h-1V359.7h-1V359.1h-1V358.5h-1V359.8h-1V358.1h-1V358.7h-1V360h-1V359.8h-1V360.3h-1V358.6h-1V360.2h-1V360.5h-1V361.2h-1V361.2h-1V360.2h-1V360.2h-1V361.2h-1V359.6h-1V361.2h-1V359.5h-1V359.7h-1V362.9h-1V359.7h-1V360.5h-1V365h-1V362.1h-1V360.2h-1V362.7h-1V361.8h-1V362.4h-1V362.1h-1V359.2h-1V359h-1V360.8h-1V360.2h-1V361.3h-1V362.3h-1V361.8h-1V361.6h-1V359.1h-1V359.9h-1V359.7h-1V360h-1V360.6h-1V363.1h-1V361.1h-1V362.1h-1V360.2h-1V359.8h-1V361.8h-1V358.9h-1V361.4h-1V360.4h-1V362.4h-1V360.4h-1ZM848 352.5V347.3h1V344.9h1V345.2h1V346.2h1V344.2h1V346.2h1V344.6h1V347.1h1V347.1h1V347h1V346.1h1V346.2h1V344.6h1V345.2h1V347.1h1V344.4h1V345.1h1V346.7h1V346.2h1V346.4h1V346h1V342.4h1V342.5h1V346.4h1V345.6h1V346.7h1V343.9h1V344.3h1V347.1h1V345.8h1V346.2h1V347.1h1V346.9h1V346.5h1V348.4h1V347.3h1V347.3h1V347.4h1V347.1h1V348.5h1V349.1h1V350.2h1V350.5h1V349.6h1V350.2h1V350.4h1V350.8h1V352.5V354.1h-1V354.6h-1V354.9h-1V355.3h-1V354.8h-1V354.9h-1V355.9h-1V356.3h-1V357.9h-1V357.3h-1V357.4h-1V357.5h-1V356.5h-1V358.4h-1V358.2h-1V357.8h-1V358h-1V359.2h-1V358.2h-1V360.1h-1V360.4h-1V358.7h-1V359.9h-1V359.2h-1V363.2h-1V361.9h-1V358.6h-1V358.4h-1V359.2h-1V359.5h-1V359.9h-1V360.7h-1V357.9h-1V359.4h-1V359.9h-1V359.2h-1V359.3h-1V358.6h-1V357.9h-1V358.5h-1V360.2h-1V359.4h-1V360.1h-1V358.8h-1V359.9h-1V359.8h-1V357.8h-1ZM897 352.5V346.5h1V344.6h1V343.8h1V346.7h1V344.1h1V345.7h1V345.9h1V344.9h1V343.9h1V345.4h1V343h1V343.3h1V345.2h1V345h1V345.7h1V343.6h1V343.8h1V344.9h1V346.2h1V346.2h1V347.1h1V346h1V346.3h1V345.5h1V347.8h1V345.8h1V347.5h1V346.2h1V345.1h1V346.9h1V346.2h1V347.6h1V347.5h1V347.4h1V347.5h1V347.5h1V349.1h1V348.6h1V347.7h1V347.7h1V349.7h1V349.4h1V349.9h1V350.5h1V350.9h1V350.9h1V350.7h1V350.9h1V351.3h1V351.6h1V352.5V353.4h-1V353.7h-1V354.1h-1V354.3h-1V354.1h-1V354.3h-1V354.4h-1V355.1h-1V355.6h-1V355.4h-1V357h-1V357h-1V356.3h-1V356h-1V357.1h-1V357.2h-1V357h-1V357.9h-1V357.6h-1V358.6h-1V358.3h-1V359.4h-1V358.7h-1V357.9h-1V358.9h-1V357.3h-1V359h-1V358.4h-1V359.4h-1V358.2h-1V358.9h-1V359.4h-1V360h-1V361.3h-1V360.6h-1V359.9h-1V360.5h-1V359.9h-1V361h-1V361.6h-1V359.6h-1V360.8h-1V360.2h-1V358.9h-1V359.7h-1V360.4h-1V358.7h-1V360.4h-1V360.1h-1V358.1h-1ZM955 352.5V350.1h1V350.4h1V350.2h1V349.4h1V350.4h1V350h1V350.3h1V350.6h1V350.9h1V351.4h1V352.5V353.7h-1V354h-1V354.2h-1V354.5h-1V355.1h-1V354.7h-1V355.5h-1V354.8h-1V354.7h-1V354.7h-1ZM966 352.5V345.5h1V347.2h1V346.7h1V345.9h1V344.9h1V344h1V346.5h1V346.7h1V346.1h1V347.1h1V344.9h1V347.3h1V346.7h1V346.2h1V347.7h1V347.1h1V346.3h1V347.6h1V348.2h1V348.7h1V348.6h1V349.8h1V349.7h1V349.9h1V350.6h1V351.1h1V352.5V353.9h-1V354.3h-1V354.9h-1V354.7h-1V355.2h-1V356.4h-1V356.3h-1V356.8h-1V357.3h-1V358.7h-1V357.9h-1V358h-1V359h-1V358.6h-1V357.7h-1V359.4h-1V358.1h-1V358.7h-1V358.4h-1V358.5h-1V359h-1V359.4h-1V358.8h-1V358.8h-1V357.9h-1V359.3h-1ZM993 352.5V346.4h1V347.5h1V348h1V347.9h1V348.5h1V348.1h1V349.5h1V349.8h1V349.3h1V350.1h1V350.5h1V349.4h1V350.1h1V351h1V351h1V350.7h1V350.5h1V351.2h1V351h1V352.5V353.9h-1V353.9h-1V354.4h-1V353.9h-1V354.1h-1V354.2h-1V354.9h-1V355.7h-1V354.6h-1V354.8h-1V355.5h-1V355.3h-1V355.3h-1V356.7h-1V356.3h-1V356.6h-1V356.7h-1V357.1h-1V358.2h-1ZM1022 352.5V345.8h1V347.1h1V344.9h1V346.1h1V344.4h1V347h1V346.3h1V344.6h1V346.4h1V344.9h1V344.8h1V345.8h1V346.6h1V344.9h1V345.1h1V347.4h1V346.5h1V346.7h1V346.3h1V347.7h1V346.6h1V346.3h1V346.8h1V347.5h1V346.8h1V347.3h1V348.4h1V350.4h1V350.5h1V351.1h1V350.7h1V350.3h1V350h1V349.5h1V349.1h1V349.9h1V347.4h1V348.2h1V347.2h1V345.7h1V346.3h1V346.8h1V346.4h1V346.3h1V347.1h1V347.8h1V347.6h1V347.7h1V347.8h1V348h1V348.7h1V349h1V348.9h1V348.4h1V348.8h1V348.1h1V348.9h1V348.5h1V348.8h1V349h1V349.9h1V349.6h1V349.9h1V349.9h1V350.6h1V349.9h1V350.8h1V350.7h1V351h1V350.9h1V350.9h1V350.9h1V351.3h1V351.3h1V351.7h1V352.5V353.4h-1V353.6h-1V353.7h-1V354h-1V354h-1V354h-1V354h-1V354.3h-1V354.4h-1V354.9h-1V354.5h-1V355.2h-1V355.2h-1V355.4h-1V355h-1V355.8h-1V355.6h-1V356.4h-1V356.2h-1V356.6h-1V356.4h-1V356.5h-1V356.3h-1V356.1h-1V356.2h-1V356.8h-1V357h-1V357h-1V357.2h-1V357.5h-1V357.6h-1V358.1h-1V358h-1V358.1h-1V358.3h-1V358h-1V357.7h-1V356.8h-1V357.3h-1V355.4h-1V355.9h-1V355.4h-1V355.1h-1V354.9h-1V354.4h-1V354.1h-1V354.7h-1V355h-1V356.4h-1V357.8h-1V358.6h-1V357.9h-1V358.3h-1V357.8h-1V358.3h-1V357.2h-1V357.8h-1V358h-1V358.4h-1V357.6h-1V359.7h-1V359.4h-1V358.8h-1V358.5h-1V359.6h-1V359.4h-1V359h-1V359.8h-1V359.2h-1V357.9h-1V359.8h-1V358.6h-1V360h-1V357.9h-1V358.9h-1ZM1104 352.5V343.8h1V345.1h1V343.4h1V342.3h1V345.9h1V343.5h1V345.6h1V345.4h1V343.3h1V344.8h1V342.4h1V343.3h1V340.6h1V345.5h1V342.7h1V343.1h1V346.3h1V345.4h1V346.5h1V344.9h1V345.6h1V346h1V345.3h1V343.5h1V343.2h1V344.7h1V344.8h1V343.2h1V342.1h1V343.7h1V343.8h1V341.2h1V341.2h1V343.9h1V345.5h1V343.5h1V344.3h1V343.7h1V341.9h1V342.8h1V344.3h1V343.5h1V344.2h1V345.9h1V341.5h1V344.4h1V341.3h1V343.7h1V342.9h1V341.7h1V345.8h1V342.3h1V345.7h1V345.6h1V343.9h1V345.6h1V341.4h1V344.3h1V342.5h1V343.3h1V345.9h1V345.1h1V343.5h1V344.8h1V343h1V344.8h1V343.1h1V341.8h1V344.9h1V342.3h1V341.9h1V343.2h1V344.1h1V343.5h1V346.2h1V343.2h1V343.2h1V343h1V342.9h1V344.8h1V342.9h1V344.1h1V343.7h1V346.1h1V345.7h1V343.7h1V346.7h1V344.5h1V346.7h1V346.4h1V343.5h1V345.5h1V345.6h1V345.5h1V343.8h1V344.9h1V342.7h1V345.4h1V346.7h1V345.8h1V346.1h1V345.2h1V346.3h1V345.3h1V343.6h1V345h1V346.7h1V346.6h1V343.5h1V345.7h1V345.2h1V344.8h1V346.8h1V344.5h1V346.9h1V346.1h1V346.7h1V344.8h1V346.9h1V347h1V346.3h1V346.9h1V348h1V347.8h1V348.1h1V349.5h1V348.1h1V349.6h1V348.4h1V348.8h1V350.2h1V350.6h1V349.6h1V350.6h1V350.7h1V350.7h1V350.5h1V350.7h1V350.1h1V352.5V354.8h-1V354.3h-1V354.5h-1V354.5h-1V354.2h-1V354.5h-1V355.3h-1V354.4h-1V354.6h-1V356.2h-1V356.4h-1V355.5h-1V356.8h-1V355.8h-1V356.8h-1V357.2h-1V357.1h-1V357.4h-1V358.1h-1V357.6h-1V358h-1V360.3h-1V358.2h-1V359.3h-1V358.5h-1V360.9h-1V358.9h-1V360.2h-1V359.7h-1V359.7h-1V361h-1V358.9h-1V358.7h-1V360h-1V360.7h-1V359.5h-1V359.5h-1V360.3h-1V359.2h-1V360h-1V358.9h-1V360h-1V361.3h-1V360.4h-1V361.2h-1V360.1h-1V359.8h-1V360.1h-1V360.8h-1V358.7h-1V358.3h-1V360.2h-1V358.4h-1V360.6h-1V359.5h-1V359h-1V361.4h-1V360.2h-1V361.9h-1V360.2h-1V361.3h-1V362.2h-1V360.7h-1V361.2h-1V359.5h-1V361.4h-1V361.2h-1V361.4h-1V362.9h-1V361.9h-1V360.6h-1V362.6h-1V361.1h-1V360.5h-1V360.5h-1V360.4h-1V361.7h-1V360.4h-1V359.6h-1V361.3h-1V361.7h-1V359.7h-1V363.5h-1V360.2h-1V360.8h-1V360h-1V359.9h-1V362.5h-1V360.3h-1V363.1h-1V361.8h-1V362h-1V362.6h-1V360.2h-1V362.8h-1V360h-1V361.4h-1V361.2h-1V361.3h-1V361.6h-1V362.4h-1V361.1h-1V360.4h-1V361.8h-1V359.5h-1V360.7h-1V363.7h-1V363h-1V361.6h-1V360.9h-1V362.9h-1V362.1h-1V359.9h-1V360.9h-1V361.9h-1V361.3h-1V359.7h-1V358.8h-1V359.9h-1V360.7h-1V358.7h-1V359.6h-1V359.5h-1V360.7h-1V361.6h-1V359.7h-1V364h-1V361.5h-1V362.8h-1V360.5h-1V361.7h-1V360.3h-1V359.9h-1V361.8h-1V359.1h-1V363.2h-1V361.2h-1V360h-1V361.7h-1ZM1244 352.5V345.8h1V347.5h1V346.5h1V344.1h1V343.7h1V344.5h1V344.8h1V343.3h1V346h1V346.4h1V346.7h1V345.7h1V346.3h1V345.5h1V345.5h1V344.5h1V345.8h1V347.5h1V349.2h1V350h1V351.1h1V352.5V353.8h-1V354.9h-1V355.9h-1V357.1h-1V359h-1V360.3h-1V359.8h-1V359.6h-1V358.8h-1V359.5h-1V358.8h-1V359.4h-1V358.9h-1V361.4h-1V360.6h-1V360.5h-1V360.9h-1V360.8h-1V358.6h-1V358.2h-1V358.9h-1Z" fill="#3a8289"/>
<path d="M296 415.5V406.2h1V409.3h1V411.1h1V412.5h1V410.8h1V410.8h1V412.6h1V411.5h1V410.8h1V411.9h1V411.5h1V411.8h1V412.5h1V410.9h1V411.4h1V412.7h1V412.9h1V411.2h1V411.4h1V411.2h1V412.5h1V411.4h1V412.4h1V412.7h1V412.6h1V413.8h1V413.7h1V415.5V417.3h-1V417.4h-1V418.2h-1V418.8h-1V418.7h-1V419.4h-1V418.5h-1V420h-1V419.5h-1V419.9h-1V418.4h-1V418.4h-1V419.7h-1V419.8h-1V419h-1V419.5h-1V419.7h-1V419.4h-1V420.2h-1V419.7h-1V418.7h-1V420.1h-1V420.4h-1V419h-1V419.8h-1V422.2h-1V424.6h-1ZM348 415.5V406.8h1V411.5h1V412.6h1V411.8h1V412.5h1V411.8h1V412.4h1V412.7h1V412.9h1V413.1h1V413.5h1V415.5V417.4h-1V417.8h-1V417.8h-1V418.2h-1V418.5h-1V419.2h-1V418.4h-1V419.2h-1V418.6h-1V419.8h-1V423.4h-1ZM361 415.5V411.5h1V410.6h1V410.2h1V410.9h1V411.7h1V410.9h1V412.9h1V412.6h1V412.4h1V414h1V413.8h1V410.7h1V410.9h1V410.9h1V412.6h1V411.4h1V411.7h1V412.4h1V412.1h1V411h1V409.1h1V408.7h1V407.7h1V406.8h1V409.8h1V409.6h1V407.3h1V405.7h1V408.3h1V406.7h1V408.3h1V405.1h1V407.4h1V406.2h1V410.4h1V408.2h1V407.3h1V409.7h1V410h1V407.1h1V410.8h1V409h1V409.8h1V410.4h1V412.5h1V413.5h1V413.4h1V413h1V413.3h1V413.3h1V414.6h1V415.5V416.4h-1V417.5h-1V417.4h-1V418.1h-1V417.6h-1V417.7h-1V418.5h-1V420.2h-1V421.1h-1V421.7h-1V420.3h-1V423.9h-1V421h-1V421.7h-1V423.8h-1V423.2h-1V421.5h-1V424h-1V423.7h-1V426.2h-1V422.3h-1V424.5h-1V423.1h-1V424.4h-1V423.6h-1V421.4h-1V421.7h-1V424.4h-1V423.2h-1V422.4h-1V422h-1V420.3h-1V418.8h-1V418.7h-1V418.7h-1V419.5h-1V418.9h-1V419.6h-1V419.7h-1V419.9h-1V417.1h-1V417h-1V418.4h-1V418.2h-1V418.2h-1V419.7h-1V419.3h-1V419.6h-1V420.5h-1V420.3h-1V420.3h-1ZM413 415.5V410.2h1V411.6h1V412.3h1V412.2h1V412.4h1V413.5h1V412.5h1V413.8h1V413.4h1V414h1V413.8h1V414.4h1V415.5V416.5h-1V417.1h-1V417.1h-1V417.6h-1V417.5h-1V418.5h-1V417.5h-1V418.5h-1V418.7h-1V418.6h-1V419.8h-1V420.7h-1ZM427 415.5V404.1h1V404.6h1V404.7h1V406.2h1V405.1h1V404.2h1V406.5h1V408.5h1V407.1h1V408.9h1V407.1h1V407.1h1V407.4h1V407h1V404.8h1V407.7h1V407h1V406.4h1V407.9h1V408.1h1V410.3h1V407.9h1V407h1V406.9h1V404.4h1V407.9h1V410.2h1V411.5h1V411.5h1V411.4h1V412.8h1V413.4h1V413.4h1V414.3h1V415.5V416.7h-1V417.5h-1V417.8h-1V418.2h-1V419.7h-1V419.6h-1V419.3h-1V421h-1V422.9h-1V426.7h-1V423.9h-1V423.9h-1V423.1h-1V421.1h-1V423.1h-1V423.2h-1V424.1h-1V422.8h-1V423.9h-1V426h-1V424.6h-1V423.8h-1V424h-1V424.7h-1V422.1h-1V424.4h-1V423.3h-1V424h-1V426.5h-1V425.8h-1V424.6h-1V425.4h-1V426h-1V426.3h-1ZM465 415.5V409.2h1V409.7h1V413.3h1V413.5h1V413.1h1V412.7h1V409.7h1V412.4h1V412.4h1V413.3h1V411.9h1V412.7h1V413.4h1V411.4h1V411h1V409.4h1V411.7h1V410.9h1V410.5h1V411.2h1V409h1V409.4h1V409.4h1V409.3h1V409.9h1V410.6h1V408.1h1V408.8h1V410.4h1V410.3h1V410.1h1V411.7h1V410.9h1V411.2h1V405.4h1V410.7h1V408.5h1V409.9h1V410.6h1V413.7h1V415.5V417.5h-1V420.5h-1V420.8h-1V423.5h-1V420.3h-1V424.1h-1V420.2h-1V420h-1V419.5h-1V421.3h-1V420.4h-1V421.2h-1V422h-1V422.8h-1V420.9h-1V420.9h-1V421.7h-1V421.6h-1V421.2h-1V421.8h-1V420.2h-1V420.2h-1V419.8h-1V419.1h-1V421.3h-1V420.3h-1V420.3h-1V418.1h-1V418.1h-1V419h-1V417.7h-1V418.6h-1V418.8h-1V420.6h-1V418.1h-1V417.4h-1V417.7h-1V417.9h-1V420.9h-1V421.1h-1ZM530 415.5V412.4h1V411.7h1V412.6h1V412.1h1V412.6h1V412.4h1V413.7h1V413.4h1V413.6h1V414.3h1V414.4h1V415.5V416.6h-1V416.8h-1V417.6h-1V417.5h-1V417.6h-1V418.4h-1V418.3h-1V418.9h-1V418.5h-1V419.6h-1V418.7h-1ZM543 415.5V411.6h1V411.7h1V412h1V411.9h1V413.2h1V414h1V413.9h1V414.5h1V415.5V416.6h-1V417.1h-1V417.1h-1V417.7h-1V418.4h-1V418.9h-1V419.1h-1V419.4h-1ZM556 415.5V412.2h1V410.4h1V413.5h1V414.1h1V413.3h1V414.3h1V414h1V413.9h1V414.1h1V414.4h1V414h1V413.6h1V414h1V414h1V414.6h1V414.3h1V414.1h1V414.6h1V414.2h1V414.9h1V414.7h1V414.7h1V414.8h1V415h1V415.5V416h-1V416.2h-1V416.2h-1V416.3h-1V416.1h-1V416.6h-1V416.5h-1V416.8h-1V416.7h-1V416.5h-1V417.1h-1V417h-1V417.4h-1V417h-1V416.7h-1V417h-1V417.2h-1V417h-1V416.6h-1V417.6h-1V417.1h-1V417.4h-1V420h-1V418.7h-1ZM583 415.5V409.9h1V411.9h1V412.8h1V413.2h1V412.9h1V412.1h1V410.9h1V412.2h1V413.4h1V412.6h1V413.1h1V413.4h1V414h1V413.2h1V410.5h1V411.2h1V412.5h1V413.5h1V412.4h1V412.6h1V413.5h1V412.8h1V413.6h1V413.6h1V414.2h1V414.2h1V415.5V416.8h-1V416.9h-1V417h-1V417.5h-1V418h-1V417.6h-1V418.2h-1V418.9h-1V417.7h-1V418.4h-1V419.7h-1V420.1h-1V417.6h-1V417.2h-1V417.6h-1V418h-1V418.3h-1V417.8h-1V418.8h-1V420.3h-1V418.7h-1V418.5h-1V417.8h-1V418.3h-1V419.1h-1V420.9h-1ZM610 415.5V409.6h1V410.9h1V408.9h1V411.6h1V411.2h1V411.1h1V410.4h1V409.5h1V410.8h1V409.8h1V409.2h1V410h1V411.9h1V410.8h1V408.7h1V408.8h1V407.7h1V410.7h1V408.8h1V409.4h1V410.3h1V411.3h1V409.8h1V410.5h1V411.7h1V407.4h1V411.7h1V409h1V409.4h1V412h1V409.6h1V411.6h1V409.8h1V409.4h1V408.7h1V408.6h1V409.5h1V410.7h1V409.6h1V410.7h1V408.2h1V408.6h1V410.7h1V411.4h1V408.2h1V411.1h1V411.4h1V411.3h1V412.1h1V412.1h1V413h1V415.5V417.9h-1V418.6h-1V419.2h-1V420h-1V419.8h-1V421.2h-1V422h-1V420.6h-1V420.8h-1V422.3h-1V422.6h-1V420.1h-1V421.4h-1V420.5h-1V421.5h-1V421.9h-1V422.3h-1V421.2h-1V420.6h-1V419.7h-1V421.4h-1V419.7h-1V421.2h-1V422.3h-1V420h-1V423h-1V419.3h-1V420.3h-1V421.1h-1V419.7h-1V420.3h-1V421.4h-1V422.1h-1V420.8h-1V422.7h-1V422.1h-1V421.6h-1V420.2h-1V419.4h-1V421h-1V421.2h-1V420.9h-1V420.3h-1V420.9h-1V420.3h-1V420h-1V420.1h-1V419.4h-1V421.9h-1V420.2h-1V421.2h-1ZM662 415.5V410.1h1V411.7h1V412.6h1V413.6h1V412.7h1V413.2h1V413.9h1V413.6h1V414.2h1V413.7h1V414.6h1V414.5h1V413.9h1V414.1h1V414.5h1V414.5h1V414.3h1V414.9h1V414.6h1V414.9h1V415.5V416.1h-1V416.3h-1V416.2h-1V416.7h-1V416.5h-1V416.5h-1V417h-1V417.1h-1V416.6h-1V416.5h-1V417.1h-1V416.7h-1V417.3h-1V417.1h-1V417.3h-1V418h-1V417.6h-1V418.4h-1V418.9h-1V419.9h-1ZM687 415.5V411.4h1V409.7h1V412.3h1V411.5h1V412.2h1V410.6h1V412.1h1V410.7h1V409.1h1V410.9h1V410.3h1V407.2h1V409.3h1V407.4h1V410.9h1V410.4h1V410.1h1V409.8h1V409.8h1V409.8h1V410.7h1V411.1h1V411h1V411.7h1V409.6h1V410.3h1V411.3h1V409.1h1V410.6h1V411.2h1V410.8h1V410.6h1V408.5h1V408.7h1V411.1h1V411.1h1V409.5h1V409.2h1V412h1V411.9h1V409.1h1V410.2h1V410.9h1V411.8h1V411.1h1V411.6h1V412.1h1V411h1V410.9h1V411.2h1V411h1V411.5h1V411.4h1V410h1V409h1V411.7h1V411h1V409.4h1V411.2h1V409.8h1V411.3h1V407h1V411.1h1V410.6h1V411h1V409.1h1V409.6h1V409.5h1V410.8h1V410.6h1V409.7h1V412.1h1V409.9h1V410.9h1V409.7h1V409.4h1V410h1V411.9h1V411.3h1V409.7h1V410.8h1V410.5h1V409.4h1V411.6h1V410.4h1V410.3h1V408.7h1V410h1V411.1h1V411.3h1V408.9h1V411.5h1V409.4h1V409h1V411.6h1V409h1V409.7h1V409.2h1V412h1V411.2h1V409.7h1V411.4h1V412.4h1V412.5h1V414.4h1V415.5V416.6h-1V417.9h-1V418.5h-1V419.2h-1V420.8h-1V420.1h-1V419.2h-1V421.6h-1V421h-1V421.8h-1V419.7h-1V421.5h-1V421.8h-1V419.7h-1V421.4h-1V419.9h-1V420h-1V420.6h-1V421.5h-1V419.8h-1V420.8h-1V419.6h-1V421.1h-1V420.3h-1V420.6h-1V421.3h-1V420.2h-1V419.7h-1V420.9h-1V421.3h-1V421.3h-1V420.7h-1V420.7h-1V419.4h-1V421.1h-1V420.7h-1V420.3h-1V421.5h-1V421h-1V421.7h-1V419.9h-1V420.8h-1V419.8h-1V423.6h-1V420.3h-1V421.5h-1V419.5h-1V421.8h-1V420.6h-1V419.6h-1V421.5h-1V421h-1V420.1h-1V419.7h-1V420.2h-1V419.8h-1V419.9h-1V420h-1V418.9h-1V419.9h-1V420.5h-1V419.7h-1V420h-1V420.1h-1V420.9h-1V419.5h-1V419.2h-1V421.8h-1V421.5h-1V420h-1V419.9h-1V421.7h-1V422.1h-1V420.7h-1V420.5h-1V420.2h-1V420.3h-1V421.5h-1V419.8h-1V420.3h-1V420.9h-1V419.5h-1V419.3h-1V420.6h-1V420.3h-1V421.2h-1V420.6h-1V420.8h-1V420.6h-1V420.4h-1V419.9h-1V423.9h-1V421.4h-1V424.2h-1V420.6h-1V420h-1V421.9h-1V420h-1V419.1h-1V420.2h-1V419.3h-1V419.7h-1V418.7h-1V421.3h-1V420.2h-1ZM842 415.5V409.1h1V410.6h1V408.4h1V410.8h1V411.5h1V412.4h1V411.1h1V412.7h1V412.5h1V412.7h1V410.3h1V412.4h1V410.2h1V412.9h1V411.9h1V411.4h1V412.4h1V412.3h1V413.7h1V415.5V417.5h-1V418.7h-1V418.7h-1V419.5h-1V419h-1V417.8h-1V420.7h-1V418.9h-1V420.8h-1V418.2h-1V418.6h-1V418.2h-1V420h-1V419.2h-1V419.5h-1V419.9h-1V421.5h-1V420.3h-1V421.4h-1ZM862 415.5V410.1h1V409.6h1V411.5h1V410.9h1V411.6h1V411h1V409.2h1V410.8h1V412.4h1V409.6h1V410.1h1V410.4h1V409.9h1V411.4h1V411.2h1V411.2h1V411.3h1V412.1h1V410.8h1V410.4h1V410.8h1V409.4h1V408.9h1V411h1V411.8h1V411.1h1V412.8h1V413h1V412.3h1V413.2h1V413.8h1V415.5V417.2h-1V417.8h-1V418.6h-1V417.9h-1V418.2h-1V419.7h-1V419.6h-1V419.9h-1V421.7h-1V421.7h-1V420.7h-1V420.6h-1V420.3h-1V419h-1V419.9h-1V419.4h-1V419.5h-1V419.8h-1V420.8h-1V420.7h-1V420.3h-1V421.1h-1V418.7h-1V420.1h-1V421.3h-1V419.8h-1V419.5h-1V420.7h-1V420.2h-1V421.5h-1V420.9h-1ZM894 415.5V411.4h1V410.6h1V411.2h1V412.5h1V413.4h1V413.6h1V413.4h1V414.1h1V413.8h1V413.6h1V414.4h1V414.4h1V411.2h1V408h1V410.5h1V408.3h1V408.5h1V410h1V408.2h1V408h1V409.2h1V409.7h1V408.2h1V409h1V409.8h1V410.3h1V409.2h1V405.9h1V409.8h1V408.2h1V410.5h1V408.4h1V410.7h1V411h1V409.5h1V410.2h1V408.6h1V409.6h1V410.2h1V407.6h1V410.9h1V411.2h1V411.1h1V409.4h1V411.9h1V410.6h1V411.7h1V410.1h1V411.1h1V410.4h1V411.5h1V411.9h1V413.1h1V412.4h1V413.6h1V412.7h1V410.5h1V412.3h1V412.2h1V411.9h1V412h1V412.5h1V413.6h1V413.4h1V413.4h1V413.2h1V413.5h1V414.1h1V412.4h1V412.6h1V412.4h1V413.1h1V413.8h1V413.5h1V413.8h1V414h1V414.1h1V414.1h1V415.5V416.8h-1V416.9h-1V417h-1V417.3h-1V417.5h-1V417.4h-1V417.8h-1V418.7h-1V418.9h-1V419h-1V416.9h-1V417.5h-1V417.6h-1V417.7h-1V417.6h-1V417.7h-1V418.5h-1V419h-1V418.8h-1V418.8h-1V419.2h-1V420.1h-1V418.3h-1V417.6h-1V418.5h-1V418h-1V419.2h-1V420.3h-1V420.2h-1V419.8h-1V420.4h-1V419.4h-1V420.1h-1V419.6h-1V421.9h-1V420h-1V420.4h-1V420.6h-1V423.1h-1V420.5h-1V421.7h-1V422.8h-1V421.3h-1V421.3h-1V420.2h-1V420.1h-1V422.5h-1V420.7h-1V422.2h-1V421.3h-1V423.4h-1V421.3h-1V421h-1V420.8h-1V421.3h-1V422.5h-1V421.2h-1V422h-1V422.7h-1V422.4h-1V421.3h-1V422.6h-1V422.3h-1V420.6h-1V423h-1V420.2h-1V416.6h-1V416.6h-1V417.3h-1V417.1h-1V417h-1V417.8h-1V417.6h-1V417.7h-1V418.8h-1V419h-1V420.1h-1V419.7h-1ZM973 415.5V409.3h1V411h1V412.5h1V413.2h1V412.7h1V411.5h1V412.5h1V412.6h1V412.4h1V412.2h1V413.8h1V413.9h1V413.2h1V414.1h1V414h1V410.4h1V410.5h1V411.6h1V412.4h1V412.8h1V412.8h1V414h1V413.6h1V413.2h1V414.5h1V414.3h1V414.6h1V415.5V416.4h-1V416.5h-1V416.6h-1V417.6h-1V417.6h-1V417.2h-1V418h-1V418.1h-1V418.4h-1V419.3h-1V420h-1V420.3h-1V417h-1V416.9h-1V417.7h-1V417.4h-1V417.4h-1V418.5h-1V418.1h-1V418.6h-1V418.3h-1V419h-1V418.6h-1V417.9h-1V418.9h-1V420.2h-1V421.6h-1ZM1002 415.5V411.8h1V411.2h1V412.3h1V412.7h1V412.6h1V413.8h1V413.3h1V414.4h1V413.9h1V413.9h1V414.6h1V414.3h1V410.5h1V412.7h1V413.4h1V413.5h1V413.4h1V413.2h1V413.7h1V413.6h1V414.1h1V414.1h1V410.7h1V410.4h1V409.2h1V410.1h1V412.2h1V411.5h1V409.5h1V412.1h1V412h1V410.6h1V408.2h1V411.2h1V410.6h1V410h1V412h1V409.8h1V411.4h1V410.1h1V409.9h1V410.6h1V412.3h1V411h1V412.1h1V412h1V412.6h1V410.8h1V412.7h1V412.4h1V410h1V411.1h1V411.8h1V409h1V411h1V411.9h1V412.1h1V411.7h1V413.4h1V412.4h1V412.4h1V405.3h1V410.2h1V410.4h1V412.7h1V412.5h1V411.7h1V412.6h1V413.1h1V412.8h1V412.9h1V413.5h1V413.6h1V413.7h1V413.1h1V414.1h1V410.3h1V412.4h1V409.7h1V411.9h1V410.8h1V409.6h1V411.9h1V409.5h1V409.4h1V410.1h1V410.9h1V408.7h1V408.9h1V406.9h1V410h1V410h1V410.8h1V405.7h1V409.1h1V406.9h1V409.9h1V409.3h1V411.8h1V410.6h1V408.2h1V410.3h1V410.3h1V411.1h1V409h1V409.3h1V411h1V409.1h1V410.3h1V410.2h1V408.5h1V411h1V410.8h1V410.4h1V411.4h1V411h1V411.2h1V410.4h1V410.1h1V411.1h1V409.7h1V411.1h1V409.1h1V408.5h1V407.7h1V408.4h1V408.8h1V408.6h1V410h1V409.6h1V408.8h1V408.5h1V408.6h1V407.7h1V406.1h1V411.7h1V409.8h1V407.8h1V411.9h1V411.9h1V410.7h1V409h1V411.4h1V409.9h1V412h1V410.1h1V411.4h1V409.7h1V409.5h1V408.6h1V409.4h1V409.1h1V410.2h1V411.2h1V409.2h1V410h1V409.6h1V410.2h1V409.8h1V410h1V409.8h1V411.1h1V408h1V411.1h1V408h1V406.2h1V410.3h1V406.9h1V408.4h1V409.4h1V405.4h1V410.1h1V410.7h1V409.3h1V411.5h1V409.2h1V411h1V411.9h1V410.9h1V411h1V408.4h1V409.7h1V411.3h1V410.9h1V410.8h1V411.3h1V410.8h1V411.7h1V411.1h1V410.9h1V409.8h1V412.1h1V411.8h1V410.7h1V408.9h1V409.7h1V410.6h1V408.9h1V411.2h1V410.8h1V410.9h1V411.1h1V410h1V409.4h1V409.7h1V410.8h1V411.5h1V410h1V411.4h1V410.8h1V410.9h1V411.3h1V410.8h1V409.8h1V412.5h1V410.6h1V410.5h1V410.5h1V410h1V411.8h1V409.1h1V409.3h1V410.7h1V409.4h1V412.1h1V410.8h1V409.7h1V411.2h1V410.7h1V411.8h1V412.1h1V410.5h1V410.4h1V408.8h1V411.7h1V409.8h1V408.9h1V410.1h1V411.4h1V410.4h1V407.9h1V410.3h1V410.3h1V410.6h1V410.5h1V411.3h1V411.3h1V412h1V411.2h1V411.4h1V411.3h1V409.6h1V410.8h1V409.7h1V410.6h1V411.7h1V413.2h1V413h1V414.1h1V414.3h1V415.5V416.8h-1V417.1h-1V418.1h-1V417.8h-1V419.7h-1V420.8h-1V420.7h-1V420.5h-1V421.2h-1V419.8h-1V419.7h-1V420h-1V419.1h-1V420h-1V420h-1V420.5h-1V421h-1V420.4h-1V420.5h-1V422.1h-1V420.9h-1V420.2h-1V421.1h-1V422.2h-1V421.1h-1V419.9h-1V422.1h-1V420.8h-1V420.4h-1V419.1h-1V419.3h-1V419.8h-1V419.5h-1V420.9h-1V419.9h-1V419.6h-1V421.1h-1V420.5h-1V421.6h-1V421.6h-1V418.9h-1V420.6h-1V420.4h-1V420.6h-1V420h-1V418.9h-1V421.1h-1V419.9h-1V419.7h-1V419.9h-1V420.5h-1V419.4h-1V420.8h-1V419.9h-1V419.9h-1V421.2h-1V421.2h-1V421.4h-1V420h-1V420.8h-1V420.2h-1V420h-1V421.4h-1V420.1h-1V420.8h-1V421.9h-1V420h-1V419.4h-1V418.9h-1V420.9h-1V419.9h-1V419.7h-1V419.9h-1V420.4h-1V420.2h-1V420h-1V420.6h-1V420.1h-1V420.9h-1V422.5h-1V420h-1V420h-1V419h-1V420.3h-1V421.5h-1V420.1h-1V421.3h-1V420.7h-1V419.8h-1V424.5h-1V421.6h-1V422.6h-1V422.8h-1V420.4h-1V424.6h-1V422.8h-1V420.5h-1V422.6h-1V419.9h-1V421h-1V421h-1V421.5h-1V420.5h-1V420.6h-1V421.2h-1V421.4h-1V419.9h-1V420.7h-1V421.8h-1V421.2h-1V422.4h-1V421h-1V421.3h-1V419.6h-1V421h-1V419.2h-1V421.8h-1V419.6h-1V421.8h-1V420.5h-1V419.5h-1V419.6h-1V422.7h-1V421.1h-1V419.8h-1V423.2h-1V423.2h-1V421.8h-1V421.8h-1V422.1h-1V421.1h-1V420.8h-1V422.2h-1V421.8h-1V423.2h-1V422.7h-1V422.6h-1V421.3h-1V419.7h-1V421.2h-1V420h-1V420h-1V420.6h-1V420.1h-1V420.6h-1V419.7h-1V421.5h-1V419.9h-1V419.8h-1V422.1h-1V420.5h-1V420.6h-1V421.4h-1V420.5h-1V422.4h-1V421.6h-1V420.1h-1V421h-1V421.1h-1V422.5h-1V420.2h-1V419.5h-1V420.7h-1V421.1h-1V423.2h-1V421.8h-1V425.3h-1V421.1h-1V421.1h-1V421.2h-1V423.4h-1V422h-1V422h-1V420h-1V420.8h-1V420.9h-1V421.3h-1V419.7h-1V420.4h-1V419.9h-1V419.6h-1V421.1h-1V419h-1V420.3h-1V417h-1V417.8h-1V417.6h-1V417.4h-1V417.8h-1V418.2h-1V418.1h-1V417.8h-1V418.7h-1V419.2h-1V418.5h-1V418.5h-1V420.6h-1V420.4h-1V425.8h-1V418.5h-1V418.6h-1V417.9h-1V419h-1V418.9h-1V419.3h-1V419.8h-1V421.8h-1V419.9h-1V419.8h-1V420.9h-1V418.8h-1V418.6h-1V420h-1V418.5h-1V419h-1V419h-1V420.3h-1V419.1h-1V420.1h-1V420.9h-1V420.6h-1V419.7h-1V421.2h-1V419h-1V420.7h-1V420.1h-1V419.7h-1V423.2h-1V419.9h-1V419.2h-1V419.2h-1V420.9h-1V420h-1V419h-1V420.4h-1V421.8h-1V420.9h-1V420.8h-1V416.9h-1V417.1h-1V417.3h-1V417.3h-1V417.7h-1V417.8h-1V417.7h-1V417.8h-1V418.6h-1V420.4h-1V416.7h-1V416.5h-1V417h-1V416.8h-1V416.7h-1V417.5h-1V417.3h-1V418.2h-1V418h-1V418.3h-1V419.4h-1V419h-1Z" fill="#3a8289"/>
<path d="M296 477.5V469.8h1V470.3h1V473.9h1V469.4h1V474.6h1V473.9h1V473.4h1V474.5h1V473.2h1V475.2h1V473.2h1V473h1V473.5h1V469.1h1V472.3h1V474.3h1V473.9h1V473.2h1V473.4h1V474h1V473.9h1V473.3h1V473.1h1V473h1V475.1h1V474.6h1V475.3h1V474.7h1V474.2h1V475.2h1V473.8h1V475.5h1V473.5h1V474.6h1V475.4h1V474.1h1V474.1h1V474.6h1V475.2h1V474.9h1V475.2h1V474.7h1V475.8h1V475.4h1V474.5h1V475h1V473.7h1V474.9h1V475.8h1V474.4h1V475.4h1V474.7h1V474.7h1V475h1V474.6h1V472.6h1V474.6h1V474.2h1V475.5h1V474.3h1V475.1h1V475.8h1V475.2h1V474.8h1V475.1h1V475.8h1V475.6h1V475.3h1V474.7h1V474.3h1V473.9h1V475.4h1V474.9h1V475.5h1V475.7h1V475.6h1V474.7h1V475.2h1V473.9h1V474.6h1V472.3h1V474h1V474.3h1V475.4h1V474.9h1V474.1h1V474.1h1V471.4h1V473.6h1V474.5h1V475h1V474.5h1V475.2h1V474.8h1V474.3h1V471.9h1V474.5h1V475h1V474.9h1V473.8h1V475h1V474.9h1V474.1h1V475.1h1V473.7h1V473.8h1V473.9h1V474.9h1V474.2h1V475.1h1V474.4h1V474.3h1V474.9h1V474.5h1V475.6h1V474.5h1V475.1h1V474.8h1V475.5h1V475.5h1V475.7h1V475.6h1V475.4h1V474.8h1V476h1V475.9h1V473.9h1V474.5h1V475.2h1V475.8h1V475.1h1V474.7h1V475.3h1V475.7h1V475.5h1V475.6h1V474.9h1V475h1V475.5h1V474.9h1V475.3h1V474.8h1V475.3h1V474.2h1V474.9h1V475.8h1V475.1h1V474.8h1V474.6h1V476h1V476h1V475.8h1V475.6h1V475.9h1V474.8h1V476h1V474.9h1V474.7h1V475.4h1V475.7h1V475.4h1V475.7h1V475.8h1V475.1h1V473.3h1V474.5h1V474.2h1V475h1V475.3h1V475h1V474.1h1V473.7h1V474h1V474.3h1V474.7h1V474.6h1V475.5h1V475.7h1V475.6h1V475.5h1V475.7h1V475.1h1V475.5h1V475.1h1V475.5h1V475.8h1V475.4h1V475.3h1V475h1V475.4h1V474.3h1V475h1V474.8h1V474.8h1V475.7h1V475.1h1V475.4h1V474.8h1V476h1V475.4h1V475.3h1V475.5h1V474.9h1V475.6h1V474.7h1V475h1V475.2h1V471.8h1V474.8h1V475h1V475.7h1V476.5h1V476.7h1V476.3h1V476.6h1V476.5h1V476.4h1V476.6h1V476.7h1V476.3h1V476.8h1V476.4h1V476.3h1V476.7h1V476.5h1V476.7h1V476.4h1V476.6h1V476.7h1V476.7h1V476.3h1V476.5h1V476.8h1V476.6h1V469.4h1V467.4h1V466.5h1V471.3h1V472h1V467.5h1V467.8h1V467.8h1V466.4h1V465.9h1V470.5h1V470.3h1V465.3h1V468.1h1V470.7h1V472.5h1V470.2h1V469.7h1V472.2h1V471.1h1V469.2h1V470.3h1V468.4h1V468.5h1V470.5h1V471.2h1V464.8h1V471.6h1V472.2h1V469.9h1V472.2h1V473.7h1V473.4h1V472.4h1V470.5h1V474.3h1V473.7h1V474.3h1V473.6h1V473.7h1V474.5h1V475.1h1V475.4h1V474.5h1V475.1h1V474.8h1V475.7h1V475.1h1V475.8h1V474.5h1V473.7h1V475.8h1V475.4h1V470h1V472h1V471.5h1V469.9h1V470.1h1V470.8h1V468.5h1V471.2h1V469.5h1V471.6h1V471h1V471.5h1V467.8h1V469.1h1V463.5h1V471.4h1V468.3h1V467.7h1V464.1h1V466.9h1V468.3h1V471.6h1V470h1V470.9h1V470.5h1V469.7h1V466.3h1V466.5h1V469.4h1V470.2h1V471.4h1V471.7h1V470.6h1V470.1h1V468.5h1V470.3h1V470.2h1V471.7h1V462.2h1V472.2h1V471.8h1V468.4h1V472.3h1V472.1h1V470.3h1V470.9h1V472.8h1V473.3h1V470.2h1V469.1h1V469.3h1V472.1h1V470.3h1V469.1h1V472.6h1V468.5h1V468.3h1V469.6h1V470.6h1V468.8h1V470.6h1V465.5h1V471.7h1V471.4h1V472.6h1V471.5h1V472h1V471.9h1V469.7h1V473.5h1V473.6h1V470.4h1V472.3h1V471.1h1V473.3h1V474h1V473.7h1V473.3h1V474.6h1V474.6h1V475.9h1V473.1h1V474.8h1V474.7h1V474.6h1V475h1V474.6h1V475.8h1V475.6h1V475.8h1V475.6h1V474.6h1V475.5h1V474.4h1V475.3h1V475.4h1V475.7h1V475.2h1V475h1V475.7h1V475.8h1V475.4h1V475.8h1V475.2h1V473.8h1V475.6h1V476.1h1V475.9h1V475.8h1V475.5h1V474.5h1V474.8h1V474.2h1V475.8h1V474.8h1V475.5h1V474.4h1V475.3h1V473.7h1V475.1h1V475.4h1V475.3h1V473.9h1V474.2h1V473.1h1V473.7h1V471.4h1V473.8h1V473.6h1V474.8h1V474.8h1V474.3h1V473.6h1V473.2h1V474.3h1V474.5h1V473h1V473.8h1V473.8h1V474.3h1V470.7h1V472.6h1V474.7h1V475.1h1V474.1h1V474.9h1V473.4h1V474.6h1V475.1h1V475.3h1V475h1V475.8h1V474.7h1V475.2h1V474.8h1V474.3h1V475h1V474.7h1V475.3h1V475.3h1V475.3h1V475.6h1V473.8h1V473.9h1V475h1V475.2h1V475.2h1V474.1h1V475.4h1V474.3h1V473.9h1V473.9h1V475.1h1V475.2h1V473.6h1V475h1V474.4h1V475.5h1V475.9h1V476h1V475.8h1V475.7h1V474.6h1V474.4h1V475h1V475.5h1V475.6h1V475.6h1V475h1V474.9h1V475.3h1V475.4h1V475.9h1V474.5h1V475.3h1V474.7h1V475.5h1V475.9h1V475.9h1V475.6h1V476.1h1V475.1h1V475.6h1V475.8h1V475.8h1V475.1h1V475.3h1V476.5h1V476.5h1V476.1h1V475.8h1V475.9h1V476.2h1V475.9h1V476.2h1V475.7h1V476.5h1V475.9h1V476.3h1V476.4h1V476.5h1V476.3h1V476h1V476.4h1V475.6h1V475.9h1V476.5h1V476.5h1V476h1V475.9h1V476.4h1V476.3h1V476.1h1V476h1V476.6h1V476.5h1V476.2h1V476.6h1V476.7h1V476.1h1V476.5h1V476.4h1V474.8h1V476.6h1V476.3h1V475.8h1V476.4h1V474.8h1V475.3h1V474.8h1V475.3h1V475.9h1V475.5h1V475h1V474h1V475.7h1V475.7h1V475.3h1V474.3h1V474.8h1V475.2h1V475h1V474.8h1V475.3h1V475.9h1V474.5h1V475.8h1V474.9h1V474.5h1V475.4h1V475.4h1V473.8h1V474.4h1V473.7h1V475h1V473.8h1V474.2h1V475.4h1V474.5h1V474.3h1V475h1V473.3h1V474.9h1V474.1h1V473.4h1V474.3h1V472h1V474.2h1V475.3h1V474.3h1V475.8h1V474.9h1V475h1V474.5h1V474.9h1V474.2h1V474.3h1V474.6h1V475.5h1V473.6h1V473.6h1V475.2h1V474.1h1V474.8h1V473.2h1V473.8h1V474.6h1V473.8h1V473.9h1V468h1V475.1h1V474.2h1V474.9h1V475.4h1V474.7h1V474.3h1V475.3h1V475.3h1V474.9h1V475.4h1V475h1V474.7h1V474.4h1V474.5h1V475.5h1V474.6h1V474.6h1V475.6h1V475.7h1V475.3h1V474.6h1V474.8h1V474.5h1V475.1h1V474.2h1V473.5h1V475.3h1V475.1h1V474.9h1V474.4h1V474.7h1V474.9h1V474.2h1V474.8h1V474.3h1V474.3h1V474.9h1V465.2h1V474.7h1V472.9h1V474.9h1V473.7h1V474.3h1V473.2h1V472.7h1V474.1h1V473.7h1V473.4h1V472.9h1V474.5h1V472.8h1V472.5h1V472.6h1V469.1h1V470.3h1V463.9h1V468.2h1V469.6h1V470.8h1V469.7h1V464.5h1V472.9h1V470.2h1V470.4h1V470.8h1V472.4h1V468.6h1V471.7h1V472.8h1V471.6h1V471.6h1V470.4h1V469.6h1V470.8h1V470.7h1V470.2h1V470.4h1V469.1h1V472.6h1V472.6h1V472.3h1V473.4h1V472.5h1V470.8h1V473.4h1V471h1V471h1V473.2h1V474.4h1V472h1V474.4h1V474.8h1V472.7h1V473.7h1V473.7h1V473.7h1V474.3h1V474.2h1V474.9h1V473.7h1V473.3h1V473.3h1V474.1h1V474.1h1V475.1h1V473.8h1V475.2h1V468h1V469.7h1V471.1h1V473h1V470.5h1V471.1h1V471.4h1V470.6h1V472.7h1V471.8h1V470.8h1V472.5h1V468.3h1V469.4h1V468.1h1V471.4h1V472.5h1V470.1h1V470.2h1V469.5h1V471.2h1V470.1h1V469.7h1V473.4h1V470.6h1V472.2h1V469.3h1V471.2h1V470.9h1V471h1V470.2h1V472.5h1V469h1V468.9h1V470h1V469.2h1V471.5h1V471.5h1V473.1h1V469.3h1V473.6h1V472.9h1V473.6h1V472.6h1V469.8h1V472.8h1V471.4h1V471h1V472.9h1V470.2h1V472h1V473.2h1V468.8h1V470h1V469h1V469h1V470.4h1V470.1h1V469.2h1V471.4h1V470.6h1V470.3h1V473.3h1V470.7h1V470.7h1V472.7h1V472.6h1V473.6h1V473.7h1V472.4h1V474.7h1V473.8h1V473h1V471.7h1V473.5h1V475.4h1V475h1V475.7h1V473.8h1V475h1V475h1V474.8h1V475.1h1V475.6h1V476h1V475.1h1V475.1h1V475.7h1V475.3h1V475h1V475.5h1V475.8h1V475h1V475.6h1V474.8h1V475.8h1V476h1V475.4h1V476h1V475.9h1V475.3h1V474.7h1V475.7h1V475.7h1V474.9h1V475.3h1V475.7h1V474.9h1V475.4h1V475.5h1V475.6h1V475.1h1V474.9h1V475.8h1V474.5h1V474.8h1V474.3h1V474.4h1V475.6h1V474.5h1V474.8h1V475h1V475.3h1V475.9h1V474.3h1V475.5h1V474.4h1V473.4h1V475.7h1V475.5h1V473.8h1V475.2h1V475.6h1V474.7h1V475.4h1V475h1V475.6h1V474.2h1V474.2h1V474.7h1V474h1V474.4h1V474.4h1V475h1V474.6h1V475.2h1V474.3h1V475h1V474.1h1V475h1V475.1h1V473.9h1V474.1h1V475.3h1V475.5h1V475.1h1V475.6h1V473.8h1V474.6h1V474.2h1V474.1h1V474.3h1V474.6h1V473.9h1V475.4h1V474.5h1V475.4h1V475.1h1V475.6h1V474.8h1V474.9h1V475.6h1V474.5h1V475.1h1V475.7h1V474.3h1V474.3h1V474.8h1V474.8h1V475.3h1V473.2h1V472.8h1V474.4h1V473.4h1V473.9h1V473.2h1V473.5h1V473.5h1V473.1h1V474.2h1V472.8h1V472.5h1V474.2h1V473.9h1V475h1V474.6h1V473.7h1V472h1V472.6h1V473.8h1V473.8h1V473.6h1V472.4h1V471.7h1V473.3h1V472.5h1V473.7h1V471.9h1V474.3h1V472.3h1V471.7h1V471.9h1V473.1h1V473.3h1V465.8h1V469.8h1V466.7h1V472h1V469.4h1V469h1V470.3h1V472.7h1V471.8h1V471.9h1V471.1h1V470.7h1V471.4h1V470.6h1V471.6h1V466.4h1V471.5h1V471.2h1V471.4h1V470.9h1V472.4h1V470.5h1V472.6h1V471.2h1V471.5h1V465.2h1V473.2h1V470.5h1V473.2h1V472h1V471.6h1V472.5h1V473.7h1V473.3h1V471.8h1V471.4h1V472.6h1V469.8h1V468.3h1V472.2h1V471.3h1V471.3h1V467.3h1V472.7h1V471h1V470h1V473.5h1V474.5h1V475.9h1V476h1V477.5V479h-1V479.1h-1V480.4h-1V481.2h-1V484.9h-1V484.6h-1V482.4h-1V489.2h-1V483.6h-1V484.5h-1V483.4h-1V485.8h-1V485.1h-1V482.5h-1V483.4h-1V483.1h-1V481.6h-1V482h-1V483.1h-1V483.1h-1V482.8h-1V482.2h-1V484.2h-1V482.6h-1V488.4h-1V483.7h-1V483.4h-1V482.4h-1V484.3h-1V482.4h-1V483.8h-1V484h-1V483.6h-1V483.8h-1V488.9h-1V483.5h-1V483.7h-1V483.2h-1V484h-1V483.3h-1V483.5h-1V483.5h-1V482.6h-1V484.6h-1V485.6h-1V485.5h-1V484h-1V487.8h-1V485.1h-1V489.2h-1V482h-1V482.5h-1V483.3h-1V483h-1V482.6h-1V481.2h-1V482.8h-1V481.1h-1V482.3h-1V481.9h-1V483.3h-1V482.4h-1V481.5h-1V481.2h-1V481.2h-1V482.1h-1V482.8h-1V481.6h-1V480.6h-1V480.4h-1V481h-1V481.1h-1V482.8h-1V482.2h-1V481.2h-1V481.9h-1V481.5h-1V481.9h-1V481.4h-1V481h-1V481.3h-1V480.6h-1V482.1h-1V481.6h-1V479.8h-1V480.2h-1V480.3h-1V480.7h-1V480.6h-1V479.5h-1V479.7h-1V480.4h-1V479.4h-1V480.5h-1V480h-1V479.6h-1V480.1h-1V479.6h-1V480.4h-1V479.7h-1V480.9h-1V481h-1V480.5h-1V480.9h-1V480.8h-1V480.1h-1V481.6h-1V479.4h-1V480h-1V479.6h-1V479.7h-1V480.8h-1V481h-1V479.9h-1V480.1h-1V481.1h-1V480h-1V480.6h-1V479.8h-1V480.1h-1V479.9h-1V480.4h-1V480.9h-1V480.7h-1V480.5h-1V480.5h-1V480.7h-1V479.5h-1V480h-1V479.7h-1V480.1h-1V479.5h-1V480h-1V481.1h-1V479.7h-1V479.6h-1V481.5h-1V480.3h-1V479.8h-1V480.6h-1V479.3h-1V479.8h-1V480.1h-1V480.1h-1V480.3h-1V479.4h-1V480.6h-1V480.2h-1V480.2h-1V480.5h-1V479.4h-1V480.2h-1V479.8h-1V479.4h-1V479.6h-1V479.7h-1V479.9h-1V479.5h-1V479.7h-1V480.1h-1V479.5h-1V479.5h-1V480.1h-1V479.8h-1V479.3h-1V479.1h-1V479.4h-1V479.2h-1V479.4h-1V479.9h-1V479.4h-1V480h-1V479.2h-1V479.5h-1V479.9h-1V479.9h-1V479.2h-1V479.8h-1V479.8h-1V479.3h-1V479.6h-1V479.9h-1V480.2h-1V480.1h-1V480.1h-1V481.5h-1V479.3h-1V479.9h-1V479.5h-1V481.2h-1V482.2h-1V481.5h-1V481h-1V480.5h-1V482.5h-1V481.4h-1V481.5h-1V482.1h-1V482.3h-1V484.3h-1V484.4h-1V482h-1V484.4h-1V483.9h-1V483.8h-1V485.9h-1V484.6h-1V484.7h-1V486.4h-1V486h-1V485.2h-1V486.3h-1V482.7h-1V482.8h-1V483.9h-1V482.4h-1V483.7h-1V483.2h-1V482.6h-1V484.7h-1V483h-1V481.3h-1V482.5h-1V482h-1V484.9h-1V482.3h-1V484.2h-1V483.6h-1V485.5h-1V485.4h-1V485.2h-1V485.1h-1V482.5h-1V484.2h-1V483.5h-1V484.3h-1V483.9h-1V485.7h-1V483.1h-1V484.1h-1V482.2h-1V484.8h-1V484.2h-1V483.5h-1V484.9h-1V484.8h-1V484.3h-1V483.3h-1V484.4h-1V486.7h-1V485h-1V486h-1V482.5h-1V484.3h-1V483.3h-1V482.7h-1V484.4h-1V483.4h-1V484.1h-1V484.1h-1V482h-1V484.3h-1V485h-1V486.4h-1V479.8h-1V480.9h-1V480.1h-1V480.8h-1V480.5h-1V481.4h-1V482.4h-1V481.2h-1V480.4h-1V480.7h-1V480.5h-1V481.3h-1V481h-1V481.1h-1V482.3h-1V480.4h-1V481h-1V482.9h-1V481.3h-1V482.3h-1V483.3h-1V483.9h-1V482.1h-1V483.5h-1V482.8h-1V482.1h-1V482.9h-1V482.3h-1V483.1h-1V485.8h-1V484.2h-1V484.1h-1V484.3h-1V484.3h-1V485.3h-1V484.1h-1V483.2h-1V483.1h-1V482.3h-1V483.5h-1V486h-1V482.5h-1V484.6h-1V484.8h-1V484.5h-1V482.9h-1V490.2h-1V485.3h-1V484.6h-1V485.4h-1V487.5h-1V488.3h-1V485.4h-1V485.4h-1V483.3h-1V482.3h-1V482.3h-1V480.4h-1V481.6h-1V481.7h-1V481h-1V480.8h-1V481.8h-1V481.4h-1V480.8h-1V481.5h-1V480.6h-1V481.8h-1V480.4h-1V490.1h-1V480h-1V480.7h-1V480.6h-1V480h-1V480.8h-1V479.9h-1V480.2h-1V480.4h-1V480h-1V480.1h-1V479.8h-1V481.7h-1V480.4h-1V479.9h-1V480.4h-1V480.3h-1V480.3h-1V479.9h-1V479.4h-1V479.4h-1V480.3h-1V480.3h-1V479.6h-1V480.4h-1V480.4h-1V480.2h-1V480.1h-1V479.7h-1V479.8h-1V479.8h-1V479.8h-1V480.6h-1V480.2h-1V480h-1V480h-1V480.5h-1V480.1h-1V486.8h-1V481.4h-1V481.3h-1V480.5h-1V481.4h-1V481h-1V480h-1V480.6h-1V480h-1V481.2h-1V481h-1V479.7h-1V480.5h-1V480.6h-1V480.4h-1V480.1h-1V480.4h-1V480.1h-1V480h-1V479.4h-1V480.3h-1V479.7h-1V480.9h-1V481.9h-1V480.8h-1V481.5h-1V481h-1V480.2h-1V481.7h-1V480.3h-1V480.6h-1V480.4h-1V479.9h-1V480.7h-1V481.3h-1V480.1h-1V481.6h-1V480.3h-1V481.1h-1V479.8h-1V479.7h-1V480.3h-1V480.3h-1V479.4h-1V480.2h-1V479.4h-1V479.6h-1V480.2h-1V480.1h-1V479.6h-1V480.1h-1V480.4h-1V480h-1V479.6h-1V479.7h-1V481h-1V480.1h-1V479.7h-1V479.3h-1V479.5h-1V480.1h-1V479.8h-1V480.1h-1V478.7h-1V479.1h-1V478.7h-1V478.5h-1V480.3h-1V478.7h-1V478.5h-1V478.9h-1V478.4h-1V478.4h-1V478.8h-1V478.4h-1V478.4h-1V478.9h-1V478.8h-1V478.7h-1V478.6h-1V479.1h-1V478.9h-1V478.6h-1V478.6h-1V479.1h-1V479.3h-1V478.8h-1V478.9h-1V478.7h-1V478.6h-1V478.6h-1V478.7h-1V479.2h-1V478.6h-1V479.3h-1V478.8h-1V479h-1V478.7h-1V479.2h-1V479.1h-1V478.8h-1V478.5h-1V478.6h-1V479.8h-1V479.7h-1V479.5h-1V479.2h-1V479.6h-1V479.8h-1V479h-1V479.5h-1V479.2h-1V479.4h-1V479.8h-1V480.1h-1V479.5h-1V479.8h-1V479.3h-1V479.4h-1V479.6h-1V480h-1V480h-1V479.4h-1V479.7h-1V479.7h-1V480h-1V480.5h-1V480.2h-1V479.5h-1V479.2h-1V479.1h-1V479.2h-1V479.4h-1V480.4h-1V480h-1V481.1h-1V479.7h-1V479.9h-1V481.2h-1V480.8h-1V480.6h-1V480h-1V480.7h-1V479.7h-1V480h-1V479.8h-1V480.7h-1V481h-1V479.4h-1V479.8h-1V479.7h-1V479.9h-1V480.3h-1V480.1h-1V480.6h-1V480.3h-1V479.8h-1V480.3h-1V479.3h-1V480.1h-1V479.9h-1V479.9h-1V480.4h-1V481.1h-1V480.2h-1V480.7h-1V480.2h-1V480.4h-1V481.6h-1V484.1h-1V480.7h-1V481.4h-1V480.9h-1V481.8h-1V480.4h-1V481h-1V481.9h-1V481h-1V480.9h-1V480.4h-1V480.1h-1V481.4h-1V482h-1V482.5h-1V481.6h-1V481.8h-1V480.9h-1V481.3h-1V479.9h-1V479.9h-1V480.1h-1V481.1h-1V479.9h-1V480.5h-1V479.4h-1V480.1h-1V479.5h-1V481.2h-1V480.1h-1V480.1h-1V479.3h-1V479.2h-1V479.3h-1V478.9h-1V479.6h-1V481.3h-1V479.6h-1V479.2h-1V479.6h-1V479.4h-1V479.2h-1V479.9h-1V479.7h-1V479.5h-1V479.7h-1V480h-1V480.7h-1V479.7h-1V480.2h-1V479.6h-1V479.4h-1V479.6h-1V479.3h-1V480.5h-1V480.1h-1V480.5h-1V480.5h-1V480.2h-1V481h-1V479.3h-1V480.4h-1V480.2h-1V481.7h-1V481.5h-1V481.4h-1V481.8h-1V483.7h-1V482.6h-1V484h-1V482.3h-1V482.4h-1V484.6h-1V483.2h-1V483.2h-1V483.2h-1V482.9h-1V483.4h-1V483.5h-1V489h-1V484.3h-1V486.3h-1V484.4h-1V485.6h-1V486h-1V485.5h-1V483.3h-1V485.9h-1V484.5h-1V483.1h-1V485.5h-1V486.1h-1V484.2h-1V482.5h-1V482.1h-1V484.5h-1V483.2h-1V483.5h-1V483.6h-1V486h-1V483.4h-1V483.5h-1V492.7h-1V483.4h-1V485h-1V484.6h-1V486.4h-1V485.1h-1V484.8h-1V483.3h-1V484.4h-1V484.6h-1V485.5h-1V488h-1V488.3h-1V484.9h-1V484.6h-1V484.2h-1V485.3h-1V484h-1V486.2h-1V489.2h-1V491.3h-1V489.1h-1V486.4h-1V484.2h-1V489.6h-1V486h-1V487.1h-1V483.3h-1V484.2h-1V484.1h-1V485.8h-1V484.8h-1V485.9h-1V483.9h-1V484.4h-1V484.8h-1V483.5h-1V483.3h-1V485.5h-1V479.7h-1V479.3h-1V480.7h-1V480.3h-1V479.5h-1V480h-1V479.6h-1V480.3h-1V480h-1V480.3h-1V479.9h-1V480.2h-1V480.9h-1V481.4h-1V481.6h-1V480.8h-1V481.5h-1V480.9h-1V484.6h-1V482.8h-1V481.6h-1V482.1h-1V482.8h-1V484.6h-1V483.2h-1V483.3h-1V489.5h-1V484.5h-1V484h-1V486.3h-1V486.2h-1V484.9h-1V485.3h-1V483.8h-1V483.2h-1V484.6h-1V484.7h-1V483.3h-1V484.2h-1V486.2h-1V488.7h-1V485.4h-1V484.7h-1V488.6h-1V488.4h-1V487.3h-1V487.2h-1V486.6h-1V484h-1V484.4h-1V485.7h-1V487.1h-1V485.6h-1V478.3h-1V478.3h-1V478.5h-1V478.6h-1V478.4h-1V478.3h-1V478.5h-1V478.6h-1V478.4h-1V478.5h-1V478.3h-1V478.7h-1V478.6h-1V478.3h-1V478.6h-1V478.4h-1V478.4h-1V478.5h-1V478.4h-1V478.4h-1V478.7h-1V478.4h-1V478.4h-1V479.2h-1V480.3h-1V480.3h-1V483.7h-1V479.7h-1V480h-1V480.4h-1V479.3h-1V480h-1V479.5h-1V479.8h-1V479.7h-1V479.2h-1V480.1h-1V479.7h-1V479.9h-1V479.2h-1V479.9h-1V480h-1V479.9h-1V480.2h-1V479.6h-1V479.9h-1V479.6h-1V479.7h-1V479.4h-1V479.4h-1V480h-1V479.7h-1V480h-1V479.3h-1V479.5h-1V479.6h-1V479.6h-1V479.7h-1V480.5h-1V480.1h-1V480.4h-1V480.8h-1V481.1h-1V480.7h-1V479.9h-1V479.8h-1V480.1h-1V480.6h-1V480.5h-1V481.5h-1V479.9h-1V479.5h-1V479.4h-1V479.6h-1V479.4h-1V479.4h-1V480.1h-1V480h-1V479.2h-1V480.1h-1V479.4h-1V479.5h-1V479.2h-1V479h-1V479.2h-1V480.2h-1V480.1h-1V479.9h-1V479.3h-1V480.2h-1V480.4h-1V480.1h-1V480.5h-1V480.1h-1V480h-1V479.6h-1V480.3h-1V480h-1V479.6h-1V479.8h-1V479.6h-1V479.9h-1V480.2h-1V480h-1V479.3h-1V479.7h-1V480.4h-1V480.5h-1V479.2h-1V479.2h-1V480.1h-1V479.7h-1V479.5h-1V479.3h-1V479.6h-1V479.6h-1V479.9h-1V480h-1V480.2h-1V479.6h-1V480.3h-1V480.3h-1V480.6h-1V480.3h-1V480.1h-1V480.7h-1V480.1h-1V480.8h-1V481.1h-1V481h-1V480h-1V480.3h-1V480.2h-1V480.2h-1V481.2h-1V480.1h-1V480.2h-1V480.2h-1V481.9h-1V480.6h-1V480.1h-1V479.9h-1V480.5h-1V480h-1V480.4h-1V481.4h-1V483.2h-1V480.9h-1V480.8h-1V480h-1V479.8h-1V480.5h-1V480.7h-1V482.2h-1V480.6h-1V480.7h-1V480.1h-1V480.2h-1V479.6h-1V479.6h-1V479.8h-1V480.2h-1V479.9h-1V481.1h-1V480.7h-1V480.8h-1V479.8h-1V479.6h-1V479.2h-1V479.5h-1V479.9h-1V480h-1V479.5h-1V480h-1V480.4h-1V479.7h-1V480.5h-1V480.5h-1V482.3h-1V480.4h-1V480.2h-1V480.1h-1V480.3h-1V479.9h-1V480.6h-1V479.4h-1V479.9h-1V481.2h-1V479.9h-1V480.4h-1V479.7h-1V479.5h-1V480.2h-1V479.7h-1V480.3h-1V480h-1V480.6h-1V481h-1V480.7h-1V480h-1V480.4h-1V481.1h-1V479.9h-1V480.8h-1V480.1h-1V480.8h-1V480.2h-1V479.9h-1V480.6h-1V480h-1V481.7h-1V481.4h-1V481.2h-1V480.9h-1V481.2h-1V481.7h-1V481.7h-1V481.4h-1V480.9h-1V482.8h-1V485.9h-1V481.1h-1V481.7h-1V481.3h-1V480.2h-1V481.4h-1V480.3h-1V481.3h-1V480.9h-1V480.7h-1V485.6h-1V481.3h-1V484.4h-1V485.2h-1Z" fill="#3a8289"/>
<rect x="279.8" y="516.5" width="0.7" height="45.0" fill="#333" opacity="0.69"/>
<rect x="283.1" y="516.5" width="0.7" height="45.0" fill="#333" opacity="0.46"/>
<rect x="284.9" y="532.8" width="1" height="13.4" fill="#444" opacity="0.45"/>
<rect x="286.4" y="516.5" width="0.7" height="45.0" fill="#333" opacity="0.06"/>
<rect x="289.6" y="516.5" width="0.7" height="45.0" fill="#333" opacity="0.46"/>
<rect x="291.7" y="534.3" width="1" height="10.3" fill="#444" opacity="0.45"/>
<rect x="292.9" y="516.5" width="0.7" height="45.0" fill="#333" opacity="0.69"/>
<rect x="294.6" y="532.7" width="1" height="13.6" fill="#444" opacity="0.45"/>
<rect x="298.1" y="532.5" width="1" height="14.0" fill="#444" opacity="0.45"/>
<rect x="299.4" y="516.5" width="0.7" height="45.0" fill="#333" opacity="0.25"/>
<rect x="302.6" y="516.5" width="0.7" height="45.0" fill="#333" opacity="0.69"/>
<rect x="305.9" y="516.5" width="0.7" height="45.0" fill="#333" opacity="0.69"/>
<rect x="309.1" y="516.5" width="0.7" height="45.0" fill="#333" opacity="0.46"/>
<rect x="311.5" y="537.1" width="1" height="4.7" fill="#444" opacity="0.45"/>
<rect x="312.4" y="516.5" width="0.7" height="45.0" fill="#333" opacity="0.05"/>
<rect x="315.6" y="516.5" width="0.7" height="45.0" fill="#333" opacity="0.11"/>
<rect x="318.9" y="516.5" width="0.7" height="45.0" fill="#333" opacity="0.40"/>
<rect x="321.4" y="533.3" width="1" height="12.4" fill="#444" opacity="0.45"/>
<rect x="322.2" y="516.5" width="0.7" height="45.0" fill="#333" opacity="0.05"/>
<rect x="323.8" y="535.9" width="1" height="7.3" fill="#444" opacity="0.45"/>
<rect x="325.4" y="516.5" width="0.7" height="45.0" fill="#333" opacity="0.06"/>
<rect x="328.7" y="516.5" width="0.7" height="45.0" fill="#333" opacity="0.69"/>
<rect x="331.9" y="516.5" width="0.7" height="45.0" fill="#333" opacity="0.40"/>
<rect x="335.2" y="516.5" width="0.7" height="45.0" fill="#333" opacity="0.25"/>
<rect x="341.7" y="516.5" width="0.7" height="45.0" fill="#333" opacity="0.69"/>
<rect x="344.9" y="516.5" width="0.7" height="45.0" fill="#333" opacity="0.40"/>
<rect x="347.5" y="533.3" width="1" height="12.4" fill="#444" opacity="0.45"/>
<rect x="351.4" y="516.5" width="0.7" height="45.0" fill="#333" opacity="0.06"/>
<rect x="354.7" y="516.5" width="0.7" height="45.0" fill="#333" opacity="0.46"/>
<rect x="358.0" y="516.5" width="0.7" height="45.0" fill="#333" opacity="0.69"/>
<rect x="364.5" y="516.5" width="0.7" height="45.0" fill="#333" opacity="0.69"/>
<rect x="367.7" y="516.5" width="0.7" height="45.0" fill="#333" opacity="0.69"/>
<rect x="370.0" y="534.3" width="1" height="10.3" fill="#444" opacity="0.45"/>
<rect x="371.0" y="516.5" width="0.7" height="45.0" fill="#333" opacity="0.69"/>
<rect x="373.4" y="532.6" width="1" height="13.9" fill="#444" opacity="0.45"/>
<rect x="374.2" y="516.5" width="0.7" height="45.0" fill="#333" opacity="0.05"/>
<rect x="377.5" y="516.5" width="0.7" height="45.0" fill="#333" opacity="0.05"/>
<rect x="380.7" y="516.5" width="0.7" height="45.0" fill="#333" opacity="0.05"/>
<rect x="384.0" y="516.5" width="0.7" height="45.0" fill="#333" opacity="0.86"/>
<rect x="386.4" y="537.0" width="1" height="4.9" fill="#444" opacity="0.45"/>
<rect x="387.2" y="516.5" width="0.7" height="45.0" fill="#333" opacity="0.25"/>
<rect x="393.8" y="516.5" width="0.7" height="45.0" fill="#333" opacity="0.69"/>
<rect x="396.1" y="535.1" width="1" height="8.8" fill="#444" opacity="0.45"/>
<rect x="397.0" y="516.5" width="0.7" height="45.0" fill="#333" opacity="0.86"/>
<rect x="400.3" y="516.5" width="0.7" height="45.0" fill="#333" opacity="0.46"/>
<rect x="401.9" y="532.9" width="1" height="13.2" fill="#444" opacity="0.45"/>
<rect x="403.5" y="516.5" width="0.7" height="45.0" fill="#333" opacity="0.11"/>
<rect x="406.8" y="516.5" width="0.7" height="45.0" fill="#333" opacity="0.69"/>
<rect x="410.0" y="516.5" width="0.7" height="45.0" fill="#333" opacity="0.86"/>
<rect x="412.4" y="536.5" width="1" height="6.1" fill="#444" opacity="0.45"/>
<rect x="413.3" y="516.5" width="0.7" height="45.0" fill="#333" opacity="0.46"/>
<rect x="415.8" y="537.4" width="1" height="4.3" fill="#444" opacity="0.45"/>
<rect x="416.5" y="516.5" width="0.7" height="45.0" fill="#333" opacity="0.46"/>
<rect x="423.0" y="516.5" width="0.7" height="45.0" fill="#333" opacity="0.40"/>
<rect x="426.3" y="516.5" width="0.7" height="45.0" fill="#333" opacity="0.06"/>
<rect x="429.5" y="516.5" width="0.7" height="45.0" fill="#333" opacity="0.06"/>
<rect x="431.2" y="533.3" width="1" height="12.4" fill="#444" opacity="0.45"/>
<rect x="432.8" y="516.5" width="0.7" height="45.0" fill="#333" opacity="0.06"/>
<rect x="436.1" y="516.5" width="0.7" height="45.0" fill="#333" opacity="0.40"/>
<rect x="437.8" y="535.2" width="1" height="8.5" fill="#444" opacity="0.45"/>
<rect x="439.3" y="516.5" width="0.7" height="45.0" fill="#333" opacity="0.06"/>
<rect x="442.6" y="516.5" width="0.7" height="45.0" fill="#333" opacity="0.69"/>
<rect x="444.2" y="536.8" width="1" height="5.4" fill="#444" opacity="0.45"/>
<rect x="445.8" y="516.5" width="0.7" height="45.0" fill="#333" opacity="0.69"/>
<rect x="449.1" y="516.5" width="0.7" height="45.0" fill="#333" opacity="0.40"/>
<rect x="450.7" y="535.4" width="1" height="8.3" fill="#444" opacity="0.45"/>
<rect x="452.3" y="516.5" width="0.7" height="45.0" fill="#333" opacity="0.05"/>
<rect x="455.6" y="516.5" width="0.7" height="45.0" fill="#333" opacity="0.11"/>
<rect x="458.8" y="516.5" width="0.7" height="45.0" fill="#333" opacity="0.06"/>
<rect x="462.1" y="516.5" width="0.7" height="45.0" fill="#333" opacity="0.69"/>
<rect x="464.1" y="533.4" width="1" height="12.3" fill="#444" opacity="0.45"/>
<rect x="465.3" y="516.5" width="0.7" height="45.0" fill="#333" opacity="0.25"/>
<rect x="467.0" y="533.0" width="1" height="13.0" fill="#444" opacity="0.45"/>
<rect x="468.6" y="516.5" width="0.7" height="45.0" fill="#333" opacity="0.06"/>
<rect x="471.9" y="516.5" width="0.7" height="45.0" fill="#333" opacity="0.46"/>
<rect x="475.1" y="516.5" width="0.7" height="45.0" fill="#333" opacity="0.69"/>
<rect x="478.4" y="516.5" width="0.7" height="45.0" fill="#333" opacity="0.05"/>
<rect x="481.6" y="516.5" width="0.7" height="45.0" fill="#333" opacity="0.05"/>
<rect x="484.9" y="516.5" width="0.7" height="45.0" fill="#333" opacity="0.05"/>
<rect x="488.1" y="516.5" width="0.7" height="45.0" fill="#333" opacity="0.40"/>
<rect x="493.8" y="532.6" width="1" height="13.7" fill="#444" opacity="0.45"/>
<rect x="497.9" y="516.5" width="0.7" height="45.0" fill="#333" opacity="0.25"/>
<rect x="501.1" y="516.5" width="0.7" height="45.0" fill="#333" opacity="0.69"/>
<rect x="504.4" y="516.5" width="0.7" height="45.0" fill="#333" opacity="0.46"/>
<rect x="506.6" y="532.9" width="1" height="13.3" fill="#444" opacity="0.45"/>
<rect x="507.7" y="516.5" width="0.7" height="45.0" fill="#333" opacity="0.46"/>
<rect x="510.9" y="516.5" width="0.7" height="45.0" fill="#333" opacity="0.06"/>
<rect x="514.2" y="516.5" width="0.7" height="45.0" fill="#333" opacity="0.40"/>
<rect x="517.4" y="516.5" width="0.7" height="45.0" fill="#333" opacity="0.69"/>
<rect x="523.9" y="516.5" width="0.7" height="45.0" fill="#333" opacity="0.06"/>
<rect x="525.6" y="534.0" width="1" height="10.9" fill="#444" opacity="0.45"/>
<rect x="527.2" y="516.5" width="0.7" height="45.0" fill="#333" opacity="0.86"/>
<rect x="530.4" y="516.5" width="0.7" height="45.0" fill="#333" opacity="0.25"/>
<rect x="532.6" y="534.9" width="1" height="9.2" fill="#444" opacity="0.45"/>
<rect x="533.7" y="516.5" width="0.7" height="45.0" fill="#333" opacity="0.11"/>
<rect x="535.3" y="534.0" width="1" height="11.0" fill="#444" opacity="0.45"/>
<rect x="536.9" y="516.5" width="0.7" height="45.0" fill="#333" opacity="0.11"/>
<rect x="540.2" y="516.5" width="0.7" height="45.0" fill="#333" opacity="0.40"/>
<rect x="543.4" y="516.5" width="0.7" height="45.0" fill="#333" opacity="0.69"/>
<rect x="549.2" y="535.5" width="1" height="8.0" fill="#444" opacity="0.45"/>
<rect x="553.2" y="516.5" width="0.7" height="45.0" fill="#333" opacity="0.69"/>
<rect x="555.5" y="537.3" width="1" height="4.3" fill="#444" opacity="0.45"/>
<rect x="556.5" y="516.5" width="0.7" height="45.0" fill="#333" opacity="0.69"/>
<rect x="559.7" y="516.5" width="0.7" height="45.0" fill="#333" opacity="0.05"/>
<rect x="566.2" y="516.5" width="0.7" height="45.0" fill="#333" opacity="0.69"/>
<rect x="571.1" y="533.0" width="1" height="12.9" fill="#444" opacity="0.45"/>
<rect x="572.7" y="516.5" width="0.7" height="45.0" fill="#333" opacity="0.69"/>
<rect x="576.0" y="516.5" width="0.7" height="45.0" fill="#333" opacity="0.05"/>
<rect x="579.2" y="516.5" width="0.7" height="45.0" fill="#333" opacity="0.40"/>
<rect x="581.0" y="533.8" width="1" height="11.4" fill="#444" opacity="0.45"/>
<rect x="582.5" y="516.5" width="0.7" height="45.0" fill="#333" opacity="0.06"/>
<rect x="585.8" y="516.5" width="0.7" height="45.0" fill="#333" opacity="0.25"/>
<rect x="589.0" y="516.5" width="0.7" height="45.0" fill="#333" opacity="0.46"/>
<rect x="591.5" y="534.6" width="1" height="9.8" fill="#444" opacity="0.45"/>
<rect x="592.3" y="516.5" width="0.7" height="45.0" fill="#333" opacity="0.69"/>
<rect x="598.8" y="516.5" width="0.7" height="45.0" fill="#333" opacity="0.46"/>
<rect x="602.0" y="516.5" width="0.7" height="45.0" fill="#333" opacity="0.69"/>
<rect x="604.6" y="534.4" width="1" height="10.1" fill="#444" opacity="0.45"/>
<rect x="605.3" y="516.5" width="0.7" height="45.0" fill="#333" opacity="0.69"/>
<rect x="608.5" y="516.5" width="0.7" height="45.0" fill="#333" opacity="0.25"/>
<rect x="611.8" y="516.5" width="0.7" height="45.0" fill="#333" opacity="0.05"/>
<rect x="615.0" y="516.5" width="0.7" height="45.0" fill="#333" opacity="0.06"/>
<rect x="618.3" y="516.5" width="0.7" height="45.0" fill="#333" opacity="0.40"/>
<rect x="620.1" y="535.7" width="1" height="7.5" fill="#444" opacity="0.45"/>
<rect x="621.6" y="516.5" width="0.7" height="45.0" fill="#333" opacity="0.46"/>
<rect x="624.8" y="516.5" width="0.7" height="45.0" fill="#333" opacity="0.46"/>
<rect x="628.1" y="516.5" width="0.7" height="45.0" fill="#333" opacity="0.06"/>
<rect x="631.3" y="516.5" width="0.7" height="45.0" fill="#333" opacity="0.69"/>
<rect x="634.6" y="516.5" width="0.7" height="45.0" fill="#333" opacity="0.46"/>
<rect x="637.8" y="516.5" width="0.7" height="45.0" fill="#333" opacity="0.69"/>
<rect x="641.1" y="516.5" width="0.7" height="45.0" fill="#333" opacity="0.05"/>
<rect x="643.6" y="536.1" width="1" height="6.9" fill="#444" opacity="0.45"/>
<rect x="644.3" y="516.5" width="0.7" height="45.0" fill="#333" opacity="0.69"/>
<rect x="647.6" y="516.5" width="0.7" height="45.0" fill="#333" opacity="0.11"/>
<rect x="650.8" y="516.5" width="0.7" height="45.0" fill="#333" opacity="0.06"/>
<rect x="654.1" y="516.5" width="0.7" height="45.0" fill="#333" opacity="0.11"/>
<rect x="657.3" y="516.5" width="0.7" height="45.0" fill="#333" opacity="0.86"/>
<rect x="663.9" y="516.5" width="0.7" height="45.0" fill="#333" opacity="0.25"/>
<rect x="667.1" y="516.5" width="0.7" height="45.0" fill="#333" opacity="0.11"/>
<rect x="670.4" y="516.5" width="0.7" height="45.0" fill="#333" opacity="0.69"/>
<rect x="673.6" y="516.5" width="0.7" height="45.0" fill="#333" opacity="0.06"/>
<rect x="678.7" y="532.7" width="1" height="13.7" fill="#444" opacity="0.45"/>
<rect x="680.1" y="516.5" width="0.7" height="45.0" fill="#333" opacity="0.25"/>
<rect x="683.4" y="516.5" width="0.7" height="45.0" fill="#333" opacity="0.69"/>
<rect x="686.6" y="516.5" width="0.7" height="45.0" fill="#333" opacity="0.69"/>
<rect x="689.9" y="516.5" width="0.7" height="45.0" fill="#333" opacity="0.11"/>
<rect x="693.1" y="516.5" width="0.7" height="45.0" fill="#333" opacity="0.25"/>
<rect x="696.4" y="516.5" width="0.7" height="45.0" fill="#333" opacity="0.40"/>
<rect x="699.7" y="516.5" width="0.7" height="45.0" fill="#333" opacity="0.69"/>
<rect x="702.9" y="516.5" width="0.7" height="45.0" fill="#333" opacity="0.46"/>
<rect x="704.6" y="534.0" width="1" height="11.0" fill="#444" opacity="0.45"/>
<rect x="706.2" y="516.5" width="0.7" height="45.0" fill="#333" opacity="0.69"/>
<rect x="709.4" y="516.5" width="0.7" height="45.0" fill="#333" opacity="0.69"/>
<rect x="712.7" y="516.5" width="0.7" height="45.0" fill="#333" opacity="0.69"/>
<rect x="715.9" y="516.5" width="0.7" height="45.0" fill="#333" opacity="0.05"/>
<rect x="717.6" y="533.6" width="1" height="11.9" fill="#444" opacity="0.45"/>
<rect x="719.2" y="516.5" width="0.7" height="45.0" fill="#333" opacity="0.11"/>
<rect x="722.4" y="516.5" width="0.7" height="45.0" fill="#333" opacity="0.69"/>
<rect x="725.7" y="516.5" width="0.7" height="45.0" fill="#333" opacity="0.06"/>
<rect x="728.9" y="516.5" width="0.7" height="45.0" fill="#333" opacity="0.46"/>
<rect x="730.5" y="534.3" width="1" height="10.4" fill="#444" opacity="0.45"/>
<rect x="732.2" y="516.5" width="0.7" height="45.0" fill="#333" opacity="0.11"/>
<rect x="734.7" y="532.5" width="1" height="14.0" fill="#444" opacity="0.45"/>
<rect x="735.5" y="516.5" width="0.7" height="45.0" fill="#333" opacity="0.86"/>
<rect x="737.5" y="533.9" width="1" height="11.3" fill="#444" opacity="0.45"/>
<rect x="738.7" y="516.5" width="0.7" height="45.0" fill="#333" opacity="0.25"/>
<rect x="742.0" y="516.5" width="0.7" height="45.0" fill="#333" opacity="0.69"/>
<rect x="745.2" y="516.5" width="0.7" height="45.0" fill="#333" opacity="0.06"/>
<rect x="748.5" y="516.5" width="0.7" height="45.0" fill="#333" opacity="0.86"/>
<rect x="755.0" y="516.5" width="0.7" height="45.0" fill="#333" opacity="0.05"/>
<rect x="758.2" y="516.5" width="0.7" height="45.0" fill="#333" opacity="0.06"/>
<rect x="761.5" y="516.5" width="0.7" height="45.0" fill="#333" opacity="0.40"/>
<rect x="763.8" y="533.4" width="1" height="12.3" fill="#444" opacity="0.45"/>
<rect x="764.7" y="516.5" width="0.7" height="45.0" fill="#333" opacity="0.25"/>
<rect x="768.0" y="516.5" width="0.7" height="45.0" fill="#333" opacity="0.25"/>
<rect x="769.6" y="534.8" width="1" height="9.5" fill="#444" opacity="0.45"/>
<rect x="771.2" y="516.5" width="0.7" height="45.0" fill="#333" opacity="0.46"/>
<rect x="774.5" y="516.5" width="0.7" height="45.0" fill="#333" opacity="0.69"/>
<rect x="777.8" y="516.5" width="0.7" height="45.0" fill="#333" opacity="0.11"/>
<rect x="781.0" y="516.5" width="0.7" height="45.0" fill="#333" opacity="0.69"/>
<rect x="784.3" y="516.5" width="0.7" height="45.0" fill="#333" opacity="0.11"/>
<rect x="787.5" y="516.5" width="0.7" height="45.0" fill="#333" opacity="0.40"/>
<rect x="790.8" y="516.5" width="0.7" height="45.0" fill="#333" opacity="0.11"/>
<rect x="793.0" y="536.7" width="1" height="5.7" fill="#444" opacity="0.45"/>
<rect x="794.0" y="516.5" width="0.7" height="45.0" fill="#333" opacity="0.46"/>
<rect x="796.5" y="533.5" width="1" height="11.9" fill="#444" opacity="0.45"/>
<rect x="797.3" y="516.5" width="0.7" height="45.0" fill="#333" opacity="0.05"/>
<rect x="799.2" y="532.8" width="1" height="13.4" fill="#444" opacity="0.45"/>
<rect x="800.5" y="516.5" width="0.7" height="45.0" fill="#333" opacity="0.69"/>
<rect x="802.1" y="533.5" width="1" height="12.0" fill="#444" opacity="0.45"/>
<rect x="803.8" y="516.5" width="0.7" height="45.0" fill="#333" opacity="0.06"/>
<rect x="806.2" y="532.7" width="1" height="13.7" fill="#444" opacity="0.45"/>
<rect x="807.0" y="516.5" width="0.7" height="45.0" fill="#333" opacity="0.69"/>
<rect x="810.3" y="516.5" width="0.7" height="45.0" fill="#333" opacity="0.69"/>
<rect x="813.6" y="516.5" width="0.7" height="45.0" fill="#333" opacity="0.40"/>
<rect x="816.8" y="516.5" width="0.7" height="45.0" fill="#333" opacity="0.11"/>
<rect x="819.1" y="535.1" width="1" height="8.9" fill="#444" opacity="0.45"/>
<rect x="820.1" y="516.5" width="0.7" height="45.0" fill="#333" opacity="0.25"/>
<rect x="826.6" y="516.5" width="0.7" height="45.0" fill="#333" opacity="0.40"/>
<rect x="829.8" y="516.5" width="0.7" height="45.0" fill="#333" opacity="0.06"/>
<rect x="833.1" y="516.5" width="0.7" height="45.0" fill="#333" opacity="0.46"/>
<rect x="836.3" y="516.5" width="0.7" height="45.0" fill="#333" opacity="0.11"/>
<rect x="839.6" y="516.5" width="0.7" height="45.0" fill="#333" opacity="0.86"/>
<rect x="841.2" y="533.4" width="1" height="12.2" fill="#444" opacity="0.45"/>
<rect x="842.8" y="516.5" width="0.7" height="45.0" fill="#333" opacity="0.69"/>
<rect x="849.4" y="516.5" width="0.7" height="45.0" fill="#333" opacity="0.06"/>
<rect x="852.6" y="516.5" width="0.7" height="45.0" fill="#333" opacity="0.86"/>
<rect x="855.9" y="516.5" width="0.7" height="45.0" fill="#333" opacity="0.11"/>
<rect x="862.4" y="516.5" width="0.7" height="45.0" fill="#333" opacity="0.06"/>
<rect x="865.6" y="516.5" width="0.7" height="45.0" fill="#333" opacity="0.69"/>
<rect x="867.6" y="532.9" width="1" height="13.3" fill="#444" opacity="0.45"/>
<rect x="871.4" y="533.7" width="1" height="11.6" fill="#444" opacity="0.45"/>
<rect x="872.1" y="516.5" width="0.7" height="45.0" fill="#333" opacity="0.25"/>
<rect x="875.4" y="516.5" width="0.7" height="45.0" fill="#333" opacity="0.69"/>
<rect x="878.6" y="516.5" width="0.7" height="45.0" fill="#333" opacity="0.69"/>
<rect x="881.9" y="516.5" width="0.7" height="45.0" fill="#333" opacity="0.06"/>
<rect x="883.7" y="536.7" width="1" height="5.6" fill="#444" opacity="0.45"/>
<rect x="885.1" y="516.5" width="0.7" height="45.0" fill="#333" opacity="0.46"/>
<rect x="888.4" y="516.5" width="0.7" height="45.0" fill="#333" opacity="0.05"/>
<rect x="891.7" y="516.5" width="0.7" height="45.0" fill="#333" opacity="0.40"/>
<rect x="894.2" y="534.2" width="1" height="10.6" fill="#444" opacity="0.45"/>
<rect x="894.9" y="516.5" width="0.7" height="45.0" fill="#333" opacity="0.11"/>
<rect x="898.2" y="516.5" width="0.7" height="45.0" fill="#333" opacity="0.46"/>
<rect x="901.4" y="516.5" width="0.7" height="45.0" fill="#333" opacity="0.05"/>
<rect x="903.8" y="534.0" width="1" height="11.1" fill="#444" opacity="0.45"/>
<rect x="904.7" y="516.5" width="0.7" height="45.0" fill="#333" opacity="0.40"/>
<rect x="907.9" y="516.5" width="0.7" height="45.0" fill="#333" opacity="0.11"/>
<rect x="909.6" y="535.5" width="1" height="8.0" fill="#444" opacity="0.45"/>
<rect x="911.2" y="516.5" width="0.7" height="45.0" fill="#333" opacity="0.25"/>
<rect x="917.7" y="516.5" width="0.7" height="45.0" fill="#333" opacity="0.69"/>
<rect x="920.1" y="534.5" width="1" height="9.9" fill="#444" opacity="0.45"/>
<rect x="920.9" y="516.5" width="0.7" height="45.0" fill="#333" opacity="0.06"/>
<rect x="922.6" y="535.5" width="1" height="7.9" fill="#444" opacity="0.45"/>
<rect x="925.8" y="534.9" width="1" height="9.1" fill="#444" opacity="0.45"/>
<rect x="927.5" y="516.5" width="0.7" height="45.0" fill="#333" opacity="0.25"/>
<rect x="930.7" y="516.5" width="0.7" height="45.0" fill="#333" opacity="0.69"/>
<rect x="932.9" y="536.9" width="1" height="5.3" fill="#444" opacity="0.45"/>
<rect x="934.0" y="516.5" width="0.7" height="45.0" fill="#333" opacity="0.06"/>
<rect x="935.6" y="535.0" width="1" height="9.0" fill="#444" opacity="0.45"/>
<rect x="937.2" y="516.5" width="0.7" height="45.0" fill="#333" opacity="0.25"/>
<rect x="940.5" y="516.5" width="0.7" height="45.0" fill="#333" opacity="0.06"/>
<rect x="942.4" y="533.9" width="1" height="11.1" fill="#444" opacity="0.45"/>
<rect x="943.7" y="516.5" width="0.7" height="45.0" fill="#333" opacity="0.40"/>
<rect x="947.0" y="516.5" width="0.7" height="45.0" fill="#333" opacity="0.69"/>
<rect x="948.7" y="537.3" width="1" height="4.4" fill="#444" opacity="0.45"/>
<rect x="950.2" y="516.5" width="0.7" height="45.0" fill="#333" opacity="0.11"/>
<rect x="952.3" y="534.8" width="1" height="9.5" fill="#444" opacity="0.45"/>
<rect x="953.5" y="516.5" width="0.7" height="45.0" fill="#333" opacity="0.06"/>
<rect x="956.7" y="516.5" width="0.7" height="45.0" fill="#333" opacity="0.69"/>
<rect x="960.0" y="516.5" width="0.7" height="45.0" fill="#333" opacity="0.06"/>
<rect x="963.3" y="516.5" width="0.7" height="45.0" fill="#333" opacity="0.05"/>
<rect x="966.5" y="516.5" width="0.7" height="45.0" fill="#333" opacity="0.46"/>
<rect x="969.8" y="516.5" width="0.7" height="45.0" fill="#333" opacity="0.69"/>
<rect x="973.0" y="516.5" width="0.7" height="45.0" fill="#333" opacity="0.69"/>
<rect x="976.3" y="516.5" width="0.7" height="45.0" fill="#333" opacity="0.69"/>
<rect x="978.6" y="533.6" width="1" height="11.8" fill="#444" opacity="0.45"/>
<rect x="979.5" y="516.5" width="0.7" height="45.0" fill="#333" opacity="0.25"/>
<rect x="982.8" y="516.5" width="0.7" height="45.0" fill="#333" opacity="0.86"/>
<rect x="986.0" y="516.5" width="0.7" height="45.0" fill="#333" opacity="0.46"/>
<rect x="989.3" y="516.5" width="0.7" height="45.0" fill="#333" opacity="0.11"/>
<rect x="992.5" y="516.5" width="0.7" height="45.0" fill="#333" opacity="0.11"/>
<rect x="995.8" y="516.5" width="0.7" height="45.0" fill="#333" opacity="0.69"/>
<rect x="999.1" y="516.5" width="0.7" height="45.0" fill="#333" opacity="0.25"/>
<rect x="1002.3" y="516.5" width="0.7" height="45.0" fill="#333" opacity="0.05"/>
<rect x="1004.1" y="533.3" width="1" height="12.3" fill="#444" opacity="0.45"/>
<rect x="1005.6" y="516.5" width="0.7" height="45.0" fill="#333" opacity="0.69"/>
<rect x="1008.8" y="516.5" width="0.7" height="45.0" fill="#333" opacity="0.86"/>
<rect x="1014.1" y="535.3" width="1" height="8.4" fill="#444" opacity="0.45"/>
<rect x="1018.6" y="516.5" width="0.7" height="45.0" fill="#333" opacity="0.69"/>
<rect x="1021.8" y="516.5" width="0.7" height="45.0" fill="#333" opacity="0.69"/>
<rect x="1025.1" y="516.5" width="0.7" height="45.0" fill="#333" opacity="0.05"/>
<rect x="1027.3" y="537.4" width="1" height="4.3" fill="#444" opacity="0.45"/>
<rect x="1028.3" y="516.5" width="0.7" height="45.0" fill="#333" opacity="0.25"/>
<rect x="1031.6" y="516.5" width="0.7" height="45.0" fill="#333" opacity="0.46"/>
<rect x="1034.8" y="516.5" width="0.7" height="45.0" fill="#333" opacity="0.40"/>
<rect x="1038.1" y="516.5" width="0.7" height="45.0" fill="#333" opacity="0.11"/>
<rect x="1041.4" y="516.5" width="0.7" height="45.0" fill="#333" opacity="0.69"/>
<rect x="1044.6" y="516.5" width="0.7" height="45.0" fill="#333" opacity="0.25"/>
<rect x="1047.9" y="516.5" width="0.7" height="45.0" fill="#333" opacity="0.40"/>
<rect x="1050.2" y="533.8" width="1" height="11.4" fill="#444" opacity="0.45"/>
<rect x="1051.1" y="516.5" width="0.7" height="45.0" fill="#333" opacity="0.11"/>
<rect x="1054.4" y="516.5" width="0.7" height="45.0" fill="#333" opacity="0.46"/>
<rect x="1060.9" y="516.5" width="0.7" height="45.0" fill="#333" opacity="0.86"/>
<rect x="1064.1" y="516.5" width="0.7" height="45.0" fill="#333" opacity="0.69"/>
<rect x="1067.4" y="516.5" width="0.7" height="45.0" fill="#333" opacity="0.11"/>
<rect x="1069.9" y="532.7" width="1" height="13.6" fill="#444" opacity="0.45"/>
<rect x="1070.6" y="516.5" width="0.7" height="45.0" fill="#333" opacity="0.11"/>
<rect x="1073.9" y="516.5" width="0.7" height="45.0" fill="#333" opacity="0.69"/>
<rect x="1076.0" y="532.5" width="1" height="14.0" fill="#444" opacity="0.45"/>
<rect x="1079.0" y="535.0" width="1" height="9.1" fill="#444" opacity="0.45"/>
<rect x="1080.4" y="516.5" width="0.7" height="45.0" fill="#333" opacity="0.69"/>
<rect x="1082.6" y="535.7" width="1" height="7.7" fill="#444" opacity="0.45"/>
<rect x="1086.9" y="516.5" width="0.7" height="45.0" fill="#333" opacity="0.40"/>
<rect x="1093.4" y="516.5" width="0.7" height="45.0" fill="#333" opacity="0.06"/>
<rect x="1095.7" y="532.9" width="1" height="13.2" fill="#444" opacity="0.45"/>
<rect x="1096.7" y="516.5" width="0.7" height="45.0" fill="#333" opacity="0.06"/>
<rect x="1099.9" y="516.5" width="0.7" height="45.0" fill="#333" opacity="0.86"/>
<rect x="1101.5" y="533.1" width="1" height="12.7" fill="#444" opacity="0.45"/>
<rect x="1103.2" y="516.5" width="0.7" height="45.0" fill="#333" opacity="0.69"/>
<rect x="1104.9" y="535.1" width="1" height="8.7" fill="#444" opacity="0.45"/>
<rect x="1106.4" y="516.5" width="0.7" height="45.0" fill="#333" opacity="0.25"/>
<rect x="1108.8" y="535.2" width="1" height="8.7" fill="#444" opacity="0.45"/>
<rect x="1109.7" y="516.5" width="0.7" height="45.0" fill="#333" opacity="0.25"/>
<rect x="1113.0" y="516.5" width="0.7" height="45.0" fill="#333" opacity="0.40"/>
<rect x="1116.2" y="516.5" width="0.7" height="45.0" fill="#333" opacity="0.06"/>
<rect x="1119.5" y="516.5" width="0.7" height="45.0" fill="#333" opacity="0.69"/>
<rect x="1121.4" y="536.8" width="1" height="5.3" fill="#444" opacity="0.45"/>
<rect x="1122.7" y="516.5" width="0.7" height="45.0" fill="#333" opacity="0.11"/>
<rect x="1124.8" y="533.5" width="1" height="11.9" fill="#444" opacity="0.45"/>
<rect x="1126.0" y="516.5" width="0.7" height="45.0" fill="#333" opacity="0.40"/>
<rect x="1129.2" y="516.5" width="0.7" height="45.0" fill="#333" opacity="0.11"/>
<rect x="1131.0" y="533.7" width="1" height="11.5" fill="#444" opacity="0.45"/>
<rect x="1132.5" y="516.5" width="0.7" height="45.0" fill="#333" opacity="0.06"/>
<rect x="1135.7" y="516.5" width="0.7" height="45.0" fill="#333" opacity="0.46"/>
<rect x="1139.0" y="516.5" width="0.7" height="45.0" fill="#333" opacity="0.69"/>
<rect x="1140.6" y="536.7" width="1" height="5.6" fill="#444" opacity="0.45"/>
<rect x="1142.2" y="516.5" width="0.7" height="45.0" fill="#333" opacity="0.25"/>
<rect x="1144.2" y="533.6" width="1" height="11.7" fill="#444" opacity="0.45"/>
<rect x="1145.5" y="516.5" width="0.7" height="45.0" fill="#333" opacity="0.05"/>
<rect x="1147.7" y="533.3" width="1" height="12.5" fill="#444" opacity="0.45"/>
<rect x="1148.7" y="516.5" width="0.7" height="45.0" fill="#333" opacity="0.05"/>
<rect x="1152.0" y="516.5" width="0.7" height="45.0" fill="#333" opacity="0.69"/>
<rect x="1155.3" y="516.5" width="0.7" height="45.0" fill="#333" opacity="0.11"/>
<rect x="1158.5" y="516.5" width="0.7" height="45.0" fill="#333" opacity="0.69"/>
<rect x="1161.8" y="516.5" width="0.7" height="45.0" fill="#333" opacity="0.46"/>
<rect x="1165.0" y="516.5" width="0.7" height="45.0" fill="#333" opacity="0.86"/>
<rect x="1167.4" y="533.8" width="1" height="11.4" fill="#444" opacity="0.45"/>
<rect x="1168.3" y="516.5" width="0.7" height="45.0" fill="#333" opacity="0.11"/>
<rect x="1171.5" y="516.5" width="0.7" height="45.0" fill="#333" opacity="0.69"/>
<rect x="1174.8" y="516.5" width="0.7" height="45.0" fill="#333" opacity="0.69"/>
<rect x="1178.0" y="516.5" width="0.7" height="45.0" fill="#333" opacity="0.86"/>
<rect x="1181.3" y="516.5" width="0.7" height="45.0" fill="#333" opacity="0.46"/>
<rect x="1183.2" y="536.9" width="1" height="5.1" fill="#444" opacity="0.45"/>
<rect x="1184.5" y="516.5" width="0.7" height="45.0" fill="#333" opacity="0.69"/>
<rect x="1186.6" y="535.4" width="1" height="8.2" fill="#444" opacity="0.45"/>
<rect x="1187.8" y="516.5" width="0.7" height="45.0" fill="#333" opacity="0.25"/>
<rect x="1191.1" y="516.5" width="0.7" height="45.0" fill="#333" opacity="0.40"/>
<rect x="1197.6" y="516.5" width="0.7" height="45.0" fill="#333" opacity="0.11"/>
<rect x="1200.8" y="516.5" width="0.7" height="45.0" fill="#333" opacity="0.69"/>
<rect x="1202.5" y="537.3" width="1" height="4.4" fill="#444" opacity="0.45"/>
<rect x="1204.1" y="516.5" width="0.7" height="45.0" fill="#333" opacity="0.86"/>
<rect x="1207.3" y="516.5" width="0.7" height="45.0" fill="#333" opacity="0.11"/>
<rect x="1209.4" y="535.2" width="1" height="8.5" fill="#444" opacity="0.45"/>
<rect x="1210.6" y="516.5" width="0.7" height="45.0" fill="#333" opacity="0.46"/>
<rect x="1212.6" y="535.3" width="1" height="8.4" fill="#444" opacity="0.45"/>
<rect x="1213.8" y="516.5" width="0.7" height="45.0" fill="#333" opacity="0.69"/>
<rect x="1217.1" y="516.5" width="0.7" height="45.0" fill="#333" opacity="0.86"/>
<rect x="1220.3" y="516.5" width="0.7" height="45.0" fill="#333" opacity="0.46"/>
<rect x="1222.4" y="532.8" width="1" height="13.5" fill="#444" opacity="0.45"/>
<rect x="1223.6" y="516.5" width="0.7" height="45.0" fill="#333" opacity="0.06"/>
<rect x="1226.9" y="516.5" width="0.7" height="45.0" fill="#333" opacity="0.06"/>
<rect x="1228.8" y="536.7" width="1" height="5.6" fill="#444" opacity="0.45"/>
<rect x="1230.1" y="516.5" width="0.7" height="45.0" fill="#333" opacity="0.86"/>
<rect x="1233.4" y="516.5" width="0.7" height="45.0" fill="#333" opacity="0.06"/>
<rect x="1235.3" y="535.4" width="1" height="8.2" fill="#444" opacity="0.45"/>
<rect x="1236.6" y="516.5" width="0.7" height="45.0" fill="#333" opacity="0.25"/>
<rect x="1239.9" y="516.5" width="0.7" height="45.0" fill="#333" opacity="0.69"/>
<rect x="1243.1" y="516.5" width="0.7" height="45.0" fill="#333" opacity="0.40"/>
<rect x="1246.4" y="516.5" width="0.7" height="45.0" fill="#333" opacity="0.46"/>
<rect x="1249.6" y="516.5" width="0.7" height="45.0" fill="#333" opacity="0.05"/>
<rect x="1251.6" y="534.1" width="1" height="10.9" fill="#444" opacity="0.45"/>
<rect x="1252.9" y="516.5" width="0.7" height="45.0" fill="#333" opacity="0.46"/>
<rect x="1256.1" y="516.5" width="0.7" height="45.0" fill="#333" opacity="0.69"/>
<rect x="1258.4" y="535.9" width="1" height="7.2" fill="#444" opacity="0.45"/>
<rect x="1259.4" y="516.5" width="0.7" height="45.0" fill="#333" opacity="0.69"/>
<rect x="1265.1" y="536.6" width="1" height="5.8" fill="#444" opacity="0.45"/>
<rect x="1265.9" y="516.5" width="0.7" height="45.0" fill="#333" opacity="0.69"/>
<rect x="1268.4" y="535.1" width="1" height="8.9" fill="#444" opacity="0.45"/>
<rect x="1269.2" y="516.5" width="0.7" height="45.0" fill="#333" opacity="0.40"/>
<rect x="1271.3" y="534.2" width="1" height="10.5" fill="#444" opacity="0.45"/>
<rect x="1272.4" y="516.5" width="0.7" height="45.0" fill="#333" opacity="0.46"/>
<rect x="1274.0" y="533.9" width="1" height="11.2" fill="#444" opacity="0.45"/>
<rect x="271" y="539" width="1004.6" height="1" fill="#494949"/>
<rect x="270" y="100" width="1.2" height="529" fill="#f4f4f4"/>
<path d="M264 92.5h12.5v12.5l-6.25 5-6.25-5z" fill="#fff"/>
</svg>

<!-- title bar -->
<div class="abs" style="left:102px;top:24px;width:40px;height:40px;border-radius:7px;background:#262626"></div>
<div class="t" style="left:152px;top:37px;font-size:14.3px;font-weight:700;letter-spacing:-0.27px;color:#f5f5f5">Due Upon Receipt - American Legion</div>

<div class="pill" style="left:762px;width:91px"></div>
<div class="t" style="left:772.5px;top:38px;font-size:12px;font-weight:700;letter-spacing:-0.05px;color:#eee">6 Tracks</div>
<div class="pill" style="left:860px;width:94.5px"></div>
<div class="t" style="left:901px;top:38px;font-size:12px;font-weight:700;letter-spacing:-1.25px;color:#eee">112</div>
<div class="pill" style="left:962px;width:94px"></div>
<div class="t" style="left:1007px;top:38px;font-size:12px;font-weight:700;color:#eee">C</div>
<div class="pill" style="left:1064px;width:61px"></div>
<div class="t" style="left:1077px;top:33.5px;font-size:9.5px;font-weight:400;color:#f0f0f0;text-shadow:0 0 0.4px #ddd;line-height:9.7px;white-space:pre">1 2
3 4</div>
<div class="t" style="left:1171.5px;top:39px;font-size:12.5px;font-weight:700;letter-spacing:0.05px;color:#fff">Export</div>

<!-- track controls inserted here -->
<div class="ms" style="left:71px;top:146px">M</div><div class="ms" style="left:89px;top:146px">S</div>
<div class="lbl" style="left:111.8px;top:148px">Drums</div>
<div class="sl" style="top:173px"></div><div class="slf" style="top:173px"></div><div class="th" style="top:165.5px"><i></i></div>
<div class="kn" style="top:143.9px"><i></i></div>
<div class="lr" style="left:209.5px;top:169px">L</div><div class="lr" style="left:229.5px;top:169px">R</div>
<div class="ms" style="left:71px;top:209px">M</div><div class="ms" style="left:89px;top:209px">S</div>
<div class="lbl" style="left:111.8px;top:211px">Bass</div>
<div class="sl" style="top:236px"></div><div class="slf" style="top:236px"></div><div class="th" style="top:228.5px"><i></i></div>
<div class="kn" style="top:206.9px"><i></i></div>
<div class="lr" style="left:209.5px;top:232px">L</div><div class="lr" style="left:229.5px;top:232px">R</div>
<div class="ms" style="left:71px;top:272px">M</div><div class="ms" style="left:89px;top:272px">S</div>
<div class="lbl" style="left:111.8px;top:274px">Keys</div>
<div class="sl" style="top:299px"></div><div class="slf" style="top:299px"></div><div class="th" style="top:291.5px"><i></i></div>
<div class="kn" style="top:269.9px"><i></i></div>
<div class="lr" style="left:209.5px;top:295px">L</div><div class="lr" style="left:229.5px;top:295px">R</div>
<div class="ms" style="left:71px;top:335px">M</div><div class="ms" style="left:89px;top:335px">S</div>
<div class="lbl" style="left:111.8px;top:337px">Electric Guitar</div>
<div class="sl" style="top:362px"></div><div class="slf" style="top:362px"></div><div class="th" style="top:354.5px"><i></i></div>
<div class="kn" style="top:332.9px"><i></i></div>
<div class="lr" style="left:209.5px;top:358px">L</div><div class="lr" style="left:229.5px;top:358px">R</div>
<div class="ms" style="left:71px;top:398px">M</div><div class="ms" style="left:89px;top:398px">S</div>
<div class="lbl" style="left:111.8px;top:400px">Acoustic Guitar</div>
<div class="sl" style="top:425px"></div><div class="slf" style="top:425px"></div><div class="th" style="top:417.5px"><i></i></div>
<div class="kn" style="top:395.9px"><i></i></div>
<div class="lr" style="left:209.5px;top:421px">L</div><div class="lr" style="left:229.5px;top:421px">R</div>
<div class="ms" style="left:71px;top:461px">M</div><div class="ms" style="left:89px;top:461px">S</div>
<div class="lbl" style="left:111.8px;top:463px">Other</div>
<div class="sl" style="top:488px"></div><div class="slf" style="top:488px"></div><div class="th" style="top:480.5px"><i></i></div>
<div class="kn" style="top:458.9px"><i></i></div>
<div class="lr" style="left:209.5px;top:484px">L</div><div class="lr" style="left:229.5px;top:484px">R</div>
<div class="ms" style="left:71px;top:524px;background:#1a1a1a;color:#f0a030">M</div><div class="ms" style="left:87.5px;top:524px">S</div>
<div class="lbl" style="left:110.5px;top:519px">Smart<br>Metronome</div>
<div class="sl" style="top:551px;background:#2e2e2e"></div><div class="th" style="top:543.5px"></div>
<div class="kn" style="top:521.9px"><i></i></div>
<div class="lr" style="left:209.5px;top:547px">L</div><div class="lr" style="left:229.5px;top:547px">R</div>

<div class="t" style="left:139px;top:595px;font-size:10.5px;color:#6a6a6a;letter-spacing:-0.2px">Reset</div>

<!-- metronome speed -->
<div class="abs" style="left:275px;top:516px;width:25px;height:13.5px;border-radius:3.5px;background:#2a2a2a"></div>
<div class="abs" style="left:302px;top:516px;width:25px;height:13.5px;border-radius:3.5px;background:#fdfdfd"></div>
<div class="abs" style="left:329px;top:516px;width:25px;height:13.5px;border-radius:3.5px;background:#2a2a2a"></div>
<div class="t" style="left:275px;top:518.5px;width:25px;text-align:center;font-size:9px;letter-spacing:-0.2px;font-weight:700;color:#eee">0.5x</div>
<div class="t" style="left:302px;top:518.5px;width:25px;text-align:center;font-size:9px;letter-spacing:-0.2px;font-weight:700;color:#222">1x</div>
<div class="t" style="left:329px;top:518.5px;width:25px;text-align:center;font-size:9px;letter-spacing:-0.2px;font-weight:700;color:#eee">2x</div>

<!-- popup -->
<div class="abs" style="left:830px;top:74px;width:360px;height:252px;border-radius:20px;background:#202020"></div>
<div class="t" style="left:830px;top:102px;width:360px;text-align:center;font-size:18.5px;font-weight:700;letter-spacing:-0.2px;color:#fff">Song Key</div>
<div class="t" style="left:964.5px;top:134px;font-size:12px;color:#8a8a8a;letter-spacing:-0.1px">Tuning (Hz):</div>
<div class="t" style="left:1035px;top:134px;font-size:12px;font-weight:700;color:#f0f0f0;letter-spacing:0px">442</div>
<div class="abs" style="left:854px;top:174px;width:72px;height:53px;border-radius:8px;background:#292929"></div>
<div class="abs" style="left:936px;top:174px;width:148px;height:53px;border-radius:8px;background:#2c2c2c"></div>
<div class="abs" style="left:1094px;top:174px;width:72px;height:53px;border-radius:8px;background:#2a2a2a"></div>
<div class="t" style="left:936px;top:188px;width:144px;text-align:center;font-size:24px;color:#fff;letter-spacing:0px">Gb</div>
<div class="abs" style="left:881px;top:199.3px;width:18px;height:2px;background:#4e4e4e"></div>
<div class="abs" style="left:1118px;top:200px;width:24px;height:1.4px;background:#4c4c4c"></div>
<div class="abs" style="left:1129.3px;top:189px;width:1.4px;height:24px;background:#4c4c4c"></div>
<div class="t" style="left:830px;top:251px;width:360px;text-align:center;font-size:16px;color:#555">Reset</div>

<!-- transport -->
<div class="t" style="left:500.5px;top:738px;font-size:11.3px;color:#8c8c8c;letter-spacing:0.35px">0:00</div>
<div class="t" style="left:816.5px;top:738px;font-size:11.3px;color:#8c8c8c;letter-spacing:0.1px">2:45</div>
<div class="abs" style="left:543px;top:742px;width:261px;height:3px;border-radius:2px;background:#3c4144"></div>
<div class="abs" style="left:537px;top:738px;width:11px;height:11px;border-radius:50%;background:#7d7d7d"></div>

<!-- bottom right buttons -->
<div class="abs" style="left:966.5px;top:715px;width:87px;height:32px;border-radius:7px;background:#1c1c1c"></div>
<div class="t" style="left:1005px;top:725px;font-size:12.5px;font-weight:700;color:#4a4a4a;letter-spacing:-0.3px">Lyrics</div>
<div class="abs" style="left:1064.5px;top:715px;width:96.5px;height:32px;border-radius:7px;background:#242424"></div>
<div class="t" style="left:1109px;top:725px;font-size:12.5px;font-weight:700;color:#f3f3f3;letter-spacing:-0.3px">Chords</div>
<div class="abs" style="left:1172px;top:715px;width:96px;height:32px;border-radius:7px;background:#242424"></div>
<div class="t" style="left:1208px;top:725px;font-size:12.5px;font-weight:700;color:#f3f3f3;letter-spacing:-0.3px">Sections</div>

<!-- avatar -->


<!-- icons overlay -->
<svg style="left:-4px;top:-4px" width="1288" height="776" viewBox="0 0 1288 776">
<!-- logo -->
<g fill="none" stroke="#5cd2e2" stroke-width="2.1" stroke-linecap="butt">
<path d="M17 41.600 C22 41.600 24.500 49.300 29.500 49.300 S37 41.600 42 41.600"/>
<path d="M17 45.600 C22 45.600 24.500 53.300 29.500 53.300 S37 45.600 42 45.600"/>
</g>
<path d="M17 48.3 l2.4 2 h-2.4z M42 48.3 l-2.4 2 h2.4z M17 52.2 h4.2 l1.3 2 h-5.5z M42 52.2 h-4.2 l-1.3 2 h5.5z" fill="#5cd2e2"/>

<!-- sidebar icons -->
<g class="ico" stroke="#b2b2b2" stroke-width="1.45">
<!-- split -->
<path d="M23 107 h7.2 c2.2 0 3 -1 4.2 -2.3 l3 -3.2 M33.2 101.3 h4.5 v4.5"/>
<path d="M23 109.9 h6.4 c2.2 0 3 1 4.4 2.4 l3.6 3 M33.2 115.4 h4.5 v-4.5"/>
<!-- voice -->
<circle cx="28.5" cy="138.4" r="3.1"/>
<path d="M22.9 148.8 v-1.4 a3.4 3.4 0 0 1 3.4 -3.4 h4.6 a3.4 3.4 0 0 1 3.4 3.4 v1.4"/>
<path d="M34.6 135.3 a4.6 4.6 0 0 1 0 5.4"/>
<path d="M36.6 133 a8 8 0 0 1 0 9.4"/>
<!-- speaker -->
<rect x="24.4" y="165.6" width="12.1" height="15.2" rx="1.8"/>
<circle cx="30.4" cy="175.3" r="3.1"/>
<circle cx="30.4" cy="169.2" r="0.55" fill="#b2b2b2"/>
<!-- ear -->
<path d="M23.6 203.4 a5.4 5.4 0 1 1 10.3 2.3 c-0.9 1.8 -3 2.6 -3.3 4.6 c-0.3 2.3 -1.6 3.4 -3.2 3.4 c-1.700 0 -2.900 -1.3 -3 -3"/>
<circle cx="28.8" cy="203.9" r="0.6" fill="#b2b2b2"/>
<path d="M34 197.300 c3.600 2.600 4.400 6.800 1.600 10"/>
<!-- note + pencil -->
<path d="M25.500 240.300 v-8.300 l7 -1.700 v4.700"/>
<ellipse cx="23.500" cy="240.500" rx="2" ry="1.800"/>
<path d="M27.700 245.300 l1 -3 l6.700 -6.500 a1.500 1.500 0 0 1 2.200 2.200 l-6.800 6.400 z" stroke-width="1.250"/>
<!-- grid -->
<rect x="23.800" y="263.700" width="5.500" height="5.500" rx="1.300"/>
<rect x="31.800" y="263.700" width="5.500" height="5.500" rx="1.300"/>
<rect x="23.800" y="271.700" width="5.500" height="5.500" rx="1.300"/>
<rect x="31.800" y="271.700" width="5.500" height="5.500" rx="1.300"/>
<!-- playlist -->
<path d="M22 347.700 h8.300 M22 351.500 h7.600 M22 355.300 h5.600"/>
<path d="M33.300 359.500 v-11 c1.300 1.300 3.700 3.500 4.200 6.400"/>
<ellipse cx="31" cy="360" rx="2.300" ry="1.900"/>
</g>
<rect x="10.700" y="314.800" width="39.400" height="2" rx="1" fill="#2b2b2b"/>

<!-- back arrow -->
<path d="M93.300 48.100 h-13.800 M86 42.300 l-6.500 5.800 l6.500 5.800" fill="none" stroke="#f2f2f2" stroke-width="1.500" stroke-linecap="round" stroke-linejoin="round"/>
<!-- song icon -->
<g fill="none" stroke="#7a7a7a" stroke-width="1.200" stroke-linecap="round" stroke-linejoin="round">
<path d="M122.800 52.500 v-9.600 l9.800 -2.300 v9.400"/>
<ellipse cx="120.600" cy="53" rx="2.200" ry="1.900"/>
<ellipse cx="130.400" cy="50.500" rx="2.200" ry="1.900"/>
</g>

<!-- chevrons -->
<g fill="none" stroke="#6a6a6a" stroke-width="1.200" stroke-linecap="round" stroke-linejoin="round">
<path d="M833.900 45.800 l5.200 4.500 l5.200 -4.500"/>
<path d="M935.500 45.800 l5.200 4.500 l5.200 -4.500"/>
<path d="M1037.100 45.800 l5.200 4.500 l5.200 -4.500"/>
<path d="M1105.600 45.800 l5.200 4.500 l5.200 -4.500"/>
</g>
<!-- metronome -->
<g fill="none" stroke="#e6e6e6" stroke-width="1.2" stroke-linecap="round" stroke-linejoin="round">
<path d="M879.800 47.600 L877.100 54 a1.200 1.200 0 0 0 1.100 1.600 h11.600 a1.200 1.200 0 0 0 1.100 -1.600 L885.700 41.300 a1 1 0 0 0 -0.900 -0.600 h-1.700 a1 1 0 0 0 -0.900 0.600 l-0.400 1"/>
<path d="M877.500 52.400 h12.900"/>
<path d="M876.700 41.500 l6.800 10.500"/>
<path d="M876.500 41.300 l0.500 3.200 l2.500 -1.600 z" fill="#e6e6e6" stroke-width="0.7"/>
</g>
<!-- key icon -->
<g fill="none" stroke="#e6e6e6" stroke-width="1.100" stroke-linecap="round">
<path d="M977.800 44.800 h16 M977.800 50.200 h16 M977.800 55.800 h16 M987.700 40.400 v9.800"/>
<ellipse cx="984.900" cy="51.400" rx="2.700" ry="1.700" transform="rotate(-22 984.900 51.400)" fill="#232323"/>
</g>
<!-- export -->
<rect x="1136.800" y="33" width="91.200" height="30.500" rx="6.800" fill="none" stroke="#8e8e8e" stroke-width="1.600"/>
<g fill="none" stroke="#f0f0f0" stroke-width="1.400" stroke-linecap="round" stroke-linejoin="round">
<path d="M1157.500 41.500 v8.800 M1153.200 46.400 l4.300 4.200 l4.300 -4.200"/>
<path d="M1150.400 50.200 v3.200 a1.700 1.700 0 0 0 1.700 1.700 h10.800 a1.700 1.700 0 0 0 1.700 -1.700 v-3.200"/>
</g>
<circle cx="1250.100" cy="44.700" r="1.500" fill="#fff"/><circle cx="1250.100" cy="50.100" r="1.500" fill="#fff"/><circle cx="1250.100" cy="55.500" r="1.500" fill="#fff"/>

<!-- transport -->
<g fill="none" stroke="#dcdcdc" stroke-width="1.350" stroke-linecap="round" stroke-linejoin="round">
<path d="M573.500 718.600 h3.700 l4.300 -3 v12 l-4.300 -3 h-3.700 z"/>
<path d="M585 718.800 a4 4 0 0 1 0 5.600"/>
<path d="M588.300 715.600 a8.600 8.600 0 0 1 0 12"/>
</g>
<g fill="#fff" stroke="#fff" stroke-width="1" stroke-linejoin="round">
<path d="M617.300 721.500 l9.400 -5.400 v10.800 z M626.900 721.500 l9.100 -5.400 v10.800 z"/>
<path d="M663.200 713.800 v15.500 l14.600 -7.750 z" stroke-width="2"/>
<path d="M722 721.500 l-9.400 -5.400 v10.800 z M712.400 721.500 l-9.100 -5.400 v10.800 z"/>
</g>
<g fill="none" stroke="#dcdcdc" stroke-width="1.350" stroke-linecap="round" stroke-linejoin="round">
<path d="M751.500 726.800 a6 6 0 0 1 1.500 -11.300 h6.500 M757.300 713.200 l2.400 2.300 l-2.400 2.300"/>
<path d="M760.800 716.300 a6 6 0 0 1 -1.500 11.300 h-6.500 M755 725.300 l-2.400 2.300 l2.400 2.300"/>
</g>

<!-- lyrics icon -->
<g fill="none" stroke="#3e3e3e" stroke-width="1.200" stroke-linecap="round" stroke-linejoin="round">
<path d="M984.200 728.500 h11.600 a1.700 1.700 0 0 1 1.700 1.700 v8 a1.700 1.700 0 0 1 -1.700 1.700 h-10.300 l-3 2.200 v-11.900 a1.700 1.700 0 0 1 1.700 -1.700 z"/>
<path d="M987.500 733.300 q1.200 0.400 0 1.800 M991.500 733.300 q1.200 0.400 0 1.800"/>
</g>
<!-- chords icon -->
<g fill="none" stroke="#ececec" stroke-width="1.200" stroke-linecap="round" stroke-linejoin="round">
<path d="M1088.700 742.800 v-13 a1.800 1.800 0 0 1 1.800 -1.800 h10.300 a1.800 1.800 0 0 1 1.800 1.800 v13"/>
<path d="M1093.300 728 v14.800 M1097.900 728 v14.800 M1088.700 736.400 h13.900"/>
<circle cx="1097.900" cy="732" r="0.900" fill="#ececec"/><circle cx="1093.300" cy="741.300" r="0.900" fill="#ececec"/>
</g>
<!-- sections icon -->
<g fill="none" stroke="#ececec" stroke-width="1.300" stroke-linecap="round" stroke-linejoin="round">
<path d="M1190.500 731.400 h-2 a2 2 0 0 0 -2 2 v2.500 a2 2 0 0 0 2 2 h14.200 a2 2 0 0 0 2 -2 v-2.500 a2 2 0 0 0 -2 -2 h-10 M1194.300 727.500 l3.400 3.400 l-3.400 3.400"/>
<path d="M1186.500 740.500 a2 2 0 0 0 2 2 h14.200 a2 2 0 0 0 2 -2"/>
</g>

<!-- avatar -->
<defs><clipPath id="avc"><circle cx="30.1" cy="741.6" r="19.3"/></clipPath></defs>
<circle cx="30.1" cy="741.6" r="19.4" fill="#94b8bc"/>
<g clip-path="url(#avc)">
<path d="M17 756 l3 -5.500 l6 -4 l3.500 5.500 l0.500 10 h-12 z" fill="#e65f1e"/>
<path d="M34 746.500 l6 1.500 l4.200 7 l-2 6 h-7.500 l0.800 -9 z" fill="#f58b2c"/>
<path d="M26.800 748.500 l4.200 4.500 l3.300 -4.500 l1.400 13 h-6.700 z" fill="#8edbea"/>
<path d="M27 744 l6.500 -1 l1.500 4 l-3.600 5.500 l-4.800 -5 z" fill="#2a2220"/>
<path d="M32 741 l4.200 -1.800 l0.800 3.800 l-1.400 3.300 l-3 0.600 z" fill="#7c4522"/>
<path d="M20.500 732 l2 -2.600 l3.500 -1.400 l5 0.500 l4 1.500 l3 3 l1 4 l-2 -1.200 l-2 3 l-2.200 2 l-0.800 4.800 l-4 2 l-4 -3.600 l-2 -4 v-5 z" fill="#0c0c0c"/>
</g>

</svg>

</div>
</div>
</body>
</html>
